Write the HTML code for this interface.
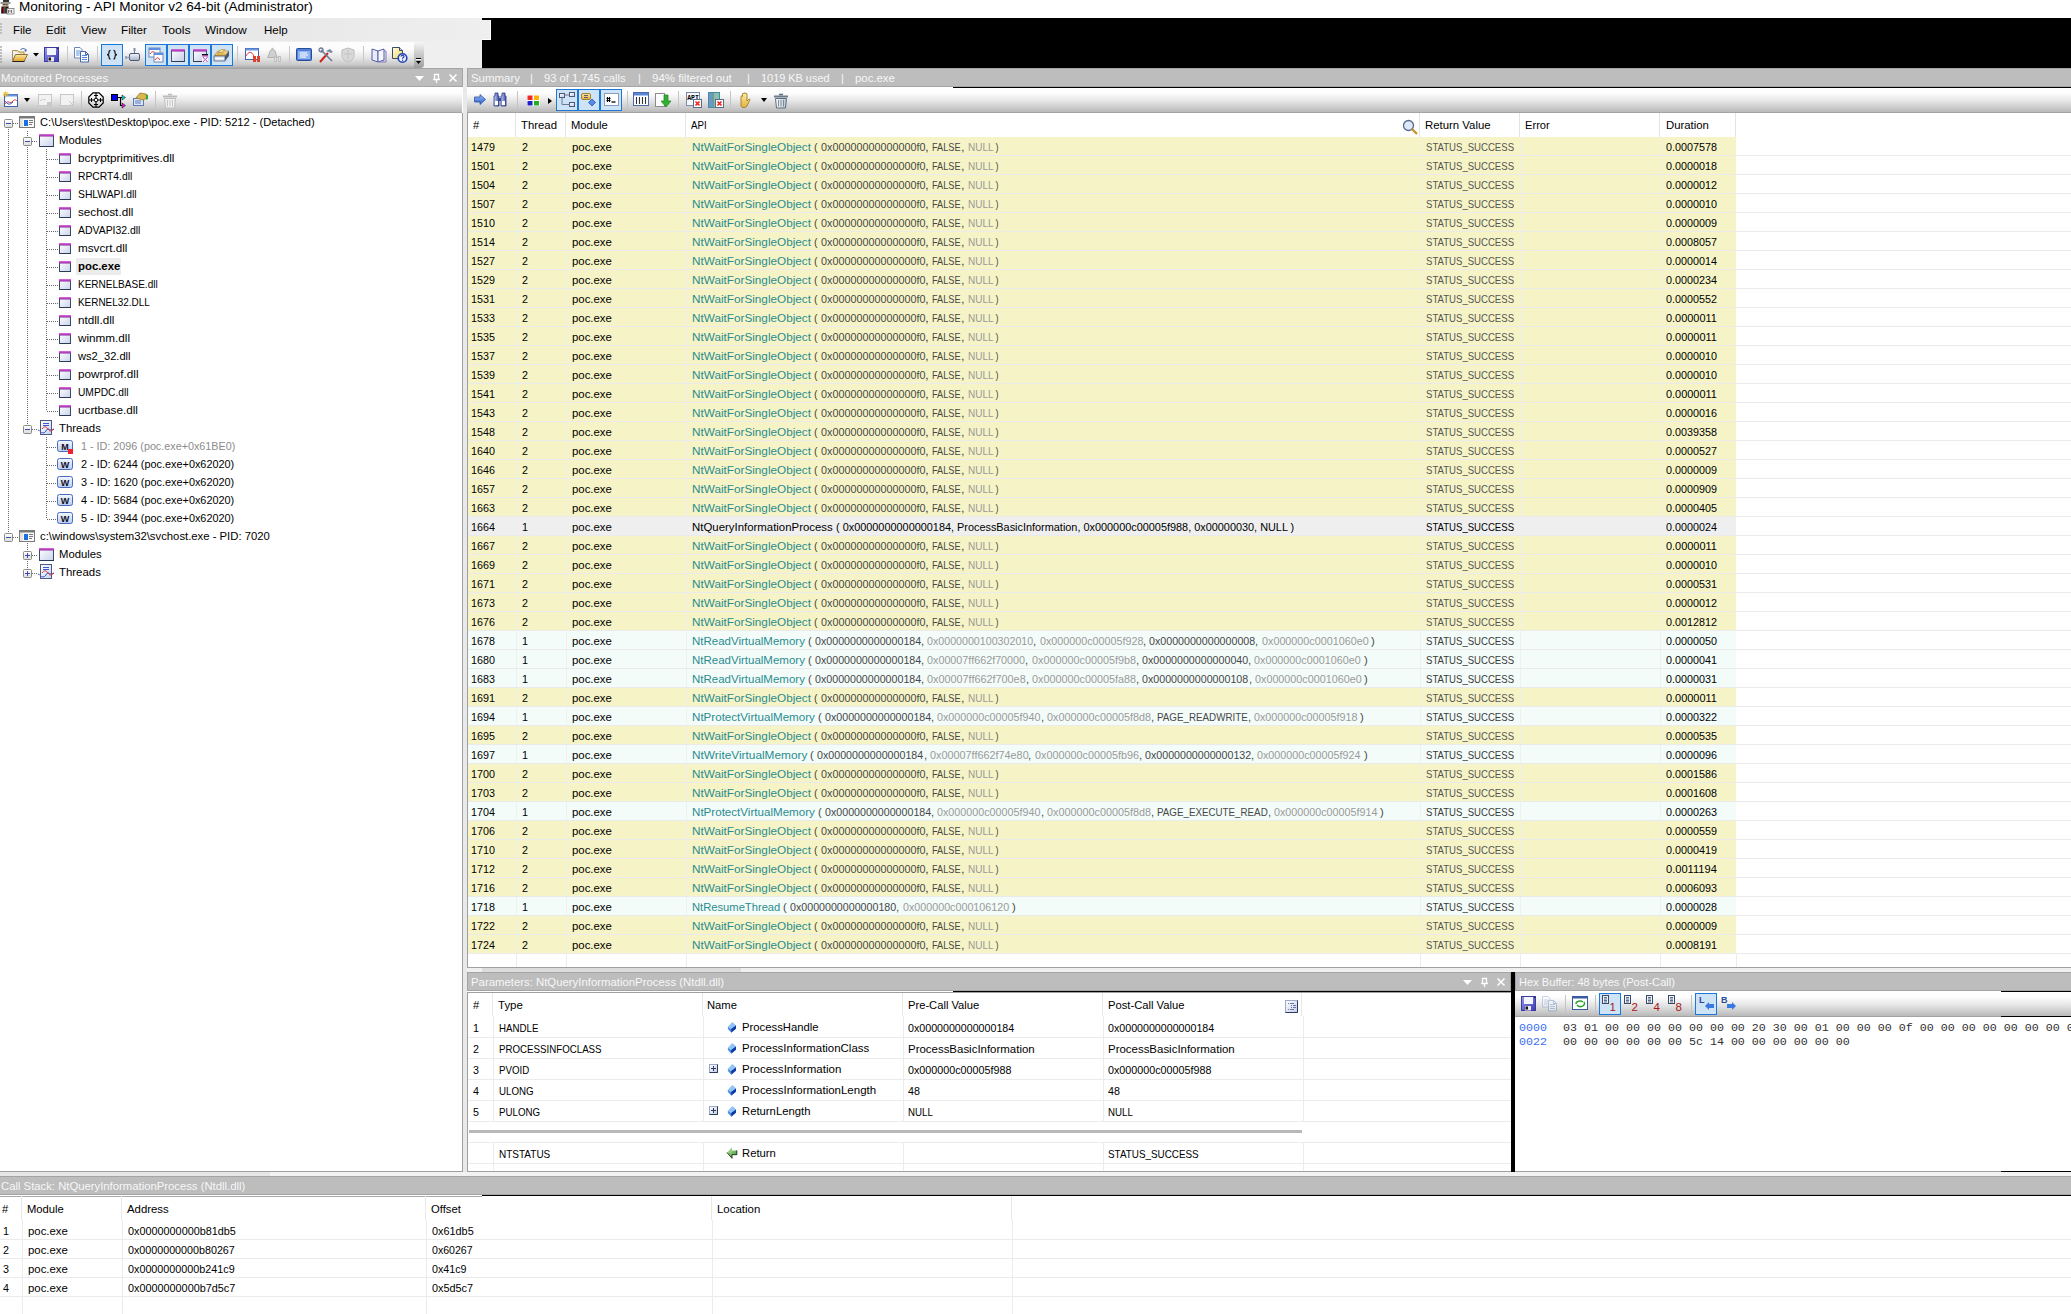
<!DOCTYPE html><html><head><meta charset="utf-8"><style>
*{margin:0;padding:0;box-sizing:border-box}
html,body{width:2071px;height:1314px;overflow:hidden;background:#fff}
body{position:relative;font-family:"Liberation Sans",sans-serif;font-size:11px;color:#000;line-height:1}
.a{position:absolute}
.t{position:absolute;white-space:pre}
svg{position:absolute;overflow:visible}
.ptitle{position:absolute;height:19px;background:#bdbdbd;border:1px solid #a4a4a4;color:#f7f7f7;font-size:11.5px}
.ptitle .t{top:4px}
.tb{position:absolute;height:26px;background:linear-gradient(#ffffff 0%,#fdfdfd 25%,#e6e6e6 55%,#c9c9c9 85%,#b9b9b9 100%);border-bottom:1px solid #a3a3a3}
.chk{position:absolute;background:#cfe3f6;border:1px solid #1a78d6}
.sep{position:absolute;width:1px;background:#c4c4c4}
.rl{position:absolute;height:1px;background:#ececec}
.vl{position:absolute;width:1px;background:#e6e6e6}
</style></head><body>
<svg width="0" height="0" style="left:0;top:0"><defs><linearGradient id="fold" x1="0" y1="0" x2="0" y2="1"><stop offset="0" stop-color="#fbe9a0"/><stop offset="1" stop-color="#e0a020"/></linearGradient><linearGradient id="joyg" x1="0" y1="0" x2="0" y2="1"><stop offset="0" stop-color="#f4f6fa"/><stop offset="1" stop-color="#a8b4c8"/></linearGradient><linearGradient id="winb" x1="0" y1="0" x2="1" y2="1"><stop offset="0" stop-color="#ffffff"/><stop offset="1" stop-color="#c4cce8"/></linearGradient><linearGradient id="purp" x1="0" y1="0" x2="0" y2="1"><stop offset="0" stop-color="#e070e0"/><stop offset="1" stop-color="#9020a0"/></linearGradient><linearGradient id="ylw" x1="0" y1="0" x2="0" y2="1"><stop offset="0" stop-color="#fbeaa8"/><stop offset="1" stop-color="#e8b030"/></linearGradient><linearGradient id="hlp" x1="0" y1="0" x2="1" y2="1"><stop offset="0" stop-color="#fffbe0"/><stop offset="1" stop-color="#f0d860"/></linearGradient><linearGradient id="arw" x1="0" y1="0" x2="0" y2="1"><stop offset="0" stop-color="#9cc0f4"/><stop offset="1" stop-color="#2a5ac8"/></linearGradient><linearGradient id="bino" x1="0" y1="0" x2="1" y2="0"><stop offset="0" stop-color="#c8d4f0"/><stop offset="1" stop-color="#3a4aa8"/></linearGradient><linearGradient id="trs" x1="0" y1="0" x2="1" y2="0"><stop offset="0" stop-color="#ffffff"/><stop offset="1" stop-color="#b8c4d0"/></linearGradient><linearGradient id="hnd" x1="0" y1="0" x2="0" y2="1"><stop offset="0" stop-color="#fff0a0"/><stop offset="1" stop-color="#e0b040"/></linearGradient><linearGradient id="grn" x1="0" y1="0" x2="1" y2="1"><stop offset="0" stop-color="#c8f0b0"/><stop offset="1" stop-color="#3a8a30"/></linearGradient><linearGradient id="flop" x1="0" y1="0" x2="1" y2="1"><stop offset="0" stop-color="#9a9af0"/><stop offset="1" stop-color="#3a3ab0"/></linearGradient></defs></svg>
<svg style="left:0px;top:0px" width="16" height="16" viewBox="0 0 16 16"><path d="M3 0h6v2H3z" fill="#333"/><path d="M0.5 2.5h10v1h-10z" fill="#2a2a2a"/><path d="M2.5 3.5h6v3h-6z" fill="#b89a80"/><rect x="3" y="4" width="2" height="1" fill="#444"/><rect x="5.5" y="4" width="2" height="1" fill="#444"/><rect x="3" y="5.5" width="3" height="1.2" fill="#f0c090"/><path d="M1.5 6.5h7l0.5 7H1z" fill="#1a1a1a"/><path d="M3 7h1v6H3z" fill="#c00010"/><path d="M4 7h1.5v6H4z" fill="#555"/><rect x="7" y="8.5" width="7" height="5.5" fill="#f4f4f4" stroke="#777" stroke-width="0.8"/><path d="M8.5 13V10l1.5 1.5L11.5 10v3" stroke="#666" fill="none" stroke-width="0.9"/></svg>
<div class="t" style="left:19px;top:-1px;font-size:13.5px;line-height:16px;transform:scaleX(1.0043);transform-origin:0 0;">Monitoring - API Monitor v2 64-bit (Administrator)</div>
<div class="a" style="left:0px;top:18px;width:491px;height:23px;background:linear-gradient(90deg,#e4e4e4,#e9e9e9 300px,#efefef)"></div>
<svg style="left:0px;top:23px" width="3" height="13" viewBox="0 0 3 13"><path d="M0 1h2M0 4h2M0 7h2M0 10h2" stroke="#999"/></svg>
<div class="t" style="left:13px;top:24px;font-size:11.8px;line-height:13px;transform:scaleX(0.9718);transform-origin:0 0;">File</div>
<div class="t" style="left:46px;top:24px;font-size:11.8px;line-height:13px;transform:scaleX(0.9703);transform-origin:0 0;">Edit</div>
<div class="t" style="left:81px;top:24px;font-size:11.8px;line-height:13px;transform:scaleX(0.9931);transform-origin:0 0;">View</div>
<div class="t" style="left:121px;top:24px;font-size:11.8px;line-height:13px;transform:scaleX(0.9905);transform-origin:0 0;">Filter</div>
<div class="t" style="left:162px;top:24px;font-size:11.8px;line-height:13px;transform:scaleX(1.0425);transform-origin:0 0;">Tools</div>
<div class="t" style="left:205px;top:24px;font-size:11.8px;line-height:13px;transform:scaleX(0.9922);transform-origin:0 0;">Window</div>
<div class="t" style="left:264px;top:24px;font-size:11.8px;line-height:13px;transform:scaleX(0.9768);transform-origin:0 0;">Help</div>
<div class="a" style="left:0px;top:41px;width:482px;height:27px;background:#efefef"></div>
<div class="a" style="left:0px;top:42px;width:424px;height:26px;background:linear-gradient(#fdfdfd 0%,#fbfbfb 30%,#e4e4e4 62%,#c8c8c8 88%,#a8a8a8 100%);border-radius:0 4px 4px 0"></div>
<div class="a" style="left:414px;top:42px;width:10px;height:26px;background:linear-gradient(#f6f6f6 0%,#d0d0d0 40%,#b0b0b0 80%,#9c9c9c 100%);border-radius:0 4px 4px 0"></div>
<svg style="left:416px;top:58px" width="6" height="7" viewBox="0 0 6 7"><path d="M0 0.5h5" stroke="#000"/><path d="M0 1.5h5" stroke="#fff"/><path d="M0 3h5l-2.5 3z" fill="#000"/></svg>
<svg style="left:0px;top:46px" width="3" height="17" viewBox="0 0 3 17"><path d="M0 1h2M0 4h2M0 7h2M0 10h2M0 13h2M0 16h2" stroke="#888"/></svg>
<div class="a" style="left:67px;top:46px;width:1px;height:17px;background:#c8c8c8"></div>
<div class="a" style="left:97px;top:46px;width:1px;height:17px;background:#c8c8c8"></div>
<div class="a" style="left:237px;top:46px;width:1px;height:17px;background:#c8c8c8"></div>
<div class="a" style="left:289px;top:46px;width:1px;height:17px;background:#c8c8c8"></div>
<div class="a" style="left:363px;top:46px;width:1px;height:17px;background:#c8c8c8"></div>
<div class="chk" style="left:101px;top:44px;width:22px;height:22px;"></div>
<div class="chk" style="left:145px;top:44px;width:22px;height:22px;"></div>
<div class="chk" style="left:167px;top:44px;width:22px;height:22px;"></div>
<div class="chk" style="left:189px;top:44px;width:22px;height:22px;"></div>
<div class="chk" style="left:211px;top:44px;width:22px;height:22px;"></div>
<svg style="left:11px;top:47px" width="18" height="16" viewBox="0 0 18 16"><path d="M1.5 3.5h5l1.5 1.5h5v3" fill="#f4dc8c" stroke="#a89060"/><path d="M1.5 3.5v10" stroke="#a89060"/><path d="M1.5 14.5l3-7h12l-3.5 7z" fill="url(#fold)" stroke="#8a7040"/><path d="M1.5 14.5h12" stroke="#222" stroke-width="1"/><path d="M9.5 3c1.5-2 4-2 5.5 0" fill="none" stroke="#5a78a8" stroke-width="1.2"/><path d="M16 2.5l-1 2.5-2-1.5z" fill="#3a68b8"/></svg>
<svg style="left:33px;top:53px" width="6" height="4" viewBox="0 0 6 4"><path d="M0 0h6l-3 3.5z" fill="#000"/></svg>
<svg style="left:44px;top:47px" width="16" height="16" viewBox="0 0 16 16"><rect x="0.5" y="0.5" width="14" height="14" fill="url(#flop)" stroke="#3a3aa0"/><rect x="3" y="1" width="9" height="7" fill="#f4f6ff"/><rect x="4" y="10" width="6" height="4.5" fill="#e8e8f0"/><rect x="4.5" y="10.5" width="2.5" height="3" fill="#111"/><rect x="13" y="1" width="1" height="1" fill="#222"/></svg>
<svg style="left:74px;top:47px" width="16" height="16" viewBox="0 0 16 16"><path d="M0.5 0.5h5.5l2 2v8.5H0.5z" fill="#fafcff" stroke="#6a86b8"/><path d="M2 4h4.5M2 6h4.5M2 8h3.5" stroke="#5f9ae0"/><path d="M6.5 4.5h5l3 3v7.5h-8z" fill="#fafcff" stroke="#4a68a8"/><path d="M8 8.5h5M8 10.5h5M8 12.5h5" stroke="#4f8ae0"/><path d="M11.5 4.5v3h3" fill="none" stroke="#4a68a8"/></svg>
<svg style="left:104px;top:47px" width="16" height="16" viewBox="0 0 16 16"><path d="M6.5 3.3c-1.3 0-1.5 0.8-1.5 2.2S4.3 7.6 3 7.6c1.3 0 2 0.8 2 2.1s0.2 2.4 1.5 2.4M9.5 3.3c1.3 0 1.5 0.8 1.5 2.2s0.7 2.1 2 2.1c-1.3 0-2 0.8-2 2.1s-0.2 2.4-1.5 2.4" fill="none" stroke="#1a1a1a" stroke-width="1.2"/></svg>
<svg style="left:125px;top:47px" width="16" height="16" viewBox="0 0 16 16"><rect x="8.5" y="1" width="2" height="3" fill="#8090b0"/><path d="M9.5 4v2" stroke="#6a7a98"/><rect x="4.5" y="6.5" width="10" height="7" rx="1.5" fill="url(#joyg)" stroke="#4a5a78"/><path d="M0.5 10.5h4" stroke="#8a9ab8" stroke-width="1.4"/><rect x="0" y="9" width="2" height="3" fill="#9aaac4"/></svg>
<svg style="left:148px;top:47px" width="16" height="16" viewBox="0 0 16 16"><rect x="1" y="1" width="11" height="9" fill="#fff" stroke="#6d87b8"/><rect x="1" y="1" width="11" height="2" fill="#5d8ee0"/><path d="M2 7c2-3 4-3 6 0" stroke="#e03030" fill="none"/><rect x="6" y="6" width="9" height="9" fill="#fff" stroke="#6d87b8"/><rect x="6" y="6" width="9" height="2" fill="#5d8ee0"/><path d="M7 13c2-3 3-3 5 0" stroke="#e03030" fill="none"/></svg>
<svg style="left:170px;top:47px" width="16" height="16" viewBox="0 0 16 16"><rect x="1.5" y="2.5" width="13" height="12" fill="url(#winb)" stroke="#4a5670"/><rect x="1" y="2" width="14" height="2.5" fill="url(#purp)"/><path d="M1.5 14.5h13" stroke="#2a3a50"/></svg>
<svg style="left:192px;top:47px" width="16" height="16" viewBox="0 0 16 16"><rect x="1.5" y="2.5" width="13" height="12" fill="url(#winb)" stroke="#4a5670"/><rect x="1" y="2" width="14" height="2.5" fill="url(#purp)"/><path d="M1.5 14.5h13" stroke="#2a3a50"/><rect x="10" y="7" width="6" height="8" fill="#fff"/><rect x="10" y="7" width="6" height="1.5" fill="#111"/><rect x="10" y="8.5" width="6" height="1" fill="#a030b0"/><path d="M11 10l2 2.5-2 2.5M15.5 10l-2 2.5 2 2.5" stroke="#b040c0" fill="none"/></svg>
<svg style="left:213px;top:47px" width="17" height="16" viewBox="0 0 17 16"><path d="M1 9l4-5h11l-4 5z" fill="url(#ylw)" stroke="#a08030" stroke-width="0.7"/><path d="M5 5.5l3-3h4l-3 3z" fill="#f4e0a0" stroke="#a08030" stroke-width="0.6"/><path d="M4 7h8M7 4.5l-3 4M11 4.5l-3 4" stroke="#c8a040" stroke-width="0.6"/><path d="M1 9h11v5H1z" fill="#dde6f4" stroke="#4a5a78" stroke-width="0.8"/><path d="M12 9l4-5v5l-4 5z" fill="#4a5a78"/><path d="M2.5 11.5h8" stroke="#fff" stroke-width="1.2"/></svg>
<svg style="left:245px;top:47px" width="16" height="16" viewBox="0 0 16 16"><rect x="0.5" y="1.5" width="13" height="11" fill="#fff" stroke="#3d63b0"/><rect x="0.5" y="1.5" width="13" height="2" fill="#6a96e0"/><path d="M1 9c3-5 5-5 8 0" stroke="#e03a3a" fill="none"/><rect x="8" y="9" width="3" height="6" fill="#e0402a"/><rect x="12" y="9" width="3" height="6" fill="#e0402a"/></svg>
<svg style="left:266px;top:47px" width="16" height="16" viewBox="0 0 16 16"><path d="M1.5 10.5c1.5-1 1.5-6 3.5-7.5s4 0 4.5 2 0.5 4 2 5.5z" fill="#d0d0d0" stroke="#b0b0b0"/><circle cx="6.5" cy="2" r="1.2" fill="#c0c0c0"/><rect x="8.5" y="9.5" width="2" height="5" fill="#e0e0e0" stroke="#b8b8b8" stroke-width="0.8"/><rect x="12.5" y="9.5" width="2" height="5" fill="#e0e0e0" stroke="#b8b8b8" stroke-width="0.8"/></svg>
<svg style="left:296px;top:47px" width="16" height="16" viewBox="0 0 16 16"><rect x="0.5" y="1.5" width="15" height="12" rx="1" fill="#4f7fd8" stroke="#2a4d9a"/><rect x="2" y="4" width="12" height="8" fill="#8fb4f0"/><path d="M4 6h7M4 8h8M4 10h6" stroke="#fff"/></svg>
<svg style="left:318px;top:47px" width="16" height="16" viewBox="0 0 16 16"><path d="M2 15L10 6" stroke="#d02020" stroke-width="2"/><path d="M8 4l4-2 3 3-2 1z" fill="#7a8aa8"/><path d="M3 3l11 11" stroke="#6a7a98" stroke-width="1.6"/><circle cx="3" cy="3" r="2" fill="none" stroke="#6a7a98" stroke-width="1.3"/></svg>
<svg style="left:340px;top:47px" width="16" height="16" viewBox="0 0 16 16"><path d="M8 1l6 2v5c0 4-3 6-6 7-3-1-6-3-6-7V3z" fill="#d8d8d8" stroke="#bdbdbd"/><path d="M8 3v10M4 7h8" stroke="#c4c4c4"/></svg>
<svg style="left:371px;top:47px" width="16" height="16" viewBox="0 0 16 16"><path d="M1 2l6 2v11l-6-2z" fill="#e6ecf8" stroke="#5a5aa8"/><path d="M7 4l6-2v11l-6 2z" fill="#f4f6fc" stroke="#5a5aa8"/><path d="M13 4h2v11H8" fill="none" stroke="#7a7ac8"/></svg>
<svg style="left:392px;top:47px" width="16" height="16" viewBox="0 0 16 16"><path d="M0.5 0.5h7l3 3v8H0.5z" fill="url(#hlp)" stroke="#3a4a6a"/><path d="M7.5 0.5v3h3" fill="#c8d4e8" stroke="#3a4a6a"/><circle cx="10.5" cy="11" r="4.3" fill="#eef4ff" stroke="#2040b8" stroke-width="1.6"/><path d="M9 9.5c0-1.5 3-1.5 3 0 0 1-1.5 1-1.5 2.2" fill="none" stroke="#2a40a8" stroke-width="1.2"/><rect x="10" y="12.6" width="1.2" height="1.2" fill="#2a40a8"/></svg>
<div class="a" style="left:482px;top:18px;width:1589px;height:50px;background:#000"></div>
<div class="a" style="left:482px;top:20px;width:9px;height:20px;background:#efefef;border-right:1px solid #fff;border-bottom:1px solid #fff"></div>
<div class="ptitle" style="left:0px;top:68px;width:463px;border-left:none;"></div>
<div class="t" style="left:1px;top:72px;font-size:11.3px;line-height:13px;color:#f7f7f7;transform:scaleX(1.0098);transform-origin:0 0;">Monitored Processes</div>
<svg style="left:415px;top:76px" width="9" height="5" viewBox="0 0 9 5"><path d="M0 0h9l-4.5 5z" fill="#fff"/></svg>
<svg style="left:433px;top:74px" width="7" height="9" viewBox="0 0 7 9"><path d="M1.5 0.5h4v5h-4z" fill="none" stroke="#fff" stroke-width="1.3"/><path d="M0 5.5h7" stroke="#fff" stroke-width="1.2"/><path d="M3.5 6v3" stroke="#fff" stroke-width="1.2"/></svg>
<svg style="left:449px;top:74px" width="8" height="8" viewBox="0 0 8 8"><path d="M0.5 0.5l7 7M7.5 0.5l-7 7" stroke="#fff" stroke-width="1.5"/></svg>
<div class="tb" style="left:0;top:87px;width:462px"></div>
<div class="a" style="left:81px;top:91px;width:1px;height:18px;background:#c4c4c4"></div>
<div class="a" style="left:155px;top:91px;width:1px;height:18px;background:#c4c4c4"></div>
<svg style="left:3px;top:91px" width="16" height="16" viewBox="0 0 16 16"><rect x="1.5" y="3.5" width="13" height="12" fill="#fff" stroke="#3d63b0"/><rect x="1.5" y="3.5" width="13" height="2" fill="#6a96e0"/><path d="M2 13c3-5 5 1 8-3 2-2 3-1 4 0" stroke="#e03a3a" fill="none"/><path d="M2 10c3 4 5 4 8 1" stroke="#3a5ad0" fill="none"/><path d="M2.5 0.5v6M0 3h6M0.5 1l4 4M4.5 1l-4 4" stroke="#f0c020" stroke-width="1"/></svg>
<svg style="left:37px;top:92px" width="16" height="16" viewBox="0 0 16 16"><rect x="1.5" y="2.5" width="13" height="11" fill="#f2f2f2" stroke="#c8c8c8"/><path d="M3 9c2-3 4 0 6-2" stroke="#c8c8c8" fill="none"/><rect x="10" y="10" width="5" height="5" fill="#c8c8c8"/></svg>
<svg style="left:59px;top:92px" width="16" height="16" viewBox="0 0 16 16"><rect x="1.5" y="2.5" width="13" height="11" fill="#f2f2f2" stroke="#c8c8c8"/><path d="M10 9l5 5M15 9l-5 5" stroke="#c8c8c8"/></svg>
<svg style="left:88px;top:92px" width="16" height="16" viewBox="0 0 16 16"><path d="M5 0.8h6l4.2 4.2v6l-4.2 4.2H5L0.8 11V5z" fill="none" stroke="#000" stroke-width="1.2"/><path d="M8 1v14M1 8h14" stroke="#000" stroke-width="1.1"/><path d="M6 3.5h4M6 12.5h4M3.5 6v4M12.5 6v4" stroke="#000"/><circle cx="8" cy="8" r="1.8" fill="#fff" stroke="#000"/></svg>
<svg style="left:111px;top:92px" width="16" height="16" viewBox="0 0 16 16"><rect x="0.5" y="2.5" width="6" height="6" fill="#0000f0" stroke="#000"/><path d="M7 5.5h2.5v8h3" stroke="#000" fill="none" stroke-width="1.2"/><path d="M9.5 5.5h3" stroke="#000"/><path d="M11 3l3.5 2.5-3.5 2.5z" fill="#20d0d0" stroke="#000" stroke-width="0.5"/><path d="M11 11l3.5 2.5-3.5 2.5z" fill="#e020e0" stroke="#000" stroke-width="0.5"/></svg>
<svg style="left:132px;top:91px" width="17" height="16" viewBox="0 0 17 16"><rect x="1.5" y="7.5" width="10" height="7" fill="#dde6f6" stroke="#5a7ab8"/><path d="M3 10h6M3 12h6" stroke="#5a7ab8"/><path d="M4 7l4-5 6 1 1 4-4 2z" fill="#d8b850" stroke="#9a7a20" stroke-width="0.8"/><path d="M14 3l2 1v4l-2 1z" fill="#40a040"/></svg>
<svg style="left:162px;top:92px" width="16" height="17" viewBox="0 0 16 17"><path d="M6 2.5h4" stroke="#bcbcbc" stroke-width="1.5"/><path d="M1 4.5h14" stroke="#bcbcbc" stroke-width="2"/><path d="M2.5 6.5h11l-1 9.5h-9z" fill="#f2f2f2" stroke="#bcbcbc"/><path d="M5.5 8v6.5M8 8v6.5M10.5 8v6.5" stroke="#c4c4c4"/></svg>
<svg style="left:24px;top:98px" width="6" height="4" viewBox="0 0 6 4"><path d="M0 0h6l-3 4z" fill="#000"/></svg>
<div class="a" style="left:462px;top:113px;width:1px;height:1059px;background:#a0a0a0"></div>
<div class="a" style="left:0px;top:1171px;width:463px;height:1px;background:#a0a0a0"></div>
<svg width="0" height="0" style="left:0;top:0"><defs><linearGradient id="mg" x1="0" y1="0" x2="1" y2="1"><stop offset="0" stop-color="#ffffff"/><stop offset="1" stop-color="#c9d3ea"/></linearGradient></defs></svg>
<svg width="0" height="0" style="left:0;top:0"><defs><linearGradient id="eg" x1="0" y1="0" x2="0" y2="1"><stop offset="0" stop-color="#ffffff"/><stop offset="1" stop-color="#dcdcdc"/></linearGradient><linearGradient id="wg" x1="0" y1="0" x2="0" y2="1"><stop offset="0" stop-color="#f4f8ff"/><stop offset="1" stop-color="#b8ccf0"/></linearGradient></defs></svg>
<div class="a" style="left:8px;top:129px;width:1px;height:407px;background:repeating-linear-gradient(180deg,#6a6a6a 0 1px,transparent 1px 2px)"></div>
<div class="a" style="left:27px;top:131px;width:1px;height:294px;background:repeating-linear-gradient(180deg,#6a6a6a 0 1px,transparent 1px 2px)"></div>
<div class="a" style="left:46px;top:149px;width:1px;height:261px;background:repeating-linear-gradient(180deg,#6a6a6a 0 1px,transparent 1px 2px)"></div>
<div class="a" style="left:46px;top:437px;width:1px;height:81px;background:repeating-linear-gradient(180deg,#6a6a6a 0 1px,transparent 1px 2px)"></div>
<div class="a" style="left:27px;top:543px;width:1px;height:26px;background:repeating-linear-gradient(180deg,#6a6a6a 0 1px,transparent 1px 2px)"></div>
<svg style="left:4px;top:119px" width="9" height="9" viewBox="0 0 9 9"><rect x="0.5" y="0.5" width="8" height="8" rx="1" fill="url(#eg)" stroke="#8a8a8a"/><path d="M2 4.5h5" stroke="#3a4ab0"/></svg>
<div class="a" style="left:13px;top:123px;width:6px;height:1px;background:repeating-linear-gradient(90deg,#6a6a6a 0 1px,transparent 1px 2px)"></div>
<svg style="left:19px;top:116px" width="16" height="12" viewBox="0 0 16 12"><rect x="0.5" y="0.5" width="15" height="11" fill="#fafafa" stroke="#7a7a7a"/><rect x="0.5" y="0.5" width="15" height="2" fill="#787878"/><rect x="1" y="3" width="3" height="8" fill="#e4e4e4"/><rect x="5" y="4" width="4" height="6" fill="#1a70e0"/><path d="M10 4.5h4M10 6.5h4M10 8.5h3" stroke="#7a7a7a"/></svg>
<div class="t" style="left:40px;top:116px;font-size:11.3px;line-height:13px;transform:scaleX(0.9852);transform-origin:0 0;">C:\Users\test\Desktop\poc.exe - PID: 5212 - (Detached)</div>
<svg style="left:23px;top:137px" width="9" height="9" viewBox="0 0 9 9"><rect x="0.5" y="0.5" width="8" height="8" rx="1" fill="url(#eg)" stroke="#8a8a8a"/><path d="M2 4.5h5" stroke="#3a4ab0"/></svg>
<div class="a" style="left:32px;top:141px;width:6px;height:1px;background:repeating-linear-gradient(90deg,#6a6a6a 0 1px,transparent 1px 2px)"></div>
<svg style="left:39px;top:134px" width="15" height="13" viewBox="0 0 15 13"><rect x="0.5" y="0.5" width="14" height="12" fill="url(#mg)" stroke="#3a4a68"/><rect x="0" y="0" width="15" height="2.5" fill="url(#purp)"/><path d="M1 12.5h14" stroke="#2a3a58"/></svg>
<div class="t" style="left:59px;top:134px;font-size:11.3px;line-height:13px;">Modules</div>
<div class="a" style="left:47px;top:159px;width:11px;height:1px;background:repeating-linear-gradient(90deg,#6a6a6a 0 1px,transparent 1px 2px)"></div>
<svg style="left:59px;top:153px" width="12" height="11" viewBox="0 0 12 11"><rect x="0.5" y="0.5" width="11" height="10" fill="url(#mg)" stroke="#3a4a68"/><rect x="0" y="0" width="12" height="2.5" fill="url(#purp)"/><path d="M1 10.5h11" stroke="#2a3a58"/></svg>
<div class="t" style="left:78px;top:152px;font-size:11.3px;line-height:13px;transform:scaleX(1.0383);transform-origin:0 0;">bcryptprimitives.dll</div>
<div class="a" style="left:47px;top:177px;width:11px;height:1px;background:repeating-linear-gradient(90deg,#6a6a6a 0 1px,transparent 1px 2px)"></div>
<svg style="left:59px;top:171px" width="12" height="11" viewBox="0 0 12 11"><rect x="0.5" y="0.5" width="11" height="10" fill="url(#mg)" stroke="#3a4a68"/><rect x="0" y="0" width="12" height="2.5" fill="url(#purp)"/><path d="M1 10.5h11" stroke="#2a3a58"/></svg>
<div class="t" style="left:78px;top:170px;font-size:11.3px;line-height:13px;transform:scaleX(0.9136);transform-origin:0 0;">RPCRT4.dll</div>
<div class="a" style="left:47px;top:195px;width:11px;height:1px;background:repeating-linear-gradient(90deg,#6a6a6a 0 1px,transparent 1px 2px)"></div>
<svg style="left:59px;top:189px" width="12" height="11" viewBox="0 0 12 11"><rect x="0.5" y="0.5" width="11" height="10" fill="url(#mg)" stroke="#3a4a68"/><rect x="0" y="0" width="12" height="2.5" fill="url(#purp)"/><path d="M1 10.5h11" stroke="#2a3a58"/></svg>
<div class="t" style="left:78px;top:188px;font-size:11.3px;line-height:13px;transform:scaleX(0.9152);transform-origin:0 0;">SHLWAPI.dll</div>
<div class="a" style="left:47px;top:213px;width:11px;height:1px;background:repeating-linear-gradient(90deg,#6a6a6a 0 1px,transparent 1px 2px)"></div>
<svg style="left:59px;top:207px" width="12" height="11" viewBox="0 0 12 11"><rect x="0.5" y="0.5" width="11" height="10" fill="url(#mg)" stroke="#3a4a68"/><rect x="0" y="0" width="12" height="2.5" fill="url(#purp)"/><path d="M1 10.5h11" stroke="#2a3a58"/></svg>
<div class="t" style="left:78px;top:206px;font-size:11.3px;line-height:13px;transform:scaleX(1.0371);transform-origin:0 0;">sechost.dll</div>
<div class="a" style="left:47px;top:231px;width:11px;height:1px;background:repeating-linear-gradient(90deg,#6a6a6a 0 1px,transparent 1px 2px)"></div>
<svg style="left:59px;top:225px" width="12" height="11" viewBox="0 0 12 11"><rect x="0.5" y="0.5" width="11" height="10" fill="url(#mg)" stroke="#3a4a68"/><rect x="0" y="0" width="12" height="2.5" fill="url(#purp)"/><path d="M1 10.5h11" stroke="#2a3a58"/></svg>
<div class="t" style="left:78px;top:224px;font-size:11.3px;line-height:13px;transform:scaleX(0.9236);transform-origin:0 0;">ADVAPI32.dll</div>
<div class="a" style="left:47px;top:249px;width:11px;height:1px;background:repeating-linear-gradient(90deg,#6a6a6a 0 1px,transparent 1px 2px)"></div>
<svg style="left:59px;top:243px" width="12" height="11" viewBox="0 0 12 11"><rect x="0.5" y="0.5" width="11" height="10" fill="url(#mg)" stroke="#3a4a68"/><rect x="0" y="0" width="12" height="2.5" fill="url(#purp)"/><path d="M1 10.5h11" stroke="#2a3a58"/></svg>
<div class="t" style="left:78px;top:242px;font-size:11.3px;line-height:13px;transform:scaleX(1.0367);transform-origin:0 0;">msvcrt.dll</div>
<div class="a" style="left:47px;top:267px;width:11px;height:1px;background:repeating-linear-gradient(90deg,#6a6a6a 0 1px,transparent 1px 2px)"></div>
<svg style="left:59px;top:261px" width="12" height="11" viewBox="0 0 12 11"><rect x="0.5" y="0.5" width="11" height="10" fill="url(#mg)" stroke="#3a4a68"/><rect x="0" y="0" width="12" height="2.5" fill="url(#purp)"/><path d="M1 10.5h11" stroke="#2a3a58"/></svg>
<div class="a" style="left:76px;top:258px;width:45px;height:17px;background:#ececec"></div>
<div class="t" style="left:78px;top:260px;font-size:11.3px;line-height:13px;font-weight:bold;transform:scaleX(1.0064);transform-origin:0 0;">poc.exe</div>
<div class="a" style="left:47px;top:285px;width:11px;height:1px;background:repeating-linear-gradient(90deg,#6a6a6a 0 1px,transparent 1px 2px)"></div>
<svg style="left:59px;top:279px" width="12" height="11" viewBox="0 0 12 11"><rect x="0.5" y="0.5" width="11" height="10" fill="url(#mg)" stroke="#3a4a68"/><rect x="0" y="0" width="12" height="2.5" fill="url(#purp)"/><path d="M1 10.5h11" stroke="#2a3a58"/></svg>
<div class="t" style="left:78px;top:278px;font-size:11.3px;line-height:13px;transform:scaleX(0.8872);transform-origin:0 0;">KERNELBASE.dll</div>
<div class="a" style="left:47px;top:303px;width:11px;height:1px;background:repeating-linear-gradient(90deg,#6a6a6a 0 1px,transparent 1px 2px)"></div>
<svg style="left:59px;top:297px" width="12" height="11" viewBox="0 0 12 11"><rect x="0.5" y="0.5" width="11" height="10" fill="url(#mg)" stroke="#3a4a68"/><rect x="0" y="0" width="12" height="2.5" fill="url(#purp)"/><path d="M1 10.5h11" stroke="#2a3a58"/></svg>
<div class="t" style="left:78px;top:296px;font-size:11.3px;line-height:13px;transform:scaleX(0.8789);transform-origin:0 0;">KERNEL32.DLL</div>
<div class="a" style="left:47px;top:321px;width:11px;height:1px;background:repeating-linear-gradient(90deg,#6a6a6a 0 1px,transparent 1px 2px)"></div>
<svg style="left:59px;top:315px" width="12" height="11" viewBox="0 0 12 11"><rect x="0.5" y="0.5" width="11" height="10" fill="url(#mg)" stroke="#3a4a68"/><rect x="0" y="0" width="12" height="2.5" fill="url(#purp)"/><path d="M1 10.5h11" stroke="#2a3a58"/></svg>
<div class="t" style="left:78px;top:314px;font-size:11.3px;line-height:13px;transform:scaleX(1.0355);transform-origin:0 0;">ntdll.dll</div>
<div class="a" style="left:47px;top:339px;width:11px;height:1px;background:repeating-linear-gradient(90deg,#6a6a6a 0 1px,transparent 1px 2px)"></div>
<svg style="left:59px;top:333px" width="12" height="11" viewBox="0 0 12 11"><rect x="0.5" y="0.5" width="11" height="10" fill="url(#mg)" stroke="#3a4a68"/><rect x="0" y="0" width="12" height="2.5" fill="url(#purp)"/><path d="M1 10.5h11" stroke="#2a3a58"/></svg>
<div class="t" style="left:78px;top:332px;font-size:11.3px;line-height:13px;transform:scaleX(1.0369);transform-origin:0 0;">winmm.dll</div>
<div class="a" style="left:47px;top:357px;width:11px;height:1px;background:repeating-linear-gradient(90deg,#6a6a6a 0 1px,transparent 1px 2px)"></div>
<svg style="left:59px;top:351px" width="12" height="11" viewBox="0 0 12 11"><rect x="0.5" y="0.5" width="11" height="10" fill="url(#mg)" stroke="#3a4a68"/><rect x="0" y="0" width="12" height="2.5" fill="url(#purp)"/><path d="M1 10.5h11" stroke="#2a3a58"/></svg>
<div class="t" style="left:78px;top:350px;font-size:11.3px;line-height:13px;transform:scaleX(0.9841);transform-origin:0 0;">ws2_32.dll</div>
<div class="a" style="left:47px;top:375px;width:11px;height:1px;background:repeating-linear-gradient(90deg,#6a6a6a 0 1px,transparent 1px 2px)"></div>
<svg style="left:59px;top:369px" width="12" height="11" viewBox="0 0 12 11"><rect x="0.5" y="0.5" width="11" height="10" fill="url(#mg)" stroke="#3a4a68"/><rect x="0" y="0" width="12" height="2.5" fill="url(#purp)"/><path d="M1 10.5h11" stroke="#2a3a58"/></svg>
<div class="t" style="left:78px;top:368px;font-size:11.3px;line-height:13px;transform:scaleX(1.0373);transform-origin:0 0;">powrprof.dll</div>
<div class="a" style="left:47px;top:393px;width:11px;height:1px;background:repeating-linear-gradient(90deg,#6a6a6a 0 1px,transparent 1px 2px)"></div>
<svg style="left:59px;top:387px" width="12" height="11" viewBox="0 0 12 11"><rect x="0.5" y="0.5" width="11" height="10" fill="url(#mg)" stroke="#3a4a68"/><rect x="0" y="0" width="12" height="2.5" fill="url(#purp)"/><path d="M1 10.5h11" stroke="#2a3a58"/></svg>
<div class="t" style="left:78px;top:386px;font-size:11.3px;line-height:13px;transform:scaleX(0.9038);transform-origin:0 0;">UMPDC.dll</div>
<div class="a" style="left:47px;top:411px;width:11px;height:1px;background:repeating-linear-gradient(90deg,#6a6a6a 0 1px,transparent 1px 2px)"></div>
<svg style="left:59px;top:405px" width="12" height="11" viewBox="0 0 12 11"><rect x="0.5" y="0.5" width="11" height="10" fill="url(#mg)" stroke="#3a4a68"/><rect x="0" y="0" width="12" height="2.5" fill="url(#purp)"/><path d="M1 10.5h11" stroke="#2a3a58"/></svg>
<div class="t" style="left:78px;top:404px;font-size:11.3px;line-height:13px;transform:scaleX(1.0373);transform-origin:0 0;">ucrtbase.dll</div>
<svg style="left:23px;top:425px" width="9" height="9" viewBox="0 0 9 9"><rect x="0.5" y="0.5" width="8" height="8" rx="1" fill="url(#eg)" stroke="#8a8a8a"/><path d="M2 4.5h5" stroke="#3a4ab0"/></svg>
<div class="a" style="left:32px;top:429px;width:6px;height:1px;background:repeating-linear-gradient(90deg,#6a6a6a 0 1px,transparent 1px 2px)"></div>
<svg style="left:38px;top:420px" width="17" height="15" viewBox="0 0 17 15"><rect x="2.5" y="0.5" width="11" height="14" fill="url(#mg)" stroke="#4a5a80"/><path d="M5 3.5h6M5 5.5h6" stroke="#3a5ad0"/><path d="M0 10c2 0 2 3 5 3s3-4 5-4 3 2 6 0" stroke="#3a5ad0" fill="none"/><path d="M4 9c2-3 4-3 6 0s3 2 6 0" stroke="#e02a2a" fill="none"/></svg>
<div class="t" style="left:59px;top:422px;font-size:11.3px;line-height:13px;transform:scaleX(1.0100);transform-origin:0 0;">Threads</div>
<div class="a" style="left:47px;top:447px;width:10px;height:1px;background:repeating-linear-gradient(90deg,#6a6a6a 0 1px,transparent 1px 2px)"></div>
<svg style="left:57px;top:440px" width="16" height="14" viewBox="0 0 16 14"><rect x="0.5" y="0.5" width="15" height="11" rx="2" fill="url(#wg)" stroke="#4a6ac0"/><text x="8" y="9.5" font-size="9" font-weight="bold" text-anchor="middle" fill="#101028" font-family="Liberation Sans">M</text><rect x="11" y="9" width="5" height="5" fill="#f02030"/></svg>
<div class="t" style="left:81px;top:440px;font-size:11.3px;line-height:13px;color:#8c8c8c;transform:scaleX(0.9539);transform-origin:0 0;">1 - ID: 2096 (poc.exe+0x61BE0)</div>
<div class="a" style="left:47px;top:465px;width:10px;height:1px;background:repeating-linear-gradient(90deg,#6a6a6a 0 1px,transparent 1px 2px)"></div>
<svg style="left:57px;top:458px" width="16" height="14" viewBox="0 0 16 14"><rect x="0.5" y="0.5" width="15" height="11" rx="2" fill="url(#wg)" stroke="#4a6ac0"/><text x="8" y="9.5" font-size="9" font-weight="bold" text-anchor="middle" fill="#101028" font-family="Liberation Sans">W</text></svg>
<div class="t" style="left:81px;top:458px;font-size:11.3px;line-height:13px;transform:scaleX(0.9624);transform-origin:0 0;">2 - ID: 6244 (poc.exe+0x62020)</div>
<div class="a" style="left:47px;top:483px;width:10px;height:1px;background:repeating-linear-gradient(90deg,#6a6a6a 0 1px,transparent 1px 2px)"></div>
<svg style="left:57px;top:476px" width="16" height="14" viewBox="0 0 16 14"><rect x="0.5" y="0.5" width="15" height="11" rx="2" fill="url(#wg)" stroke="#4a6ac0"/><text x="8" y="9.5" font-size="9" font-weight="bold" text-anchor="middle" fill="#101028" font-family="Liberation Sans">W</text></svg>
<div class="t" style="left:81px;top:476px;font-size:11.3px;line-height:13px;transform:scaleX(0.9624);transform-origin:0 0;">3 - ID: 1620 (poc.exe+0x62020)</div>
<div class="a" style="left:47px;top:501px;width:10px;height:1px;background:repeating-linear-gradient(90deg,#6a6a6a 0 1px,transparent 1px 2px)"></div>
<svg style="left:57px;top:494px" width="16" height="14" viewBox="0 0 16 14"><rect x="0.5" y="0.5" width="15" height="11" rx="2" fill="url(#wg)" stroke="#4a6ac0"/><text x="8" y="9.5" font-size="9" font-weight="bold" text-anchor="middle" fill="#101028" font-family="Liberation Sans">W</text></svg>
<div class="t" style="left:81px;top:494px;font-size:11.3px;line-height:13px;transform:scaleX(0.9624);transform-origin:0 0;">4 - ID: 5684 (poc.exe+0x62020)</div>
<div class="a" style="left:47px;top:519px;width:10px;height:1px;background:repeating-linear-gradient(90deg,#6a6a6a 0 1px,transparent 1px 2px)"></div>
<svg style="left:57px;top:512px" width="16" height="14" viewBox="0 0 16 14"><rect x="0.5" y="0.5" width="15" height="11" rx="2" fill="url(#wg)" stroke="#4a6ac0"/><text x="8" y="9.5" font-size="9" font-weight="bold" text-anchor="middle" fill="#101028" font-family="Liberation Sans">W</text></svg>
<div class="t" style="left:81px;top:512px;font-size:11.3px;line-height:13px;transform:scaleX(0.9624);transform-origin:0 0;">5 - ID: 3944 (poc.exe+0x62020)</div>
<svg style="left:4px;top:533px" width="9" height="9" viewBox="0 0 9 9"><rect x="0.5" y="0.5" width="8" height="8" rx="1" fill="url(#eg)" stroke="#8a8a8a"/><path d="M2 4.5h5" stroke="#3a4ab0"/></svg>
<div class="a" style="left:13px;top:537px;width:6px;height:1px;background:repeating-linear-gradient(90deg,#6a6a6a 0 1px,transparent 1px 2px)"></div>
<svg style="left:19px;top:530px" width="16" height="12" viewBox="0 0 16 12"><rect x="0.5" y="0.5" width="15" height="11" fill="#fafafa" stroke="#7a7a7a"/><rect x="0.5" y="0.5" width="15" height="2" fill="#787878"/><rect x="1" y="3" width="3" height="8" fill="#e4e4e4"/><rect x="5" y="4" width="4" height="6" fill="#1a70e0"/><path d="M10 4.5h4M10 6.5h4M10 8.5h3" stroke="#7a7a7a"/></svg>
<div class="t" style="left:40px;top:530px;font-size:11.3px;line-height:13px;">c:\windows\system32\svchost.exe - PID: 7020</div>
<svg style="left:23px;top:551px" width="9" height="9" viewBox="0 0 9 9"><rect x="0.5" y="0.5" width="8" height="8" rx="1" fill="url(#eg)" stroke="#8a8a8a"/><path d="M2 4.5h5" stroke="#3a4ab0"/><path d="M4.5 2v5" stroke="#3a4ab0"/></svg>
<div class="a" style="left:32px;top:555px;width:6px;height:1px;background:repeating-linear-gradient(90deg,#6a6a6a 0 1px,transparent 1px 2px)"></div>
<svg style="left:39px;top:548px" width="15" height="13" viewBox="0 0 15 13"><rect x="0.5" y="0.5" width="14" height="12" fill="url(#mg)" stroke="#3a4a68"/><rect x="0" y="0" width="15" height="2.5" fill="url(#purp)"/><path d="M1 12.5h14" stroke="#2a3a58"/></svg>
<div class="t" style="left:59px;top:548px;font-size:11.3px;line-height:13px;">Modules</div>
<svg style="left:23px;top:569px" width="9" height="9" viewBox="0 0 9 9"><rect x="0.5" y="0.5" width="8" height="8" rx="1" fill="url(#eg)" stroke="#8a8a8a"/><path d="M2 4.5h5" stroke="#3a4ab0"/><path d="M4.5 2v5" stroke="#3a4ab0"/></svg>
<div class="a" style="left:32px;top:573px;width:6px;height:1px;background:repeating-linear-gradient(90deg,#6a6a6a 0 1px,transparent 1px 2px)"></div>
<svg style="left:38px;top:564px" width="17" height="15" viewBox="0 0 17 15"><rect x="2.5" y="0.5" width="11" height="14" fill="url(#mg)" stroke="#4a5a80"/><path d="M5 3.5h6M5 5.5h6" stroke="#3a5ad0"/><path d="M0 10c2 0 2 3 5 3s3-4 5-4 3 2 6 0" stroke="#3a5ad0" fill="none"/><path d="M4 9c2-3 4-3 6 0s3 2 6 0" stroke="#e02a2a" fill="none"/></svg>
<div class="t" style="left:59px;top:566px;font-size:11.3px;line-height:13px;transform:scaleX(1.0100);transform-origin:0 0;">Threads</div>
<div class="a" style="left:463px;top:68px;width:4px;height:1104px;background:#e9e9e9"></div>
<div class="ptitle" style="left:467px;top:68px;width:1604px;border-right:none;"></div>
<div class="t" style="left:471px;top:72px;font-size:11.3px;line-height:13px;color:#f7f7f7;transform:scaleX(1.0119);transform-origin:0 0;">Summary</div>
<div class="t" style="left:530px;top:72px;font-size:11.3px;line-height:13px;color:#f7f7f7;transform:scaleX(0.9900);transform-origin:0 0;">|</div>
<div class="t" style="left:544px;top:72px;font-size:11.3px;line-height:13px;color:#f7f7f7;transform:scaleX(0.9912);transform-origin:0 0;">93 of 1,745 calls</div>
<div class="t" style="left:638px;top:72px;font-size:11.3px;line-height:13px;color:#f7f7f7;transform:scaleX(0.9900);transform-origin:0 0;">|</div>
<div class="t" style="left:652px;top:72px;font-size:11.3px;line-height:13px;color:#f7f7f7;transform:scaleX(1.0152);transform-origin:0 0;">94% filtered out</div>
<div class="t" style="left:747px;top:72px;font-size:11.3px;line-height:13px;color:#f7f7f7;transform:scaleX(0.9900);transform-origin:0 0;">|</div>
<div class="t" style="left:761px;top:72px;font-size:11.3px;line-height:13px;color:#f7f7f7;transform:scaleX(0.9655);transform-origin:0 0;">1019 KB used</div>
<div class="t" style="left:841px;top:72px;font-size:11.3px;line-height:13px;color:#f7f7f7;transform:scaleX(0.9900);transform-origin:0 0;">|</div>
<div class="t" style="left:855px;top:72px;font-size:11.3px;line-height:13px;color:#f7f7f7;transform:scaleX(1.0074);transform-origin:0 0;">poc.exe</div>
<div class="tb" style="left:467px;top:87px;width:1604px"></div>
<div class="a" style="left:953px;top:87px;width:1118px;height:1px;background:#000"></div>
<div class="a" style="left:517px;top:91px;width:1px;height:18px;background:#c4c4c4"></div>
<div class="a" style="left:627px;top:91px;width:1px;height:18px;background:#c4c4c4"></div>
<div class="a" style="left:678px;top:91px;width:1px;height:18px;background:#c4c4c4"></div>
<div class="a" style="left:730px;top:91px;width:1px;height:18px;background:#c4c4c4"></div>
<div class="chk" style="left:556px;top:89px;width:22px;height:22px;"></div>
<div class="chk" style="left:578px;top:89px;width:22px;height:22px;"></div>
<div class="chk" style="left:600px;top:89px;width:22px;height:22px;"></div>
<svg style="left:474px;top:94px" width="12" height="11" viewBox="0 0 12 11"><path d="M0.5 3h5.5V0.5l5.5 5-5.5 5V8H0.5z" fill="url(#arw)" stroke="#2a52a8" stroke-width="0.8"/></svg>
<svg style="left:493px;top:92px" width="16" height="15" viewBox="0 0 16 15"><path d="M2 1h3v3h1v10H1V4h1z" fill="url(#bino)" stroke="#2a3a88" stroke-width="0.8"/><path d="M9 1h3v3h1v10H8V4h1z" fill="url(#bino)" stroke="#2a3a88" stroke-width="0.8"/><rect x="2" y="9" width="3" height="4" fill="#fff"/><rect x="9" y="9" width="3" height="4" fill="#fff"/><rect x="6" y="6" width="2" height="3" fill="#3a4a98"/></svg>
<svg style="left:527px;top:95px" width="13" height="11" viewBox="0 0 13 11"><rect x="0" y="0" width="13" height="11" fill="#fff"/><rect x="0.5" y="0.5" width="5" height="4.5" fill="#f02828"/><rect x="7" y="0.5" width="5" height="4.5" fill="#ffb000"/><rect x="0.5" y="6" width="5" height="4.5" fill="#2020c8"/><rect x="7" y="6" width="5" height="4.5" fill="#20b020"/></svg>
<svg style="left:559px;top:92px" width="16" height="16" viewBox="0 0 16 16"><rect x="0.5" y="1.5" width="5" height="4" fill="url(#winb)" stroke="#4a5a78"/><rect x="10.5" y="0.5" width="5" height="4" fill="url(#winb)" stroke="#4a5a78"/><rect x="10.5" y="10.5" width="5" height="4" fill="url(#winb)" stroke="#4a5a78"/><path d="M5.5 3h5M3 5.5v7h7.5" stroke="#6a7a98" fill="none"/></svg>
<svg style="left:581px;top:92px" width="16" height="16" viewBox="0 0 16 16"><rect x="0.5" y="1.5" width="9" height="6" rx="1.5" fill="url(#ylw)" stroke="#a08030"/><path d="M3 3.5h4M3 5.5h4" stroke="#5a5a78"/><path d="M11 7l3.5 3.5-3.5 3.5-3.5-3.5z" fill="#5a8ae8" stroke="#2a52b8" stroke-width="0.8"/></svg>
<svg style="left:603px;top:92px" width="16" height="16" viewBox="0 0 16 16"><rect x="1.5" y="1.5" width="14" height="12" fill="#fff" stroke="#8a9ab8"/><path d="M4.5 5v5M6.5 5v5M3.5 6.5h4M3.5 8.5h4" stroke="#000" stroke-width="1.1"/><path d="M8.5 10h4" stroke="#000" stroke-width="1.3"/></svg>
<svg style="left:633px;top:92px" width="16" height="16" viewBox="0 0 16 16"><rect x="0.5" y="0.5" width="15" height="13" fill="#fff" stroke="#4a6aa8"/><rect x="1" y="1" width="14" height="2.5" fill="#5a86d8"/><path d="M3.5 5v7M6.5 5v7M9.5 5v7M12.5 5v7" stroke="#333" stroke-width="1.1"/></svg>
<svg style="left:655px;top:92px" width="16" height="16" viewBox="0 0 16 16"><rect x="0.5" y="1.5" width="9" height="13" fill="#fff" stroke="#8a8a8a"/><path d="M9 3h4v6h3l-5 6-5-6h3z" fill="#30b030" stroke="#208020" stroke-width="0.7"/></svg>
<svg style="left:686px;top:92px" width="16" height="16" viewBox="0 0 16 16"><rect x="0.5" y="0.5" width="13" height="13" fill="#f4f8ff" stroke="#7a8aa8"/><text x="1.2" y="7.5" font-size="6.5" font-weight="bold" fill="#000" font-family="Liberation Mono">API</text><rect x="7.5" y="7.5" width="8" height="8" fill="#fff" stroke="#5a6a8a"/><path d="M9.5 9.5l4 4M13.5 9.5l-4 4" stroke="#f02010" stroke-width="1.6"/></svg>
<svg style="left:708px;top:92px" width="16" height="16" viewBox="0 0 16 16"><rect x="0.5" y="0.5" width="11" height="15" fill="#8ac0b0" stroke="#4a8aa0"/><rect x="1" y="1" width="3" height="14" fill="#6a98c8"/><path d="M5 1v14" stroke="#4a7a90"/><rect x="7.5" y="7.5" width="8" height="8" fill="#fff" stroke="#5a6a8a"/><path d="M9.5 9.5l4 4M13.5 9.5l-4 4" stroke="#f02010" stroke-width="1.6"/></svg>
<svg style="left:737px;top:92px" width="16" height="16" viewBox="0 0 16 16"><path d="M4 9V4.5c0-1 1.5-1 1.5 0V2c0-1 1.5-1 1.5 0v-0.5c0-1 1.5-1 1.5 0V2c0-1 1.5-1 1.5 0v7l1.5-1.5c1-1 2 0 1.2 1L10 14c-0.5 1-1.5 1.5-3 1.5H6c-1.5 0-2-1.5-2-2.5z" fill="url(#hnd)" stroke="#9a7020" stroke-width="0.8"/></svg>
<svg style="left:773px;top:92px" width="16" height="17" viewBox="0 0 16 17"><path d="M6 2.5h4" stroke="#5a6a7a" stroke-width="1.5"/><path d="M1 4.5h14" stroke="#6a7a8a" stroke-width="2"/><path d="M2.5 6.5h11l-1 9.5h-9z" fill="url(#trs)" stroke="#5a6a7a"/><path d="M5.5 8v6.5M8 8v6.5M10.5 8v6.5" stroke="#7a8a9a"/></svg>
<svg style="left:548px;top:98px" width="4" height="6" viewBox="0 0 4 6"><path d="M0 0l4 3L0 6z" fill="#000"/></svg>
<svg style="left:761px;top:98px" width="6" height="4" viewBox="0 0 6 4"><path d="M0 0h6l-3 4z" fill="#000"/></svg>
<div class="a" style="left:467px;top:113px;width:1px;height:855px;background:#a0a0a0"></div>
<div class="a" style="left:467px;top:967px;width:1604px;height:1px;background:#a0a0a0"></div>
<div class="a" style="left:467px;top:968px;width:1604px;height:4px;background:#f0f0f0"></div>
<div class="a" style="left:482px;top:968px;width:259px;height:4px;background:#dcdcdc"></div>
<div class="t" style="left:473px;top:119px;font-size:11.3px;line-height:13px;transform:scaleX(0.9900);transform-origin:0 0;">#</div>
<div class="t" style="left:521px;top:119px;font-size:11.3px;line-height:13px;transform:scaleX(1.0053);transform-origin:0 0;">Thread</div>
<div class="t" style="left:571px;top:119px;font-size:11.3px;line-height:13px;transform:scaleX(0.9943);transform-origin:0 0;">Module</div>
<div class="t" style="left:691px;top:119px;font-size:11.3px;line-height:13px;transform:scaleX(0.8600);transform-origin:0 0;">API</div>
<div class="t" style="left:1425px;top:119px;font-size:11.3px;line-height:13px;transform:scaleX(1.0077);transform-origin:0 0;">Return Value</div>
<div class="t" style="left:1525px;top:119px;font-size:11.3px;line-height:13px;transform:scaleX(0.9860);transform-origin:0 0;">Error</div>
<div class="t" style="left:1666px;top:119px;font-size:11.3px;line-height:13px;transform:scaleX(1.0056);transform-origin:0 0;">Duration</div>
<svg style="left:1402px;top:119px" width="17" height="17" viewBox="0 0 17 17"><circle cx="6.5" cy="6.5" r="5" fill="#dde9f7" stroke="#5a6a8a" stroke-width="1.3"/><path d="M10 10l5 5" stroke="#c09020" stroke-width="2.2"/></svg>
<div class="a" style="left:515px;top:113px;width:1px;height:24px;background:#e4e4e4"></div>
<div class="a" style="left:565px;top:113px;width:1px;height:24px;background:#e4e4e4"></div>
<div class="a" style="left:685px;top:113px;width:1px;height:24px;background:#e4e4e4"></div>
<div class="a" style="left:1419px;top:113px;width:1px;height:24px;background:#e4e4e4"></div>
<div class="a" style="left:1519px;top:113px;width:1px;height:24px;background:#e4e4e4"></div>
<div class="a" style="left:1659px;top:113px;width:1px;height:24px;background:#e4e4e4"></div>
<div class="a" style="left:1735px;top:113px;width:1px;height:24px;background:#e4e4e4"></div>
<div class="a" style="left:468px;top:137px;width:1268px;height:18px;background:#f6f4c6"></div>
<div class="a" style="left:516px;top:137px;width:1px;height:18px;background:#f1f1ec"></div>
<div class="a" style="left:566px;top:137px;width:1px;height:18px;background:#f1f1ec"></div>
<div class="a" style="left:686px;top:137px;width:1px;height:18px;background:#f1f1ec"></div>
<div class="a" style="left:1420px;top:137px;width:1px;height:18px;background:#f1f1ec"></div>
<div class="a" style="left:1520px;top:137px;width:1px;height:18px;background:#f1f1ec"></div>
<div class="a" style="left:1660px;top:137px;width:1px;height:18px;background:#f1f1ec"></div>
<div class="t" style="left:471px;top:141px;font-size:11.3px;line-height:13px;transform:scaleX(0.9500);transform-origin:0 0;">1479</div>
<div class="t" style="left:522px;top:141px;font-size:11.3px;line-height:13px;transform:scaleX(0.9500);transform-origin:0 0;">2</div>
<div class="t" style="left:572px;top:141px;font-size:11.3px;line-height:13px;transform:scaleX(1.0074);transform-origin:0 0;">poc.exe</div>
<div class="t" style="left:692px;top:141px;font-size:11.3px;line-height:13px;color:#2b8c90;transform:scaleX(1.0394);transform-origin:0 0;">NtWaitForSingleObject</div>
<div class="t" style="left:810.9px;top:141px;font-size:11.3px;line-height:13px;color:#484848;transform:scaleX(0.9555);transform-origin:0 0;"> ( </div>
<div class="t" style="left:820.5px;top:141px;font-size:11.3px;line-height:13px;color:#484848;transform:scaleX(0.9561);transform-origin:0 0;">0x00000000000000f0</div>
<div class="t" style="left:924.5px;top:141px;font-size:11.3px;line-height:13px;color:#484848;transform:scaleX(1.1940);transform-origin:0 0;">, </div>
<div class="t" style="left:932px;top:141px;font-size:11.3px;line-height:13px;color:#484848;transform:scaleX(0.8107);transform-origin:0 0;">FALSE</div>
<div class="t" style="left:960.5px;top:141px;font-size:11.3px;line-height:13px;color:#484848;transform:scaleX(1.1144);transform-origin:0 0;">, </div>
<div class="t" style="left:967.5px;top:141px;font-size:11.3px;line-height:13px;color:#9a9a9a;transform:scaleX(0.8866);transform-origin:0 0;">NULL</div>
<div class="t" style="left:993.1px;top:141px;font-size:11.3px;line-height:13px;color:#484848;transform:scaleX(0.7964);transform-origin:0 0;"> )</div>
<div class="t" style="left:1426px;top:141px;font-size:11.3px;line-height:13px;color:#555;transform:scaleX(0.8482);transform-origin:0 0;">STATUS_SUCCESS</div>
<div class="t" style="left:1666px;top:141px;font-size:11.3px;line-height:13px;transform:scaleX(0.9524);transform-origin:0 0;">0.0007578</div>
<div class="a" style="left:468px;top:155px;width:1603px;height:1px;background:#ebebeb"></div>
<div class="a" style="left:468px;top:156px;width:1268px;height:18px;background:#f6f4c6"></div>
<div class="a" style="left:516px;top:156px;width:1px;height:18px;background:#f1f1ec"></div>
<div class="a" style="left:566px;top:156px;width:1px;height:18px;background:#f1f1ec"></div>
<div class="a" style="left:686px;top:156px;width:1px;height:18px;background:#f1f1ec"></div>
<div class="a" style="left:1420px;top:156px;width:1px;height:18px;background:#f1f1ec"></div>
<div class="a" style="left:1520px;top:156px;width:1px;height:18px;background:#f1f1ec"></div>
<div class="a" style="left:1660px;top:156px;width:1px;height:18px;background:#f1f1ec"></div>
<div class="t" style="left:471px;top:160px;font-size:11.3px;line-height:13px;transform:scaleX(0.9500);transform-origin:0 0;">1501</div>
<div class="t" style="left:522px;top:160px;font-size:11.3px;line-height:13px;transform:scaleX(0.9500);transform-origin:0 0;">2</div>
<div class="t" style="left:572px;top:160px;font-size:11.3px;line-height:13px;transform:scaleX(1.0074);transform-origin:0 0;">poc.exe</div>
<div class="t" style="left:692px;top:160px;font-size:11.3px;line-height:13px;color:#2b8c90;transform:scaleX(1.0394);transform-origin:0 0;">NtWaitForSingleObject</div>
<div class="t" style="left:810.9px;top:160px;font-size:11.3px;line-height:13px;color:#484848;transform:scaleX(0.9555);transform-origin:0 0;"> ( </div>
<div class="t" style="left:820.5px;top:160px;font-size:11.3px;line-height:13px;color:#484848;transform:scaleX(0.9561);transform-origin:0 0;">0x00000000000000f0</div>
<div class="t" style="left:924.5px;top:160px;font-size:11.3px;line-height:13px;color:#484848;transform:scaleX(1.1940);transform-origin:0 0;">, </div>
<div class="t" style="left:932px;top:160px;font-size:11.3px;line-height:13px;color:#484848;transform:scaleX(0.8107);transform-origin:0 0;">FALSE</div>
<div class="t" style="left:960.5px;top:160px;font-size:11.3px;line-height:13px;color:#484848;transform:scaleX(1.1144);transform-origin:0 0;">, </div>
<div class="t" style="left:967.5px;top:160px;font-size:11.3px;line-height:13px;color:#9a9a9a;transform:scaleX(0.8866);transform-origin:0 0;">NULL</div>
<div class="t" style="left:993.1px;top:160px;font-size:11.3px;line-height:13px;color:#484848;transform:scaleX(0.7964);transform-origin:0 0;"> )</div>
<div class="t" style="left:1426px;top:160px;font-size:11.3px;line-height:13px;color:#555;transform:scaleX(0.8482);transform-origin:0 0;">STATUS_SUCCESS</div>
<div class="t" style="left:1666px;top:160px;font-size:11.3px;line-height:13px;transform:scaleX(0.9524);transform-origin:0 0;">0.0000018</div>
<div class="a" style="left:468px;top:174px;width:1603px;height:1px;background:#ebebeb"></div>
<div class="a" style="left:468px;top:175px;width:1268px;height:18px;background:#f6f4c6"></div>
<div class="a" style="left:516px;top:175px;width:1px;height:18px;background:#f1f1ec"></div>
<div class="a" style="left:566px;top:175px;width:1px;height:18px;background:#f1f1ec"></div>
<div class="a" style="left:686px;top:175px;width:1px;height:18px;background:#f1f1ec"></div>
<div class="a" style="left:1420px;top:175px;width:1px;height:18px;background:#f1f1ec"></div>
<div class="a" style="left:1520px;top:175px;width:1px;height:18px;background:#f1f1ec"></div>
<div class="a" style="left:1660px;top:175px;width:1px;height:18px;background:#f1f1ec"></div>
<div class="t" style="left:471px;top:179px;font-size:11.3px;line-height:13px;transform:scaleX(0.9500);transform-origin:0 0;">1504</div>
<div class="t" style="left:522px;top:179px;font-size:11.3px;line-height:13px;transform:scaleX(0.9500);transform-origin:0 0;">2</div>
<div class="t" style="left:572px;top:179px;font-size:11.3px;line-height:13px;transform:scaleX(1.0074);transform-origin:0 0;">poc.exe</div>
<div class="t" style="left:692px;top:179px;font-size:11.3px;line-height:13px;color:#2b8c90;transform:scaleX(1.0394);transform-origin:0 0;">NtWaitForSingleObject</div>
<div class="t" style="left:810.9px;top:179px;font-size:11.3px;line-height:13px;color:#484848;transform:scaleX(0.9555);transform-origin:0 0;"> ( </div>
<div class="t" style="left:820.5px;top:179px;font-size:11.3px;line-height:13px;color:#484848;transform:scaleX(0.9561);transform-origin:0 0;">0x00000000000000f0</div>
<div class="t" style="left:924.5px;top:179px;font-size:11.3px;line-height:13px;color:#484848;transform:scaleX(1.1940);transform-origin:0 0;">, </div>
<div class="t" style="left:932px;top:179px;font-size:11.3px;line-height:13px;color:#484848;transform:scaleX(0.8107);transform-origin:0 0;">FALSE</div>
<div class="t" style="left:960.5px;top:179px;font-size:11.3px;line-height:13px;color:#484848;transform:scaleX(1.1144);transform-origin:0 0;">, </div>
<div class="t" style="left:967.5px;top:179px;font-size:11.3px;line-height:13px;color:#9a9a9a;transform:scaleX(0.8866);transform-origin:0 0;">NULL</div>
<div class="t" style="left:993.1px;top:179px;font-size:11.3px;line-height:13px;color:#484848;transform:scaleX(0.7964);transform-origin:0 0;"> )</div>
<div class="t" style="left:1426px;top:179px;font-size:11.3px;line-height:13px;color:#555;transform:scaleX(0.8482);transform-origin:0 0;">STATUS_SUCCESS</div>
<div class="t" style="left:1666px;top:179px;font-size:11.3px;line-height:13px;transform:scaleX(0.9524);transform-origin:0 0;">0.0000012</div>
<div class="a" style="left:468px;top:193px;width:1603px;height:1px;background:#ebebeb"></div>
<div class="a" style="left:468px;top:194px;width:1268px;height:18px;background:#f6f4c6"></div>
<div class="a" style="left:516px;top:194px;width:1px;height:18px;background:#f1f1ec"></div>
<div class="a" style="left:566px;top:194px;width:1px;height:18px;background:#f1f1ec"></div>
<div class="a" style="left:686px;top:194px;width:1px;height:18px;background:#f1f1ec"></div>
<div class="a" style="left:1420px;top:194px;width:1px;height:18px;background:#f1f1ec"></div>
<div class="a" style="left:1520px;top:194px;width:1px;height:18px;background:#f1f1ec"></div>
<div class="a" style="left:1660px;top:194px;width:1px;height:18px;background:#f1f1ec"></div>
<div class="t" style="left:471px;top:198px;font-size:11.3px;line-height:13px;transform:scaleX(0.9500);transform-origin:0 0;">1507</div>
<div class="t" style="left:522px;top:198px;font-size:11.3px;line-height:13px;transform:scaleX(0.9500);transform-origin:0 0;">2</div>
<div class="t" style="left:572px;top:198px;font-size:11.3px;line-height:13px;transform:scaleX(1.0074);transform-origin:0 0;">poc.exe</div>
<div class="t" style="left:692px;top:198px;font-size:11.3px;line-height:13px;color:#2b8c90;transform:scaleX(1.0394);transform-origin:0 0;">NtWaitForSingleObject</div>
<div class="t" style="left:810.9px;top:198px;font-size:11.3px;line-height:13px;color:#484848;transform:scaleX(0.9555);transform-origin:0 0;"> ( </div>
<div class="t" style="left:820.5px;top:198px;font-size:11.3px;line-height:13px;color:#484848;transform:scaleX(0.9561);transform-origin:0 0;">0x00000000000000f0</div>
<div class="t" style="left:924.5px;top:198px;font-size:11.3px;line-height:13px;color:#484848;transform:scaleX(1.1940);transform-origin:0 0;">, </div>
<div class="t" style="left:932px;top:198px;font-size:11.3px;line-height:13px;color:#484848;transform:scaleX(0.8107);transform-origin:0 0;">FALSE</div>
<div class="t" style="left:960.5px;top:198px;font-size:11.3px;line-height:13px;color:#484848;transform:scaleX(1.1144);transform-origin:0 0;">, </div>
<div class="t" style="left:967.5px;top:198px;font-size:11.3px;line-height:13px;color:#9a9a9a;transform:scaleX(0.8866);transform-origin:0 0;">NULL</div>
<div class="t" style="left:993.1px;top:198px;font-size:11.3px;line-height:13px;color:#484848;transform:scaleX(0.7964);transform-origin:0 0;"> )</div>
<div class="t" style="left:1426px;top:198px;font-size:11.3px;line-height:13px;color:#555;transform:scaleX(0.8482);transform-origin:0 0;">STATUS_SUCCESS</div>
<div class="t" style="left:1666px;top:198px;font-size:11.3px;line-height:13px;transform:scaleX(0.9524);transform-origin:0 0;">0.0000010</div>
<div class="a" style="left:468px;top:212px;width:1603px;height:1px;background:#ebebeb"></div>
<div class="a" style="left:468px;top:213px;width:1268px;height:18px;background:#f6f4c6"></div>
<div class="a" style="left:516px;top:213px;width:1px;height:18px;background:#f1f1ec"></div>
<div class="a" style="left:566px;top:213px;width:1px;height:18px;background:#f1f1ec"></div>
<div class="a" style="left:686px;top:213px;width:1px;height:18px;background:#f1f1ec"></div>
<div class="a" style="left:1420px;top:213px;width:1px;height:18px;background:#f1f1ec"></div>
<div class="a" style="left:1520px;top:213px;width:1px;height:18px;background:#f1f1ec"></div>
<div class="a" style="left:1660px;top:213px;width:1px;height:18px;background:#f1f1ec"></div>
<div class="t" style="left:471px;top:217px;font-size:11.3px;line-height:13px;transform:scaleX(0.9500);transform-origin:0 0;">1510</div>
<div class="t" style="left:522px;top:217px;font-size:11.3px;line-height:13px;transform:scaleX(0.9500);transform-origin:0 0;">2</div>
<div class="t" style="left:572px;top:217px;font-size:11.3px;line-height:13px;transform:scaleX(1.0074);transform-origin:0 0;">poc.exe</div>
<div class="t" style="left:692px;top:217px;font-size:11.3px;line-height:13px;color:#2b8c90;transform:scaleX(1.0394);transform-origin:0 0;">NtWaitForSingleObject</div>
<div class="t" style="left:810.9px;top:217px;font-size:11.3px;line-height:13px;color:#484848;transform:scaleX(0.9555);transform-origin:0 0;"> ( </div>
<div class="t" style="left:820.5px;top:217px;font-size:11.3px;line-height:13px;color:#484848;transform:scaleX(0.9561);transform-origin:0 0;">0x00000000000000f0</div>
<div class="t" style="left:924.5px;top:217px;font-size:11.3px;line-height:13px;color:#484848;transform:scaleX(1.1940);transform-origin:0 0;">, </div>
<div class="t" style="left:932px;top:217px;font-size:11.3px;line-height:13px;color:#484848;transform:scaleX(0.8107);transform-origin:0 0;">FALSE</div>
<div class="t" style="left:960.5px;top:217px;font-size:11.3px;line-height:13px;color:#484848;transform:scaleX(1.1144);transform-origin:0 0;">, </div>
<div class="t" style="left:967.5px;top:217px;font-size:11.3px;line-height:13px;color:#9a9a9a;transform:scaleX(0.8866);transform-origin:0 0;">NULL</div>
<div class="t" style="left:993.1px;top:217px;font-size:11.3px;line-height:13px;color:#484848;transform:scaleX(0.7964);transform-origin:0 0;"> )</div>
<div class="t" style="left:1426px;top:217px;font-size:11.3px;line-height:13px;color:#555;transform:scaleX(0.8482);transform-origin:0 0;">STATUS_SUCCESS</div>
<div class="t" style="left:1666px;top:217px;font-size:11.3px;line-height:13px;transform:scaleX(0.9524);transform-origin:0 0;">0.0000009</div>
<div class="a" style="left:468px;top:231px;width:1603px;height:1px;background:#ebebeb"></div>
<div class="a" style="left:468px;top:232px;width:1268px;height:18px;background:#f6f4c6"></div>
<div class="a" style="left:516px;top:232px;width:1px;height:18px;background:#f1f1ec"></div>
<div class="a" style="left:566px;top:232px;width:1px;height:18px;background:#f1f1ec"></div>
<div class="a" style="left:686px;top:232px;width:1px;height:18px;background:#f1f1ec"></div>
<div class="a" style="left:1420px;top:232px;width:1px;height:18px;background:#f1f1ec"></div>
<div class="a" style="left:1520px;top:232px;width:1px;height:18px;background:#f1f1ec"></div>
<div class="a" style="left:1660px;top:232px;width:1px;height:18px;background:#f1f1ec"></div>
<div class="t" style="left:471px;top:236px;font-size:11.3px;line-height:13px;transform:scaleX(0.9500);transform-origin:0 0;">1514</div>
<div class="t" style="left:522px;top:236px;font-size:11.3px;line-height:13px;transform:scaleX(0.9500);transform-origin:0 0;">2</div>
<div class="t" style="left:572px;top:236px;font-size:11.3px;line-height:13px;transform:scaleX(1.0074);transform-origin:0 0;">poc.exe</div>
<div class="t" style="left:692px;top:236px;font-size:11.3px;line-height:13px;color:#2b8c90;transform:scaleX(1.0394);transform-origin:0 0;">NtWaitForSingleObject</div>
<div class="t" style="left:810.9px;top:236px;font-size:11.3px;line-height:13px;color:#484848;transform:scaleX(0.9555);transform-origin:0 0;"> ( </div>
<div class="t" style="left:820.5px;top:236px;font-size:11.3px;line-height:13px;color:#484848;transform:scaleX(0.9561);transform-origin:0 0;">0x00000000000000f0</div>
<div class="t" style="left:924.5px;top:236px;font-size:11.3px;line-height:13px;color:#484848;transform:scaleX(1.1940);transform-origin:0 0;">, </div>
<div class="t" style="left:932px;top:236px;font-size:11.3px;line-height:13px;color:#484848;transform:scaleX(0.8107);transform-origin:0 0;">FALSE</div>
<div class="t" style="left:960.5px;top:236px;font-size:11.3px;line-height:13px;color:#484848;transform:scaleX(1.1144);transform-origin:0 0;">, </div>
<div class="t" style="left:967.5px;top:236px;font-size:11.3px;line-height:13px;color:#9a9a9a;transform:scaleX(0.8866);transform-origin:0 0;">NULL</div>
<div class="t" style="left:993.1px;top:236px;font-size:11.3px;line-height:13px;color:#484848;transform:scaleX(0.7964);transform-origin:0 0;"> )</div>
<div class="t" style="left:1426px;top:236px;font-size:11.3px;line-height:13px;color:#555;transform:scaleX(0.8482);transform-origin:0 0;">STATUS_SUCCESS</div>
<div class="t" style="left:1666px;top:236px;font-size:11.3px;line-height:13px;transform:scaleX(0.9524);transform-origin:0 0;">0.0008057</div>
<div class="a" style="left:468px;top:250px;width:1603px;height:1px;background:#ebebeb"></div>
<div class="a" style="left:468px;top:251px;width:1268px;height:18px;background:#f6f4c6"></div>
<div class="a" style="left:516px;top:251px;width:1px;height:18px;background:#f1f1ec"></div>
<div class="a" style="left:566px;top:251px;width:1px;height:18px;background:#f1f1ec"></div>
<div class="a" style="left:686px;top:251px;width:1px;height:18px;background:#f1f1ec"></div>
<div class="a" style="left:1420px;top:251px;width:1px;height:18px;background:#f1f1ec"></div>
<div class="a" style="left:1520px;top:251px;width:1px;height:18px;background:#f1f1ec"></div>
<div class="a" style="left:1660px;top:251px;width:1px;height:18px;background:#f1f1ec"></div>
<div class="t" style="left:471px;top:255px;font-size:11.3px;line-height:13px;transform:scaleX(0.9500);transform-origin:0 0;">1527</div>
<div class="t" style="left:522px;top:255px;font-size:11.3px;line-height:13px;transform:scaleX(0.9500);transform-origin:0 0;">2</div>
<div class="t" style="left:572px;top:255px;font-size:11.3px;line-height:13px;transform:scaleX(1.0074);transform-origin:0 0;">poc.exe</div>
<div class="t" style="left:692px;top:255px;font-size:11.3px;line-height:13px;color:#2b8c90;transform:scaleX(1.0394);transform-origin:0 0;">NtWaitForSingleObject</div>
<div class="t" style="left:810.9px;top:255px;font-size:11.3px;line-height:13px;color:#484848;transform:scaleX(0.9555);transform-origin:0 0;"> ( </div>
<div class="t" style="left:820.5px;top:255px;font-size:11.3px;line-height:13px;color:#484848;transform:scaleX(0.9561);transform-origin:0 0;">0x00000000000000f0</div>
<div class="t" style="left:924.5px;top:255px;font-size:11.3px;line-height:13px;color:#484848;transform:scaleX(1.1940);transform-origin:0 0;">, </div>
<div class="t" style="left:932px;top:255px;font-size:11.3px;line-height:13px;color:#484848;transform:scaleX(0.8107);transform-origin:0 0;">FALSE</div>
<div class="t" style="left:960.5px;top:255px;font-size:11.3px;line-height:13px;color:#484848;transform:scaleX(1.1144);transform-origin:0 0;">, </div>
<div class="t" style="left:967.5px;top:255px;font-size:11.3px;line-height:13px;color:#9a9a9a;transform:scaleX(0.8866);transform-origin:0 0;">NULL</div>
<div class="t" style="left:993.1px;top:255px;font-size:11.3px;line-height:13px;color:#484848;transform:scaleX(0.7964);transform-origin:0 0;"> )</div>
<div class="t" style="left:1426px;top:255px;font-size:11.3px;line-height:13px;color:#555;transform:scaleX(0.8482);transform-origin:0 0;">STATUS_SUCCESS</div>
<div class="t" style="left:1666px;top:255px;font-size:11.3px;line-height:13px;transform:scaleX(0.9524);transform-origin:0 0;">0.0000014</div>
<div class="a" style="left:468px;top:269px;width:1603px;height:1px;background:#ebebeb"></div>
<div class="a" style="left:468px;top:270px;width:1268px;height:18px;background:#f6f4c6"></div>
<div class="a" style="left:516px;top:270px;width:1px;height:18px;background:#f1f1ec"></div>
<div class="a" style="left:566px;top:270px;width:1px;height:18px;background:#f1f1ec"></div>
<div class="a" style="left:686px;top:270px;width:1px;height:18px;background:#f1f1ec"></div>
<div class="a" style="left:1420px;top:270px;width:1px;height:18px;background:#f1f1ec"></div>
<div class="a" style="left:1520px;top:270px;width:1px;height:18px;background:#f1f1ec"></div>
<div class="a" style="left:1660px;top:270px;width:1px;height:18px;background:#f1f1ec"></div>
<div class="t" style="left:471px;top:274px;font-size:11.3px;line-height:13px;transform:scaleX(0.9500);transform-origin:0 0;">1529</div>
<div class="t" style="left:522px;top:274px;font-size:11.3px;line-height:13px;transform:scaleX(0.9500);transform-origin:0 0;">2</div>
<div class="t" style="left:572px;top:274px;font-size:11.3px;line-height:13px;transform:scaleX(1.0074);transform-origin:0 0;">poc.exe</div>
<div class="t" style="left:692px;top:274px;font-size:11.3px;line-height:13px;color:#2b8c90;transform:scaleX(1.0394);transform-origin:0 0;">NtWaitForSingleObject</div>
<div class="t" style="left:810.9px;top:274px;font-size:11.3px;line-height:13px;color:#484848;transform:scaleX(0.9555);transform-origin:0 0;"> ( </div>
<div class="t" style="left:820.5px;top:274px;font-size:11.3px;line-height:13px;color:#484848;transform:scaleX(0.9561);transform-origin:0 0;">0x00000000000000f0</div>
<div class="t" style="left:924.5px;top:274px;font-size:11.3px;line-height:13px;color:#484848;transform:scaleX(1.1940);transform-origin:0 0;">, </div>
<div class="t" style="left:932px;top:274px;font-size:11.3px;line-height:13px;color:#484848;transform:scaleX(0.8107);transform-origin:0 0;">FALSE</div>
<div class="t" style="left:960.5px;top:274px;font-size:11.3px;line-height:13px;color:#484848;transform:scaleX(1.1144);transform-origin:0 0;">, </div>
<div class="t" style="left:967.5px;top:274px;font-size:11.3px;line-height:13px;color:#9a9a9a;transform:scaleX(0.8866);transform-origin:0 0;">NULL</div>
<div class="t" style="left:993.1px;top:274px;font-size:11.3px;line-height:13px;color:#484848;transform:scaleX(0.7964);transform-origin:0 0;"> )</div>
<div class="t" style="left:1426px;top:274px;font-size:11.3px;line-height:13px;color:#555;transform:scaleX(0.8482);transform-origin:0 0;">STATUS_SUCCESS</div>
<div class="t" style="left:1666px;top:274px;font-size:11.3px;line-height:13px;transform:scaleX(0.9524);transform-origin:0 0;">0.0000234</div>
<div class="a" style="left:468px;top:288px;width:1603px;height:1px;background:#ebebeb"></div>
<div class="a" style="left:468px;top:289px;width:1268px;height:18px;background:#f6f4c6"></div>
<div class="a" style="left:516px;top:289px;width:1px;height:18px;background:#f1f1ec"></div>
<div class="a" style="left:566px;top:289px;width:1px;height:18px;background:#f1f1ec"></div>
<div class="a" style="left:686px;top:289px;width:1px;height:18px;background:#f1f1ec"></div>
<div class="a" style="left:1420px;top:289px;width:1px;height:18px;background:#f1f1ec"></div>
<div class="a" style="left:1520px;top:289px;width:1px;height:18px;background:#f1f1ec"></div>
<div class="a" style="left:1660px;top:289px;width:1px;height:18px;background:#f1f1ec"></div>
<div class="t" style="left:471px;top:293px;font-size:11.3px;line-height:13px;transform:scaleX(0.9500);transform-origin:0 0;">1531</div>
<div class="t" style="left:522px;top:293px;font-size:11.3px;line-height:13px;transform:scaleX(0.9500);transform-origin:0 0;">2</div>
<div class="t" style="left:572px;top:293px;font-size:11.3px;line-height:13px;transform:scaleX(1.0074);transform-origin:0 0;">poc.exe</div>
<div class="t" style="left:692px;top:293px;font-size:11.3px;line-height:13px;color:#2b8c90;transform:scaleX(1.0394);transform-origin:0 0;">NtWaitForSingleObject</div>
<div class="t" style="left:810.9px;top:293px;font-size:11.3px;line-height:13px;color:#484848;transform:scaleX(0.9555);transform-origin:0 0;"> ( </div>
<div class="t" style="left:820.5px;top:293px;font-size:11.3px;line-height:13px;color:#484848;transform:scaleX(0.9561);transform-origin:0 0;">0x00000000000000f0</div>
<div class="t" style="left:924.5px;top:293px;font-size:11.3px;line-height:13px;color:#484848;transform:scaleX(1.1940);transform-origin:0 0;">, </div>
<div class="t" style="left:932px;top:293px;font-size:11.3px;line-height:13px;color:#484848;transform:scaleX(0.8107);transform-origin:0 0;">FALSE</div>
<div class="t" style="left:960.5px;top:293px;font-size:11.3px;line-height:13px;color:#484848;transform:scaleX(1.1144);transform-origin:0 0;">, </div>
<div class="t" style="left:967.5px;top:293px;font-size:11.3px;line-height:13px;color:#9a9a9a;transform:scaleX(0.8866);transform-origin:0 0;">NULL</div>
<div class="t" style="left:993.1px;top:293px;font-size:11.3px;line-height:13px;color:#484848;transform:scaleX(0.7964);transform-origin:0 0;"> )</div>
<div class="t" style="left:1426px;top:293px;font-size:11.3px;line-height:13px;color:#555;transform:scaleX(0.8482);transform-origin:0 0;">STATUS_SUCCESS</div>
<div class="t" style="left:1666px;top:293px;font-size:11.3px;line-height:13px;transform:scaleX(0.9524);transform-origin:0 0;">0.0000552</div>
<div class="a" style="left:468px;top:307px;width:1603px;height:1px;background:#ebebeb"></div>
<div class="a" style="left:468px;top:308px;width:1268px;height:18px;background:#f6f4c6"></div>
<div class="a" style="left:516px;top:308px;width:1px;height:18px;background:#f1f1ec"></div>
<div class="a" style="left:566px;top:308px;width:1px;height:18px;background:#f1f1ec"></div>
<div class="a" style="left:686px;top:308px;width:1px;height:18px;background:#f1f1ec"></div>
<div class="a" style="left:1420px;top:308px;width:1px;height:18px;background:#f1f1ec"></div>
<div class="a" style="left:1520px;top:308px;width:1px;height:18px;background:#f1f1ec"></div>
<div class="a" style="left:1660px;top:308px;width:1px;height:18px;background:#f1f1ec"></div>
<div class="t" style="left:471px;top:312px;font-size:11.3px;line-height:13px;transform:scaleX(0.9500);transform-origin:0 0;">1533</div>
<div class="t" style="left:522px;top:312px;font-size:11.3px;line-height:13px;transform:scaleX(0.9500);transform-origin:0 0;">2</div>
<div class="t" style="left:572px;top:312px;font-size:11.3px;line-height:13px;transform:scaleX(1.0074);transform-origin:0 0;">poc.exe</div>
<div class="t" style="left:692px;top:312px;font-size:11.3px;line-height:13px;color:#2b8c90;transform:scaleX(1.0394);transform-origin:0 0;">NtWaitForSingleObject</div>
<div class="t" style="left:810.9px;top:312px;font-size:11.3px;line-height:13px;color:#484848;transform:scaleX(0.9555);transform-origin:0 0;"> ( </div>
<div class="t" style="left:820.5px;top:312px;font-size:11.3px;line-height:13px;color:#484848;transform:scaleX(0.9561);transform-origin:0 0;">0x00000000000000f0</div>
<div class="t" style="left:924.5px;top:312px;font-size:11.3px;line-height:13px;color:#484848;transform:scaleX(1.1940);transform-origin:0 0;">, </div>
<div class="t" style="left:932px;top:312px;font-size:11.3px;line-height:13px;color:#484848;transform:scaleX(0.8107);transform-origin:0 0;">FALSE</div>
<div class="t" style="left:960.5px;top:312px;font-size:11.3px;line-height:13px;color:#484848;transform:scaleX(1.1144);transform-origin:0 0;">, </div>
<div class="t" style="left:967.5px;top:312px;font-size:11.3px;line-height:13px;color:#9a9a9a;transform:scaleX(0.8866);transform-origin:0 0;">NULL</div>
<div class="t" style="left:993.1px;top:312px;font-size:11.3px;line-height:13px;color:#484848;transform:scaleX(0.7964);transform-origin:0 0;"> )</div>
<div class="t" style="left:1426px;top:312px;font-size:11.3px;line-height:13px;color:#555;transform:scaleX(0.8482);transform-origin:0 0;">STATUS_SUCCESS</div>
<div class="t" style="left:1666px;top:312px;font-size:11.3px;line-height:13px;transform:scaleX(0.9676);transform-origin:0 0;">0.0000011</div>
<div class="a" style="left:468px;top:326px;width:1603px;height:1px;background:#ebebeb"></div>
<div class="a" style="left:468px;top:327px;width:1268px;height:18px;background:#f6f4c6"></div>
<div class="a" style="left:516px;top:327px;width:1px;height:18px;background:#f1f1ec"></div>
<div class="a" style="left:566px;top:327px;width:1px;height:18px;background:#f1f1ec"></div>
<div class="a" style="left:686px;top:327px;width:1px;height:18px;background:#f1f1ec"></div>
<div class="a" style="left:1420px;top:327px;width:1px;height:18px;background:#f1f1ec"></div>
<div class="a" style="left:1520px;top:327px;width:1px;height:18px;background:#f1f1ec"></div>
<div class="a" style="left:1660px;top:327px;width:1px;height:18px;background:#f1f1ec"></div>
<div class="t" style="left:471px;top:331px;font-size:11.3px;line-height:13px;transform:scaleX(0.9500);transform-origin:0 0;">1535</div>
<div class="t" style="left:522px;top:331px;font-size:11.3px;line-height:13px;transform:scaleX(0.9500);transform-origin:0 0;">2</div>
<div class="t" style="left:572px;top:331px;font-size:11.3px;line-height:13px;transform:scaleX(1.0074);transform-origin:0 0;">poc.exe</div>
<div class="t" style="left:692px;top:331px;font-size:11.3px;line-height:13px;color:#2b8c90;transform:scaleX(1.0394);transform-origin:0 0;">NtWaitForSingleObject</div>
<div class="t" style="left:810.9px;top:331px;font-size:11.3px;line-height:13px;color:#484848;transform:scaleX(0.9555);transform-origin:0 0;"> ( </div>
<div class="t" style="left:820.5px;top:331px;font-size:11.3px;line-height:13px;color:#484848;transform:scaleX(0.9561);transform-origin:0 0;">0x00000000000000f0</div>
<div class="t" style="left:924.5px;top:331px;font-size:11.3px;line-height:13px;color:#484848;transform:scaleX(1.1940);transform-origin:0 0;">, </div>
<div class="t" style="left:932px;top:331px;font-size:11.3px;line-height:13px;color:#484848;transform:scaleX(0.8107);transform-origin:0 0;">FALSE</div>
<div class="t" style="left:960.5px;top:331px;font-size:11.3px;line-height:13px;color:#484848;transform:scaleX(1.1144);transform-origin:0 0;">, </div>
<div class="t" style="left:967.5px;top:331px;font-size:11.3px;line-height:13px;color:#9a9a9a;transform:scaleX(0.8866);transform-origin:0 0;">NULL</div>
<div class="t" style="left:993.1px;top:331px;font-size:11.3px;line-height:13px;color:#484848;transform:scaleX(0.7964);transform-origin:0 0;"> )</div>
<div class="t" style="left:1426px;top:331px;font-size:11.3px;line-height:13px;color:#555;transform:scaleX(0.8482);transform-origin:0 0;">STATUS_SUCCESS</div>
<div class="t" style="left:1666px;top:331px;font-size:11.3px;line-height:13px;transform:scaleX(0.9676);transform-origin:0 0;">0.0000011</div>
<div class="a" style="left:468px;top:345px;width:1603px;height:1px;background:#ebebeb"></div>
<div class="a" style="left:468px;top:346px;width:1268px;height:18px;background:#f6f4c6"></div>
<div class="a" style="left:516px;top:346px;width:1px;height:18px;background:#f1f1ec"></div>
<div class="a" style="left:566px;top:346px;width:1px;height:18px;background:#f1f1ec"></div>
<div class="a" style="left:686px;top:346px;width:1px;height:18px;background:#f1f1ec"></div>
<div class="a" style="left:1420px;top:346px;width:1px;height:18px;background:#f1f1ec"></div>
<div class="a" style="left:1520px;top:346px;width:1px;height:18px;background:#f1f1ec"></div>
<div class="a" style="left:1660px;top:346px;width:1px;height:18px;background:#f1f1ec"></div>
<div class="t" style="left:471px;top:350px;font-size:11.3px;line-height:13px;transform:scaleX(0.9500);transform-origin:0 0;">1537</div>
<div class="t" style="left:522px;top:350px;font-size:11.3px;line-height:13px;transform:scaleX(0.9500);transform-origin:0 0;">2</div>
<div class="t" style="left:572px;top:350px;font-size:11.3px;line-height:13px;transform:scaleX(1.0074);transform-origin:0 0;">poc.exe</div>
<div class="t" style="left:692px;top:350px;font-size:11.3px;line-height:13px;color:#2b8c90;transform:scaleX(1.0394);transform-origin:0 0;">NtWaitForSingleObject</div>
<div class="t" style="left:810.9px;top:350px;font-size:11.3px;line-height:13px;color:#484848;transform:scaleX(0.9555);transform-origin:0 0;"> ( </div>
<div class="t" style="left:820.5px;top:350px;font-size:11.3px;line-height:13px;color:#484848;transform:scaleX(0.9561);transform-origin:0 0;">0x00000000000000f0</div>
<div class="t" style="left:924.5px;top:350px;font-size:11.3px;line-height:13px;color:#484848;transform:scaleX(1.1940);transform-origin:0 0;">, </div>
<div class="t" style="left:932px;top:350px;font-size:11.3px;line-height:13px;color:#484848;transform:scaleX(0.8107);transform-origin:0 0;">FALSE</div>
<div class="t" style="left:960.5px;top:350px;font-size:11.3px;line-height:13px;color:#484848;transform:scaleX(1.1144);transform-origin:0 0;">, </div>
<div class="t" style="left:967.5px;top:350px;font-size:11.3px;line-height:13px;color:#9a9a9a;transform:scaleX(0.8866);transform-origin:0 0;">NULL</div>
<div class="t" style="left:993.1px;top:350px;font-size:11.3px;line-height:13px;color:#484848;transform:scaleX(0.7964);transform-origin:0 0;"> )</div>
<div class="t" style="left:1426px;top:350px;font-size:11.3px;line-height:13px;color:#555;transform:scaleX(0.8482);transform-origin:0 0;">STATUS_SUCCESS</div>
<div class="t" style="left:1666px;top:350px;font-size:11.3px;line-height:13px;transform:scaleX(0.9524);transform-origin:0 0;">0.0000010</div>
<div class="a" style="left:468px;top:364px;width:1603px;height:1px;background:#ebebeb"></div>
<div class="a" style="left:468px;top:365px;width:1268px;height:18px;background:#f6f4c6"></div>
<div class="a" style="left:516px;top:365px;width:1px;height:18px;background:#f1f1ec"></div>
<div class="a" style="left:566px;top:365px;width:1px;height:18px;background:#f1f1ec"></div>
<div class="a" style="left:686px;top:365px;width:1px;height:18px;background:#f1f1ec"></div>
<div class="a" style="left:1420px;top:365px;width:1px;height:18px;background:#f1f1ec"></div>
<div class="a" style="left:1520px;top:365px;width:1px;height:18px;background:#f1f1ec"></div>
<div class="a" style="left:1660px;top:365px;width:1px;height:18px;background:#f1f1ec"></div>
<div class="t" style="left:471px;top:369px;font-size:11.3px;line-height:13px;transform:scaleX(0.9500);transform-origin:0 0;">1539</div>
<div class="t" style="left:522px;top:369px;font-size:11.3px;line-height:13px;transform:scaleX(0.9500);transform-origin:0 0;">2</div>
<div class="t" style="left:572px;top:369px;font-size:11.3px;line-height:13px;transform:scaleX(1.0074);transform-origin:0 0;">poc.exe</div>
<div class="t" style="left:692px;top:369px;font-size:11.3px;line-height:13px;color:#2b8c90;transform:scaleX(1.0394);transform-origin:0 0;">NtWaitForSingleObject</div>
<div class="t" style="left:810.9px;top:369px;font-size:11.3px;line-height:13px;color:#484848;transform:scaleX(0.9555);transform-origin:0 0;"> ( </div>
<div class="t" style="left:820.5px;top:369px;font-size:11.3px;line-height:13px;color:#484848;transform:scaleX(0.9561);transform-origin:0 0;">0x00000000000000f0</div>
<div class="t" style="left:924.5px;top:369px;font-size:11.3px;line-height:13px;color:#484848;transform:scaleX(1.1940);transform-origin:0 0;">, </div>
<div class="t" style="left:932px;top:369px;font-size:11.3px;line-height:13px;color:#484848;transform:scaleX(0.8107);transform-origin:0 0;">FALSE</div>
<div class="t" style="left:960.5px;top:369px;font-size:11.3px;line-height:13px;color:#484848;transform:scaleX(1.1144);transform-origin:0 0;">, </div>
<div class="t" style="left:967.5px;top:369px;font-size:11.3px;line-height:13px;color:#9a9a9a;transform:scaleX(0.8866);transform-origin:0 0;">NULL</div>
<div class="t" style="left:993.1px;top:369px;font-size:11.3px;line-height:13px;color:#484848;transform:scaleX(0.7964);transform-origin:0 0;"> )</div>
<div class="t" style="left:1426px;top:369px;font-size:11.3px;line-height:13px;color:#555;transform:scaleX(0.8482);transform-origin:0 0;">STATUS_SUCCESS</div>
<div class="t" style="left:1666px;top:369px;font-size:11.3px;line-height:13px;transform:scaleX(0.9524);transform-origin:0 0;">0.0000010</div>
<div class="a" style="left:468px;top:383px;width:1603px;height:1px;background:#ebebeb"></div>
<div class="a" style="left:468px;top:384px;width:1268px;height:18px;background:#f6f4c6"></div>
<div class="a" style="left:516px;top:384px;width:1px;height:18px;background:#f1f1ec"></div>
<div class="a" style="left:566px;top:384px;width:1px;height:18px;background:#f1f1ec"></div>
<div class="a" style="left:686px;top:384px;width:1px;height:18px;background:#f1f1ec"></div>
<div class="a" style="left:1420px;top:384px;width:1px;height:18px;background:#f1f1ec"></div>
<div class="a" style="left:1520px;top:384px;width:1px;height:18px;background:#f1f1ec"></div>
<div class="a" style="left:1660px;top:384px;width:1px;height:18px;background:#f1f1ec"></div>
<div class="t" style="left:471px;top:388px;font-size:11.3px;line-height:13px;transform:scaleX(0.9500);transform-origin:0 0;">1541</div>
<div class="t" style="left:522px;top:388px;font-size:11.3px;line-height:13px;transform:scaleX(0.9500);transform-origin:0 0;">2</div>
<div class="t" style="left:572px;top:388px;font-size:11.3px;line-height:13px;transform:scaleX(1.0074);transform-origin:0 0;">poc.exe</div>
<div class="t" style="left:692px;top:388px;font-size:11.3px;line-height:13px;color:#2b8c90;transform:scaleX(1.0394);transform-origin:0 0;">NtWaitForSingleObject</div>
<div class="t" style="left:810.9px;top:388px;font-size:11.3px;line-height:13px;color:#484848;transform:scaleX(0.9555);transform-origin:0 0;"> ( </div>
<div class="t" style="left:820.5px;top:388px;font-size:11.3px;line-height:13px;color:#484848;transform:scaleX(0.9561);transform-origin:0 0;">0x00000000000000f0</div>
<div class="t" style="left:924.5px;top:388px;font-size:11.3px;line-height:13px;color:#484848;transform:scaleX(1.1940);transform-origin:0 0;">, </div>
<div class="t" style="left:932px;top:388px;font-size:11.3px;line-height:13px;color:#484848;transform:scaleX(0.8107);transform-origin:0 0;">FALSE</div>
<div class="t" style="left:960.5px;top:388px;font-size:11.3px;line-height:13px;color:#484848;transform:scaleX(1.1144);transform-origin:0 0;">, </div>
<div class="t" style="left:967.5px;top:388px;font-size:11.3px;line-height:13px;color:#9a9a9a;transform:scaleX(0.8866);transform-origin:0 0;">NULL</div>
<div class="t" style="left:993.1px;top:388px;font-size:11.3px;line-height:13px;color:#484848;transform:scaleX(0.7964);transform-origin:0 0;"> )</div>
<div class="t" style="left:1426px;top:388px;font-size:11.3px;line-height:13px;color:#555;transform:scaleX(0.8482);transform-origin:0 0;">STATUS_SUCCESS</div>
<div class="t" style="left:1666px;top:388px;font-size:11.3px;line-height:13px;transform:scaleX(0.9676);transform-origin:0 0;">0.0000011</div>
<div class="a" style="left:468px;top:402px;width:1603px;height:1px;background:#ebebeb"></div>
<div class="a" style="left:468px;top:403px;width:1268px;height:18px;background:#f6f4c6"></div>
<div class="a" style="left:516px;top:403px;width:1px;height:18px;background:#f1f1ec"></div>
<div class="a" style="left:566px;top:403px;width:1px;height:18px;background:#f1f1ec"></div>
<div class="a" style="left:686px;top:403px;width:1px;height:18px;background:#f1f1ec"></div>
<div class="a" style="left:1420px;top:403px;width:1px;height:18px;background:#f1f1ec"></div>
<div class="a" style="left:1520px;top:403px;width:1px;height:18px;background:#f1f1ec"></div>
<div class="a" style="left:1660px;top:403px;width:1px;height:18px;background:#f1f1ec"></div>
<div class="t" style="left:471px;top:407px;font-size:11.3px;line-height:13px;transform:scaleX(0.9500);transform-origin:0 0;">1543</div>
<div class="t" style="left:522px;top:407px;font-size:11.3px;line-height:13px;transform:scaleX(0.9500);transform-origin:0 0;">2</div>
<div class="t" style="left:572px;top:407px;font-size:11.3px;line-height:13px;transform:scaleX(1.0074);transform-origin:0 0;">poc.exe</div>
<div class="t" style="left:692px;top:407px;font-size:11.3px;line-height:13px;color:#2b8c90;transform:scaleX(1.0394);transform-origin:0 0;">NtWaitForSingleObject</div>
<div class="t" style="left:810.9px;top:407px;font-size:11.3px;line-height:13px;color:#484848;transform:scaleX(0.9555);transform-origin:0 0;"> ( </div>
<div class="t" style="left:820.5px;top:407px;font-size:11.3px;line-height:13px;color:#484848;transform:scaleX(0.9561);transform-origin:0 0;">0x00000000000000f0</div>
<div class="t" style="left:924.5px;top:407px;font-size:11.3px;line-height:13px;color:#484848;transform:scaleX(1.1940);transform-origin:0 0;">, </div>
<div class="t" style="left:932px;top:407px;font-size:11.3px;line-height:13px;color:#484848;transform:scaleX(0.8107);transform-origin:0 0;">FALSE</div>
<div class="t" style="left:960.5px;top:407px;font-size:11.3px;line-height:13px;color:#484848;transform:scaleX(1.1144);transform-origin:0 0;">, </div>
<div class="t" style="left:967.5px;top:407px;font-size:11.3px;line-height:13px;color:#9a9a9a;transform:scaleX(0.8866);transform-origin:0 0;">NULL</div>
<div class="t" style="left:993.1px;top:407px;font-size:11.3px;line-height:13px;color:#484848;transform:scaleX(0.7964);transform-origin:0 0;"> )</div>
<div class="t" style="left:1426px;top:407px;font-size:11.3px;line-height:13px;color:#555;transform:scaleX(0.8482);transform-origin:0 0;">STATUS_SUCCESS</div>
<div class="t" style="left:1666px;top:407px;font-size:11.3px;line-height:13px;transform:scaleX(0.9524);transform-origin:0 0;">0.0000016</div>
<div class="a" style="left:468px;top:421px;width:1603px;height:1px;background:#ebebeb"></div>
<div class="a" style="left:468px;top:422px;width:1268px;height:18px;background:#f6f4c6"></div>
<div class="a" style="left:516px;top:422px;width:1px;height:18px;background:#f1f1ec"></div>
<div class="a" style="left:566px;top:422px;width:1px;height:18px;background:#f1f1ec"></div>
<div class="a" style="left:686px;top:422px;width:1px;height:18px;background:#f1f1ec"></div>
<div class="a" style="left:1420px;top:422px;width:1px;height:18px;background:#f1f1ec"></div>
<div class="a" style="left:1520px;top:422px;width:1px;height:18px;background:#f1f1ec"></div>
<div class="a" style="left:1660px;top:422px;width:1px;height:18px;background:#f1f1ec"></div>
<div class="t" style="left:471px;top:426px;font-size:11.3px;line-height:13px;transform:scaleX(0.9500);transform-origin:0 0;">1548</div>
<div class="t" style="left:522px;top:426px;font-size:11.3px;line-height:13px;transform:scaleX(0.9500);transform-origin:0 0;">2</div>
<div class="t" style="left:572px;top:426px;font-size:11.3px;line-height:13px;transform:scaleX(1.0074);transform-origin:0 0;">poc.exe</div>
<div class="t" style="left:692px;top:426px;font-size:11.3px;line-height:13px;color:#2b8c90;transform:scaleX(1.0394);transform-origin:0 0;">NtWaitForSingleObject</div>
<div class="t" style="left:810.9px;top:426px;font-size:11.3px;line-height:13px;color:#484848;transform:scaleX(0.9555);transform-origin:0 0;"> ( </div>
<div class="t" style="left:820.5px;top:426px;font-size:11.3px;line-height:13px;color:#484848;transform:scaleX(0.9561);transform-origin:0 0;">0x00000000000000f0</div>
<div class="t" style="left:924.5px;top:426px;font-size:11.3px;line-height:13px;color:#484848;transform:scaleX(1.1940);transform-origin:0 0;">, </div>
<div class="t" style="left:932px;top:426px;font-size:11.3px;line-height:13px;color:#484848;transform:scaleX(0.8107);transform-origin:0 0;">FALSE</div>
<div class="t" style="left:960.5px;top:426px;font-size:11.3px;line-height:13px;color:#484848;transform:scaleX(1.1144);transform-origin:0 0;">, </div>
<div class="t" style="left:967.5px;top:426px;font-size:11.3px;line-height:13px;color:#9a9a9a;transform:scaleX(0.8866);transform-origin:0 0;">NULL</div>
<div class="t" style="left:993.1px;top:426px;font-size:11.3px;line-height:13px;color:#484848;transform:scaleX(0.7964);transform-origin:0 0;"> )</div>
<div class="t" style="left:1426px;top:426px;font-size:11.3px;line-height:13px;color:#555;transform:scaleX(0.8482);transform-origin:0 0;">STATUS_SUCCESS</div>
<div class="t" style="left:1666px;top:426px;font-size:11.3px;line-height:13px;transform:scaleX(0.9524);transform-origin:0 0;">0.0039358</div>
<div class="a" style="left:468px;top:440px;width:1603px;height:1px;background:#ebebeb"></div>
<div class="a" style="left:468px;top:441px;width:1268px;height:18px;background:#f6f4c6"></div>
<div class="a" style="left:516px;top:441px;width:1px;height:18px;background:#f1f1ec"></div>
<div class="a" style="left:566px;top:441px;width:1px;height:18px;background:#f1f1ec"></div>
<div class="a" style="left:686px;top:441px;width:1px;height:18px;background:#f1f1ec"></div>
<div class="a" style="left:1420px;top:441px;width:1px;height:18px;background:#f1f1ec"></div>
<div class="a" style="left:1520px;top:441px;width:1px;height:18px;background:#f1f1ec"></div>
<div class="a" style="left:1660px;top:441px;width:1px;height:18px;background:#f1f1ec"></div>
<div class="t" style="left:471px;top:445px;font-size:11.3px;line-height:13px;transform:scaleX(0.9500);transform-origin:0 0;">1640</div>
<div class="t" style="left:522px;top:445px;font-size:11.3px;line-height:13px;transform:scaleX(0.9500);transform-origin:0 0;">2</div>
<div class="t" style="left:572px;top:445px;font-size:11.3px;line-height:13px;transform:scaleX(1.0074);transform-origin:0 0;">poc.exe</div>
<div class="t" style="left:692px;top:445px;font-size:11.3px;line-height:13px;color:#2b8c90;transform:scaleX(1.0394);transform-origin:0 0;">NtWaitForSingleObject</div>
<div class="t" style="left:810.9px;top:445px;font-size:11.3px;line-height:13px;color:#484848;transform:scaleX(0.9555);transform-origin:0 0;"> ( </div>
<div class="t" style="left:820.5px;top:445px;font-size:11.3px;line-height:13px;color:#484848;transform:scaleX(0.9561);transform-origin:0 0;">0x00000000000000f0</div>
<div class="t" style="left:924.5px;top:445px;font-size:11.3px;line-height:13px;color:#484848;transform:scaleX(1.1940);transform-origin:0 0;">, </div>
<div class="t" style="left:932px;top:445px;font-size:11.3px;line-height:13px;color:#484848;transform:scaleX(0.8107);transform-origin:0 0;">FALSE</div>
<div class="t" style="left:960.5px;top:445px;font-size:11.3px;line-height:13px;color:#484848;transform:scaleX(1.1144);transform-origin:0 0;">, </div>
<div class="t" style="left:967.5px;top:445px;font-size:11.3px;line-height:13px;color:#9a9a9a;transform:scaleX(0.8866);transform-origin:0 0;">NULL</div>
<div class="t" style="left:993.1px;top:445px;font-size:11.3px;line-height:13px;color:#484848;transform:scaleX(0.7964);transform-origin:0 0;"> )</div>
<div class="t" style="left:1426px;top:445px;font-size:11.3px;line-height:13px;color:#555;transform:scaleX(0.8482);transform-origin:0 0;">STATUS_SUCCESS</div>
<div class="t" style="left:1666px;top:445px;font-size:11.3px;line-height:13px;transform:scaleX(0.9524);transform-origin:0 0;">0.0000527</div>
<div class="a" style="left:468px;top:459px;width:1603px;height:1px;background:#ebebeb"></div>
<div class="a" style="left:468px;top:460px;width:1268px;height:18px;background:#f6f4c6"></div>
<div class="a" style="left:516px;top:460px;width:1px;height:18px;background:#f1f1ec"></div>
<div class="a" style="left:566px;top:460px;width:1px;height:18px;background:#f1f1ec"></div>
<div class="a" style="left:686px;top:460px;width:1px;height:18px;background:#f1f1ec"></div>
<div class="a" style="left:1420px;top:460px;width:1px;height:18px;background:#f1f1ec"></div>
<div class="a" style="left:1520px;top:460px;width:1px;height:18px;background:#f1f1ec"></div>
<div class="a" style="left:1660px;top:460px;width:1px;height:18px;background:#f1f1ec"></div>
<div class="t" style="left:471px;top:464px;font-size:11.3px;line-height:13px;transform:scaleX(0.9500);transform-origin:0 0;">1646</div>
<div class="t" style="left:522px;top:464px;font-size:11.3px;line-height:13px;transform:scaleX(0.9500);transform-origin:0 0;">2</div>
<div class="t" style="left:572px;top:464px;font-size:11.3px;line-height:13px;transform:scaleX(1.0074);transform-origin:0 0;">poc.exe</div>
<div class="t" style="left:692px;top:464px;font-size:11.3px;line-height:13px;color:#2b8c90;transform:scaleX(1.0394);transform-origin:0 0;">NtWaitForSingleObject</div>
<div class="t" style="left:810.9px;top:464px;font-size:11.3px;line-height:13px;color:#484848;transform:scaleX(0.9555);transform-origin:0 0;"> ( </div>
<div class="t" style="left:820.5px;top:464px;font-size:11.3px;line-height:13px;color:#484848;transform:scaleX(0.9561);transform-origin:0 0;">0x00000000000000f0</div>
<div class="t" style="left:924.5px;top:464px;font-size:11.3px;line-height:13px;color:#484848;transform:scaleX(1.1940);transform-origin:0 0;">, </div>
<div class="t" style="left:932px;top:464px;font-size:11.3px;line-height:13px;color:#484848;transform:scaleX(0.8107);transform-origin:0 0;">FALSE</div>
<div class="t" style="left:960.5px;top:464px;font-size:11.3px;line-height:13px;color:#484848;transform:scaleX(1.1144);transform-origin:0 0;">, </div>
<div class="t" style="left:967.5px;top:464px;font-size:11.3px;line-height:13px;color:#9a9a9a;transform:scaleX(0.8866);transform-origin:0 0;">NULL</div>
<div class="t" style="left:993.1px;top:464px;font-size:11.3px;line-height:13px;color:#484848;transform:scaleX(0.7964);transform-origin:0 0;"> )</div>
<div class="t" style="left:1426px;top:464px;font-size:11.3px;line-height:13px;color:#555;transform:scaleX(0.8482);transform-origin:0 0;">STATUS_SUCCESS</div>
<div class="t" style="left:1666px;top:464px;font-size:11.3px;line-height:13px;transform:scaleX(0.9524);transform-origin:0 0;">0.0000009</div>
<div class="a" style="left:468px;top:478px;width:1603px;height:1px;background:#ebebeb"></div>
<div class="a" style="left:468px;top:479px;width:1268px;height:18px;background:#f6f4c6"></div>
<div class="a" style="left:516px;top:479px;width:1px;height:18px;background:#f1f1ec"></div>
<div class="a" style="left:566px;top:479px;width:1px;height:18px;background:#f1f1ec"></div>
<div class="a" style="left:686px;top:479px;width:1px;height:18px;background:#f1f1ec"></div>
<div class="a" style="left:1420px;top:479px;width:1px;height:18px;background:#f1f1ec"></div>
<div class="a" style="left:1520px;top:479px;width:1px;height:18px;background:#f1f1ec"></div>
<div class="a" style="left:1660px;top:479px;width:1px;height:18px;background:#f1f1ec"></div>
<div class="t" style="left:471px;top:483px;font-size:11.3px;line-height:13px;transform:scaleX(0.9500);transform-origin:0 0;">1657</div>
<div class="t" style="left:522px;top:483px;font-size:11.3px;line-height:13px;transform:scaleX(0.9500);transform-origin:0 0;">2</div>
<div class="t" style="left:572px;top:483px;font-size:11.3px;line-height:13px;transform:scaleX(1.0074);transform-origin:0 0;">poc.exe</div>
<div class="t" style="left:692px;top:483px;font-size:11.3px;line-height:13px;color:#2b8c90;transform:scaleX(1.0394);transform-origin:0 0;">NtWaitForSingleObject</div>
<div class="t" style="left:810.9px;top:483px;font-size:11.3px;line-height:13px;color:#484848;transform:scaleX(0.9555);transform-origin:0 0;"> ( </div>
<div class="t" style="left:820.5px;top:483px;font-size:11.3px;line-height:13px;color:#484848;transform:scaleX(0.9561);transform-origin:0 0;">0x00000000000000f0</div>
<div class="t" style="left:924.5px;top:483px;font-size:11.3px;line-height:13px;color:#484848;transform:scaleX(1.1940);transform-origin:0 0;">, </div>
<div class="t" style="left:932px;top:483px;font-size:11.3px;line-height:13px;color:#484848;transform:scaleX(0.8107);transform-origin:0 0;">FALSE</div>
<div class="t" style="left:960.5px;top:483px;font-size:11.3px;line-height:13px;color:#484848;transform:scaleX(1.1144);transform-origin:0 0;">, </div>
<div class="t" style="left:967.5px;top:483px;font-size:11.3px;line-height:13px;color:#9a9a9a;transform:scaleX(0.8866);transform-origin:0 0;">NULL</div>
<div class="t" style="left:993.1px;top:483px;font-size:11.3px;line-height:13px;color:#484848;transform:scaleX(0.7964);transform-origin:0 0;"> )</div>
<div class="t" style="left:1426px;top:483px;font-size:11.3px;line-height:13px;color:#555;transform:scaleX(0.8482);transform-origin:0 0;">STATUS_SUCCESS</div>
<div class="t" style="left:1666px;top:483px;font-size:11.3px;line-height:13px;transform:scaleX(0.9524);transform-origin:0 0;">0.0000909</div>
<div class="a" style="left:468px;top:497px;width:1603px;height:1px;background:#ebebeb"></div>
<div class="a" style="left:468px;top:498px;width:1268px;height:18px;background:#f6f4c6"></div>
<div class="a" style="left:516px;top:498px;width:1px;height:18px;background:#f1f1ec"></div>
<div class="a" style="left:566px;top:498px;width:1px;height:18px;background:#f1f1ec"></div>
<div class="a" style="left:686px;top:498px;width:1px;height:18px;background:#f1f1ec"></div>
<div class="a" style="left:1420px;top:498px;width:1px;height:18px;background:#f1f1ec"></div>
<div class="a" style="left:1520px;top:498px;width:1px;height:18px;background:#f1f1ec"></div>
<div class="a" style="left:1660px;top:498px;width:1px;height:18px;background:#f1f1ec"></div>
<div class="t" style="left:471px;top:502px;font-size:11.3px;line-height:13px;transform:scaleX(0.9500);transform-origin:0 0;">1663</div>
<div class="t" style="left:522px;top:502px;font-size:11.3px;line-height:13px;transform:scaleX(0.9500);transform-origin:0 0;">2</div>
<div class="t" style="left:572px;top:502px;font-size:11.3px;line-height:13px;transform:scaleX(1.0074);transform-origin:0 0;">poc.exe</div>
<div class="t" style="left:692px;top:502px;font-size:11.3px;line-height:13px;color:#2b8c90;transform:scaleX(1.0394);transform-origin:0 0;">NtWaitForSingleObject</div>
<div class="t" style="left:810.9px;top:502px;font-size:11.3px;line-height:13px;color:#484848;transform:scaleX(0.9555);transform-origin:0 0;"> ( </div>
<div class="t" style="left:820.5px;top:502px;font-size:11.3px;line-height:13px;color:#484848;transform:scaleX(0.9561);transform-origin:0 0;">0x00000000000000f0</div>
<div class="t" style="left:924.5px;top:502px;font-size:11.3px;line-height:13px;color:#484848;transform:scaleX(1.1940);transform-origin:0 0;">, </div>
<div class="t" style="left:932px;top:502px;font-size:11.3px;line-height:13px;color:#484848;transform:scaleX(0.8107);transform-origin:0 0;">FALSE</div>
<div class="t" style="left:960.5px;top:502px;font-size:11.3px;line-height:13px;color:#484848;transform:scaleX(1.1144);transform-origin:0 0;">, </div>
<div class="t" style="left:967.5px;top:502px;font-size:11.3px;line-height:13px;color:#9a9a9a;transform:scaleX(0.8866);transform-origin:0 0;">NULL</div>
<div class="t" style="left:993.1px;top:502px;font-size:11.3px;line-height:13px;color:#484848;transform:scaleX(0.7964);transform-origin:0 0;"> )</div>
<div class="t" style="left:1426px;top:502px;font-size:11.3px;line-height:13px;color:#555;transform:scaleX(0.8482);transform-origin:0 0;">STATUS_SUCCESS</div>
<div class="t" style="left:1666px;top:502px;font-size:11.3px;line-height:13px;transform:scaleX(0.9524);transform-origin:0 0;">0.0000405</div>
<div class="a" style="left:468px;top:516px;width:1603px;height:1px;background:#ebebeb"></div>
<div class="a" style="left:468px;top:517px;width:1268px;height:18px;background:#efefef"></div>
<div class="t" style="left:471px;top:521px;font-size:11.3px;line-height:13px;transform:scaleX(0.9500);transform-origin:0 0;">1664</div>
<div class="t" style="left:522px;top:521px;font-size:11.3px;line-height:13px;transform:scaleX(0.9500);transform-origin:0 0;">1</div>
<div class="t" style="left:572px;top:521px;font-size:11.3px;line-height:13px;transform:scaleX(1.0074);transform-origin:0 0;">poc.exe</div>
<div class="t" style="left:692px;top:521px;font-size:11.3px;line-height:13px;color:#000;transform:scaleX(1.0100);transform-origin:0 0;">NtQueryInformationProcess</div>
<div class="t" style="left:832.8px;top:521px;font-size:11.3px;line-height:13px;color:#000;transform:scaleX(0.9633);transform-origin:0 0;"> ( 0x0000000000000184, ProcessBasicInformation, 0x000000c00005f988, 0x00000030, NULL )</div>
<div class="t" style="left:1426px;top:521px;font-size:11.3px;line-height:13px;color:#000;transform:scaleX(0.8482);transform-origin:0 0;">STATUS_SUCCESS</div>
<div class="t" style="left:1666px;top:521px;font-size:11.3px;line-height:13px;transform:scaleX(0.9524);transform-origin:0 0;">0.0000024</div>
<div class="a" style="left:468px;top:535px;width:1603px;height:1px;background:#ebebeb"></div>
<div class="a" style="left:468px;top:536px;width:1268px;height:18px;background:#f6f4c6"></div>
<div class="a" style="left:516px;top:536px;width:1px;height:18px;background:#f1f1ec"></div>
<div class="a" style="left:566px;top:536px;width:1px;height:18px;background:#f1f1ec"></div>
<div class="a" style="left:686px;top:536px;width:1px;height:18px;background:#f1f1ec"></div>
<div class="a" style="left:1420px;top:536px;width:1px;height:18px;background:#f1f1ec"></div>
<div class="a" style="left:1520px;top:536px;width:1px;height:18px;background:#f1f1ec"></div>
<div class="a" style="left:1660px;top:536px;width:1px;height:18px;background:#f1f1ec"></div>
<div class="t" style="left:471px;top:540px;font-size:11.3px;line-height:13px;transform:scaleX(0.9500);transform-origin:0 0;">1667</div>
<div class="t" style="left:522px;top:540px;font-size:11.3px;line-height:13px;transform:scaleX(0.9500);transform-origin:0 0;">2</div>
<div class="t" style="left:572px;top:540px;font-size:11.3px;line-height:13px;transform:scaleX(1.0074);transform-origin:0 0;">poc.exe</div>
<div class="t" style="left:692px;top:540px;font-size:11.3px;line-height:13px;color:#2b8c90;transform:scaleX(1.0394);transform-origin:0 0;">NtWaitForSingleObject</div>
<div class="t" style="left:810.9px;top:540px;font-size:11.3px;line-height:13px;color:#484848;transform:scaleX(0.9555);transform-origin:0 0;"> ( </div>
<div class="t" style="left:820.5px;top:540px;font-size:11.3px;line-height:13px;color:#484848;transform:scaleX(0.9561);transform-origin:0 0;">0x00000000000000f0</div>
<div class="t" style="left:924.5px;top:540px;font-size:11.3px;line-height:13px;color:#484848;transform:scaleX(1.1940);transform-origin:0 0;">, </div>
<div class="t" style="left:932px;top:540px;font-size:11.3px;line-height:13px;color:#484848;transform:scaleX(0.8107);transform-origin:0 0;">FALSE</div>
<div class="t" style="left:960.5px;top:540px;font-size:11.3px;line-height:13px;color:#484848;transform:scaleX(1.1144);transform-origin:0 0;">, </div>
<div class="t" style="left:967.5px;top:540px;font-size:11.3px;line-height:13px;color:#9a9a9a;transform:scaleX(0.8866);transform-origin:0 0;">NULL</div>
<div class="t" style="left:993.1px;top:540px;font-size:11.3px;line-height:13px;color:#484848;transform:scaleX(0.7964);transform-origin:0 0;"> )</div>
<div class="t" style="left:1426px;top:540px;font-size:11.3px;line-height:13px;color:#555;transform:scaleX(0.8482);transform-origin:0 0;">STATUS_SUCCESS</div>
<div class="t" style="left:1666px;top:540px;font-size:11.3px;line-height:13px;transform:scaleX(0.9676);transform-origin:0 0;">0.0000011</div>
<div class="a" style="left:468px;top:554px;width:1603px;height:1px;background:#ebebeb"></div>
<div class="a" style="left:468px;top:555px;width:1268px;height:18px;background:#f6f4c6"></div>
<div class="a" style="left:516px;top:555px;width:1px;height:18px;background:#f1f1ec"></div>
<div class="a" style="left:566px;top:555px;width:1px;height:18px;background:#f1f1ec"></div>
<div class="a" style="left:686px;top:555px;width:1px;height:18px;background:#f1f1ec"></div>
<div class="a" style="left:1420px;top:555px;width:1px;height:18px;background:#f1f1ec"></div>
<div class="a" style="left:1520px;top:555px;width:1px;height:18px;background:#f1f1ec"></div>
<div class="a" style="left:1660px;top:555px;width:1px;height:18px;background:#f1f1ec"></div>
<div class="t" style="left:471px;top:559px;font-size:11.3px;line-height:13px;transform:scaleX(0.9500);transform-origin:0 0;">1669</div>
<div class="t" style="left:522px;top:559px;font-size:11.3px;line-height:13px;transform:scaleX(0.9500);transform-origin:0 0;">2</div>
<div class="t" style="left:572px;top:559px;font-size:11.3px;line-height:13px;transform:scaleX(1.0074);transform-origin:0 0;">poc.exe</div>
<div class="t" style="left:692px;top:559px;font-size:11.3px;line-height:13px;color:#2b8c90;transform:scaleX(1.0394);transform-origin:0 0;">NtWaitForSingleObject</div>
<div class="t" style="left:810.9px;top:559px;font-size:11.3px;line-height:13px;color:#484848;transform:scaleX(0.9555);transform-origin:0 0;"> ( </div>
<div class="t" style="left:820.5px;top:559px;font-size:11.3px;line-height:13px;color:#484848;transform:scaleX(0.9561);transform-origin:0 0;">0x00000000000000f0</div>
<div class="t" style="left:924.5px;top:559px;font-size:11.3px;line-height:13px;color:#484848;transform:scaleX(1.1940);transform-origin:0 0;">, </div>
<div class="t" style="left:932px;top:559px;font-size:11.3px;line-height:13px;color:#484848;transform:scaleX(0.8107);transform-origin:0 0;">FALSE</div>
<div class="t" style="left:960.5px;top:559px;font-size:11.3px;line-height:13px;color:#484848;transform:scaleX(1.1144);transform-origin:0 0;">, </div>
<div class="t" style="left:967.5px;top:559px;font-size:11.3px;line-height:13px;color:#9a9a9a;transform:scaleX(0.8866);transform-origin:0 0;">NULL</div>
<div class="t" style="left:993.1px;top:559px;font-size:11.3px;line-height:13px;color:#484848;transform:scaleX(0.7964);transform-origin:0 0;"> )</div>
<div class="t" style="left:1426px;top:559px;font-size:11.3px;line-height:13px;color:#555;transform:scaleX(0.8482);transform-origin:0 0;">STATUS_SUCCESS</div>
<div class="t" style="left:1666px;top:559px;font-size:11.3px;line-height:13px;transform:scaleX(0.9524);transform-origin:0 0;">0.0000010</div>
<div class="a" style="left:468px;top:573px;width:1603px;height:1px;background:#ebebeb"></div>
<div class="a" style="left:468px;top:574px;width:1268px;height:18px;background:#f6f4c6"></div>
<div class="a" style="left:516px;top:574px;width:1px;height:18px;background:#f1f1ec"></div>
<div class="a" style="left:566px;top:574px;width:1px;height:18px;background:#f1f1ec"></div>
<div class="a" style="left:686px;top:574px;width:1px;height:18px;background:#f1f1ec"></div>
<div class="a" style="left:1420px;top:574px;width:1px;height:18px;background:#f1f1ec"></div>
<div class="a" style="left:1520px;top:574px;width:1px;height:18px;background:#f1f1ec"></div>
<div class="a" style="left:1660px;top:574px;width:1px;height:18px;background:#f1f1ec"></div>
<div class="t" style="left:471px;top:578px;font-size:11.3px;line-height:13px;transform:scaleX(0.9500);transform-origin:0 0;">1671</div>
<div class="t" style="left:522px;top:578px;font-size:11.3px;line-height:13px;transform:scaleX(0.9500);transform-origin:0 0;">2</div>
<div class="t" style="left:572px;top:578px;font-size:11.3px;line-height:13px;transform:scaleX(1.0074);transform-origin:0 0;">poc.exe</div>
<div class="t" style="left:692px;top:578px;font-size:11.3px;line-height:13px;color:#2b8c90;transform:scaleX(1.0394);transform-origin:0 0;">NtWaitForSingleObject</div>
<div class="t" style="left:810.9px;top:578px;font-size:11.3px;line-height:13px;color:#484848;transform:scaleX(0.9555);transform-origin:0 0;"> ( </div>
<div class="t" style="left:820.5px;top:578px;font-size:11.3px;line-height:13px;color:#484848;transform:scaleX(0.9561);transform-origin:0 0;">0x00000000000000f0</div>
<div class="t" style="left:924.5px;top:578px;font-size:11.3px;line-height:13px;color:#484848;transform:scaleX(1.1940);transform-origin:0 0;">, </div>
<div class="t" style="left:932px;top:578px;font-size:11.3px;line-height:13px;color:#484848;transform:scaleX(0.8107);transform-origin:0 0;">FALSE</div>
<div class="t" style="left:960.5px;top:578px;font-size:11.3px;line-height:13px;color:#484848;transform:scaleX(1.1144);transform-origin:0 0;">, </div>
<div class="t" style="left:967.5px;top:578px;font-size:11.3px;line-height:13px;color:#9a9a9a;transform:scaleX(0.8866);transform-origin:0 0;">NULL</div>
<div class="t" style="left:993.1px;top:578px;font-size:11.3px;line-height:13px;color:#484848;transform:scaleX(0.7964);transform-origin:0 0;"> )</div>
<div class="t" style="left:1426px;top:578px;font-size:11.3px;line-height:13px;color:#555;transform:scaleX(0.8482);transform-origin:0 0;">STATUS_SUCCESS</div>
<div class="t" style="left:1666px;top:578px;font-size:11.3px;line-height:13px;transform:scaleX(0.9524);transform-origin:0 0;">0.0000531</div>
<div class="a" style="left:468px;top:592px;width:1603px;height:1px;background:#ebebeb"></div>
<div class="a" style="left:468px;top:593px;width:1268px;height:18px;background:#f6f4c6"></div>
<div class="a" style="left:516px;top:593px;width:1px;height:18px;background:#f1f1ec"></div>
<div class="a" style="left:566px;top:593px;width:1px;height:18px;background:#f1f1ec"></div>
<div class="a" style="left:686px;top:593px;width:1px;height:18px;background:#f1f1ec"></div>
<div class="a" style="left:1420px;top:593px;width:1px;height:18px;background:#f1f1ec"></div>
<div class="a" style="left:1520px;top:593px;width:1px;height:18px;background:#f1f1ec"></div>
<div class="a" style="left:1660px;top:593px;width:1px;height:18px;background:#f1f1ec"></div>
<div class="t" style="left:471px;top:597px;font-size:11.3px;line-height:13px;transform:scaleX(0.9500);transform-origin:0 0;">1673</div>
<div class="t" style="left:522px;top:597px;font-size:11.3px;line-height:13px;transform:scaleX(0.9500);transform-origin:0 0;">2</div>
<div class="t" style="left:572px;top:597px;font-size:11.3px;line-height:13px;transform:scaleX(1.0074);transform-origin:0 0;">poc.exe</div>
<div class="t" style="left:692px;top:597px;font-size:11.3px;line-height:13px;color:#2b8c90;transform:scaleX(1.0394);transform-origin:0 0;">NtWaitForSingleObject</div>
<div class="t" style="left:810.9px;top:597px;font-size:11.3px;line-height:13px;color:#484848;transform:scaleX(0.9555);transform-origin:0 0;"> ( </div>
<div class="t" style="left:820.5px;top:597px;font-size:11.3px;line-height:13px;color:#484848;transform:scaleX(0.9561);transform-origin:0 0;">0x00000000000000f0</div>
<div class="t" style="left:924.5px;top:597px;font-size:11.3px;line-height:13px;color:#484848;transform:scaleX(1.1940);transform-origin:0 0;">, </div>
<div class="t" style="left:932px;top:597px;font-size:11.3px;line-height:13px;color:#484848;transform:scaleX(0.8107);transform-origin:0 0;">FALSE</div>
<div class="t" style="left:960.5px;top:597px;font-size:11.3px;line-height:13px;color:#484848;transform:scaleX(1.1144);transform-origin:0 0;">, </div>
<div class="t" style="left:967.5px;top:597px;font-size:11.3px;line-height:13px;color:#9a9a9a;transform:scaleX(0.8866);transform-origin:0 0;">NULL</div>
<div class="t" style="left:993.1px;top:597px;font-size:11.3px;line-height:13px;color:#484848;transform:scaleX(0.7964);transform-origin:0 0;"> )</div>
<div class="t" style="left:1426px;top:597px;font-size:11.3px;line-height:13px;color:#555;transform:scaleX(0.8482);transform-origin:0 0;">STATUS_SUCCESS</div>
<div class="t" style="left:1666px;top:597px;font-size:11.3px;line-height:13px;transform:scaleX(0.9524);transform-origin:0 0;">0.0000012</div>
<div class="a" style="left:468px;top:611px;width:1603px;height:1px;background:#ebebeb"></div>
<div class="a" style="left:468px;top:612px;width:1268px;height:18px;background:#f6f4c6"></div>
<div class="a" style="left:516px;top:612px;width:1px;height:18px;background:#f1f1ec"></div>
<div class="a" style="left:566px;top:612px;width:1px;height:18px;background:#f1f1ec"></div>
<div class="a" style="left:686px;top:612px;width:1px;height:18px;background:#f1f1ec"></div>
<div class="a" style="left:1420px;top:612px;width:1px;height:18px;background:#f1f1ec"></div>
<div class="a" style="left:1520px;top:612px;width:1px;height:18px;background:#f1f1ec"></div>
<div class="a" style="left:1660px;top:612px;width:1px;height:18px;background:#f1f1ec"></div>
<div class="t" style="left:471px;top:616px;font-size:11.3px;line-height:13px;transform:scaleX(0.9500);transform-origin:0 0;">1676</div>
<div class="t" style="left:522px;top:616px;font-size:11.3px;line-height:13px;transform:scaleX(0.9500);transform-origin:0 0;">2</div>
<div class="t" style="left:572px;top:616px;font-size:11.3px;line-height:13px;transform:scaleX(1.0074);transform-origin:0 0;">poc.exe</div>
<div class="t" style="left:692px;top:616px;font-size:11.3px;line-height:13px;color:#2b8c90;transform:scaleX(1.0394);transform-origin:0 0;">NtWaitForSingleObject</div>
<div class="t" style="left:810.9px;top:616px;font-size:11.3px;line-height:13px;color:#484848;transform:scaleX(0.9555);transform-origin:0 0;"> ( </div>
<div class="t" style="left:820.5px;top:616px;font-size:11.3px;line-height:13px;color:#484848;transform:scaleX(0.9561);transform-origin:0 0;">0x00000000000000f0</div>
<div class="t" style="left:924.5px;top:616px;font-size:11.3px;line-height:13px;color:#484848;transform:scaleX(1.1940);transform-origin:0 0;">, </div>
<div class="t" style="left:932px;top:616px;font-size:11.3px;line-height:13px;color:#484848;transform:scaleX(0.8107);transform-origin:0 0;">FALSE</div>
<div class="t" style="left:960.5px;top:616px;font-size:11.3px;line-height:13px;color:#484848;transform:scaleX(1.1144);transform-origin:0 0;">, </div>
<div class="t" style="left:967.5px;top:616px;font-size:11.3px;line-height:13px;color:#9a9a9a;transform:scaleX(0.8866);transform-origin:0 0;">NULL</div>
<div class="t" style="left:993.1px;top:616px;font-size:11.3px;line-height:13px;color:#484848;transform:scaleX(0.7964);transform-origin:0 0;"> )</div>
<div class="t" style="left:1426px;top:616px;font-size:11.3px;line-height:13px;color:#555;transform:scaleX(0.8482);transform-origin:0 0;">STATUS_SUCCESS</div>
<div class="t" style="left:1666px;top:616px;font-size:11.3px;line-height:13px;transform:scaleX(0.9524);transform-origin:0 0;">0.0012812</div>
<div class="a" style="left:468px;top:630px;width:1603px;height:1px;background:#ebebeb"></div>
<div class="a" style="left:468px;top:631px;width:1268px;height:18px;background:#f3fcf9"></div>
<div class="a" style="left:516px;top:631px;width:1px;height:18px;background:#f1f1ec"></div>
<div class="a" style="left:566px;top:631px;width:1px;height:18px;background:#f1f1ec"></div>
<div class="a" style="left:686px;top:631px;width:1px;height:18px;background:#f1f1ec"></div>
<div class="a" style="left:1420px;top:631px;width:1px;height:18px;background:#f1f1ec"></div>
<div class="a" style="left:1520px;top:631px;width:1px;height:18px;background:#f1f1ec"></div>
<div class="a" style="left:1660px;top:631px;width:1px;height:18px;background:#f1f1ec"></div>
<div class="t" style="left:471px;top:635px;font-size:11.3px;line-height:13px;transform:scaleX(0.9500);transform-origin:0 0;">1678</div>
<div class="t" style="left:522px;top:635px;font-size:11.3px;line-height:13px;transform:scaleX(0.9500);transform-origin:0 0;">1</div>
<div class="t" style="left:572px;top:635px;font-size:11.3px;line-height:13px;transform:scaleX(1.0074);transform-origin:0 0;">poc.exe</div>
<div class="t" style="left:692px;top:635px;font-size:11.3px;line-height:13px;color:#2b8c90;transform:scaleX(1.0178);transform-origin:0 0;">NtReadVirtualMemory</div>
<div class="t" style="left:804.9px;top:635px;font-size:11.3px;line-height:13px;color:#484848;transform:scaleX(0.9900);transform-origin:0 0;"> ( </div>
<div class="t" style="left:814.84640625px;top:635px;font-size:11.3px;line-height:13px;color:#484848;transform:scaleX(0.9445);transform-origin:0 0;">0x0000000000000184</div>
<div class="t" style="left:921.0398437499999px;top:635px;font-size:11.3px;line-height:13px;color:#484848;transform:scaleX(0.9900);transform-origin:0 0;">, </div>
<div class="t" style="left:927.25828125px;top:635px;font-size:11.3px;line-height:13px;color:#9a9a9a;transform:scaleX(0.9445);transform-origin:0 0;">0x0000000100302010</div>
<div class="t" style="left:1033.45171875px;top:635px;font-size:11.3px;line-height:13px;color:#484848;transform:scaleX(0.9900);transform-origin:0 0;">, </div>
<div class="t" style="left:1039.67015625px;top:635px;font-size:11.3px;line-height:13px;color:#9a9a9a;transform:scaleX(0.9516);transform-origin:0 0;">0x000000c00005f928</div>
<div class="t" style="left:1143.07796875px;top:635px;font-size:11.3px;line-height:13px;color:#484848;transform:scaleX(0.9900);transform-origin:0 0;">, </div>
<div class="t" style="left:1149.29640625px;top:635px;font-size:11.3px;line-height:13px;color:#484848;transform:scaleX(0.9445);transform-origin:0 0;">0x0000000000000008</div>
<div class="t" style="left:1255.48984375px;top:635px;font-size:11.3px;line-height:13px;color:#484848;transform:scaleX(0.9900);transform-origin:0 0;">, </div>
<div class="t" style="left:1261.70828125px;top:635px;font-size:11.3px;line-height:13px;color:#9a9a9a;transform:scaleX(0.9540);transform-origin:0 0;">0x000000c0001060e0</div>
<div class="t" style="left:1368.38234375px;top:635px;font-size:11.3px;line-height:13px;color:#484848;transform:scaleX(0.9900);transform-origin:0 0;"> )</div>
<div class="t" style="left:1426px;top:635px;font-size:11.3px;line-height:13px;color:#3a3a3a;transform:scaleX(0.8482);transform-origin:0 0;">STATUS_SUCCESS</div>
<div class="t" style="left:1666px;top:635px;font-size:11.3px;line-height:13px;transform:scaleX(0.9524);transform-origin:0 0;">0.0000050</div>
<div class="a" style="left:468px;top:649px;width:1603px;height:1px;background:#ebebeb"></div>
<div class="a" style="left:468px;top:650px;width:1268px;height:18px;background:#f3fcf9"></div>
<div class="a" style="left:516px;top:650px;width:1px;height:18px;background:#f1f1ec"></div>
<div class="a" style="left:566px;top:650px;width:1px;height:18px;background:#f1f1ec"></div>
<div class="a" style="left:686px;top:650px;width:1px;height:18px;background:#f1f1ec"></div>
<div class="a" style="left:1420px;top:650px;width:1px;height:18px;background:#f1f1ec"></div>
<div class="a" style="left:1520px;top:650px;width:1px;height:18px;background:#f1f1ec"></div>
<div class="a" style="left:1660px;top:650px;width:1px;height:18px;background:#f1f1ec"></div>
<div class="t" style="left:471px;top:654px;font-size:11.3px;line-height:13px;transform:scaleX(0.9500);transform-origin:0 0;">1680</div>
<div class="t" style="left:522px;top:654px;font-size:11.3px;line-height:13px;transform:scaleX(0.9500);transform-origin:0 0;">1</div>
<div class="t" style="left:572px;top:654px;font-size:11.3px;line-height:13px;transform:scaleX(1.0074);transform-origin:0 0;">poc.exe</div>
<div class="t" style="left:692px;top:654px;font-size:11.3px;line-height:13px;color:#2b8c90;transform:scaleX(1.0178);transform-origin:0 0;">NtReadVirtualMemory</div>
<div class="t" style="left:804.9px;top:654px;font-size:11.3px;line-height:13px;color:#484848;transform:scaleX(0.9900);transform-origin:0 0;"> ( </div>
<div class="t" style="left:814.84640625px;top:654px;font-size:11.3px;line-height:13px;color:#484848;transform:scaleX(0.9445);transform-origin:0 0;">0x0000000000000184</div>
<div class="t" style="left:921.0398437499999px;top:654px;font-size:11.3px;line-height:13px;color:#484848;transform:scaleX(0.9900);transform-origin:0 0;">, </div>
<div class="t" style="left:927.25828125px;top:654px;font-size:11.3px;line-height:13px;color:#9a9a9a;transform:scaleX(0.9541);transform-origin:0 0;">0x00007ff662f70000</div>
<div class="t" style="left:1025.34890625px;top:654px;font-size:11.3px;line-height:13px;color:#484848;transform:scaleX(0.9900);transform-origin:0 0;">, </div>
<div class="t" style="left:1031.56734375px;top:654px;font-size:11.3px;line-height:13px;color:#9a9a9a;transform:scaleX(0.9568);transform-origin:0 0;">0x000000c00005f9b8</div>
<div class="t" style="left:1135.54046875px;top:654px;font-size:11.3px;line-height:13px;color:#484848;transform:scaleX(0.9900);transform-origin:0 0;">, </div>
<div class="t" style="left:1141.7589062499999px;top:654px;font-size:11.3px;line-height:13px;color:#484848;transform:scaleX(0.9445);transform-origin:0 0;">0x0000000000000040</div>
<div class="t" style="left:1247.95234375px;top:654px;font-size:11.3px;line-height:13px;color:#484848;transform:scaleX(0.9900);transform-origin:0 0;">, </div>
<div class="t" style="left:1254.17078125px;top:654px;font-size:11.3px;line-height:13px;color:#9a9a9a;transform:scaleX(0.9540);transform-origin:0 0;">0x000000c0001060e0</div>
<div class="t" style="left:1360.8448437499999px;top:654px;font-size:11.3px;line-height:13px;color:#484848;transform:scaleX(0.9900);transform-origin:0 0;"> )</div>
<div class="t" style="left:1426px;top:654px;font-size:11.3px;line-height:13px;color:#3a3a3a;transform:scaleX(0.8482);transform-origin:0 0;">STATUS_SUCCESS</div>
<div class="t" style="left:1666px;top:654px;font-size:11.3px;line-height:13px;transform:scaleX(0.9524);transform-origin:0 0;">0.0000041</div>
<div class="a" style="left:468px;top:668px;width:1603px;height:1px;background:#ebebeb"></div>
<div class="a" style="left:468px;top:669px;width:1268px;height:18px;background:#f3fcf9"></div>
<div class="a" style="left:516px;top:669px;width:1px;height:18px;background:#f1f1ec"></div>
<div class="a" style="left:566px;top:669px;width:1px;height:18px;background:#f1f1ec"></div>
<div class="a" style="left:686px;top:669px;width:1px;height:18px;background:#f1f1ec"></div>
<div class="a" style="left:1420px;top:669px;width:1px;height:18px;background:#f1f1ec"></div>
<div class="a" style="left:1520px;top:669px;width:1px;height:18px;background:#f1f1ec"></div>
<div class="a" style="left:1660px;top:669px;width:1px;height:18px;background:#f1f1ec"></div>
<div class="t" style="left:471px;top:673px;font-size:11.3px;line-height:13px;transform:scaleX(0.9500);transform-origin:0 0;">1683</div>
<div class="t" style="left:522px;top:673px;font-size:11.3px;line-height:13px;transform:scaleX(0.9500);transform-origin:0 0;">1</div>
<div class="t" style="left:572px;top:673px;font-size:11.3px;line-height:13px;transform:scaleX(1.0074);transform-origin:0 0;">poc.exe</div>
<div class="t" style="left:692px;top:673px;font-size:11.3px;line-height:13px;color:#2b8c90;transform:scaleX(1.0178);transform-origin:0 0;">NtReadVirtualMemory</div>
<div class="t" style="left:804.9px;top:673px;font-size:11.3px;line-height:13px;color:#484848;transform:scaleX(0.9900);transform-origin:0 0;"> ( </div>
<div class="t" style="left:814.84640625px;top:673px;font-size:11.3px;line-height:13px;color:#484848;transform:scaleX(0.9445);transform-origin:0 0;">0x0000000000000184</div>
<div class="t" style="left:921.0398437499999px;top:673px;font-size:11.3px;line-height:13px;color:#484848;transform:scaleX(0.9900);transform-origin:0 0;">, </div>
<div class="t" style="left:927.25828125px;top:673px;font-size:11.3px;line-height:13px;color:#9a9a9a;transform:scaleX(0.9596);transform-origin:0 0;">0x00007ff662f700e8</div>
<div class="t" style="left:1025.91421875px;top:673px;font-size:11.3px;line-height:13px;color:#484848;transform:scaleX(0.9900);transform-origin:0 0;">, </div>
<div class="t" style="left:1032.1326562499999px;top:673px;font-size:11.3px;line-height:13px;color:#9a9a9a;transform:scaleX(0.9568);transform-origin:0 0;">0x000000c00005fa88</div>
<div class="t" style="left:1136.1057812499998px;top:673px;font-size:11.3px;line-height:13px;color:#484848;transform:scaleX(0.9900);transform-origin:0 0;">, </div>
<div class="t" style="left:1142.3242187499998px;top:673px;font-size:11.3px;line-height:13px;color:#484848;transform:scaleX(0.9445);transform-origin:0 0;">0x0000000000000108</div>
<div class="t" style="left:1248.5176562499998px;top:673px;font-size:11.3px;line-height:13px;color:#484848;transform:scaleX(0.9900);transform-origin:0 0;">, </div>
<div class="t" style="left:1254.7360937499998px;top:673px;font-size:11.3px;line-height:13px;color:#9a9a9a;transform:scaleX(0.9540);transform-origin:0 0;">0x000000c0001060e0</div>
<div class="t" style="left:1361.4101562499998px;top:673px;font-size:11.3px;line-height:13px;color:#484848;transform:scaleX(0.9900);transform-origin:0 0;"> )</div>
<div class="t" style="left:1426px;top:673px;font-size:11.3px;line-height:13px;color:#3a3a3a;transform:scaleX(0.8482);transform-origin:0 0;">STATUS_SUCCESS</div>
<div class="t" style="left:1666px;top:673px;font-size:11.3px;line-height:13px;transform:scaleX(0.9524);transform-origin:0 0;">0.0000031</div>
<div class="a" style="left:468px;top:687px;width:1603px;height:1px;background:#ebebeb"></div>
<div class="a" style="left:468px;top:688px;width:1268px;height:18px;background:#f6f4c6"></div>
<div class="a" style="left:516px;top:688px;width:1px;height:18px;background:#f1f1ec"></div>
<div class="a" style="left:566px;top:688px;width:1px;height:18px;background:#f1f1ec"></div>
<div class="a" style="left:686px;top:688px;width:1px;height:18px;background:#f1f1ec"></div>
<div class="a" style="left:1420px;top:688px;width:1px;height:18px;background:#f1f1ec"></div>
<div class="a" style="left:1520px;top:688px;width:1px;height:18px;background:#f1f1ec"></div>
<div class="a" style="left:1660px;top:688px;width:1px;height:18px;background:#f1f1ec"></div>
<div class="t" style="left:471px;top:692px;font-size:11.3px;line-height:13px;transform:scaleX(0.9500);transform-origin:0 0;">1691</div>
<div class="t" style="left:522px;top:692px;font-size:11.3px;line-height:13px;transform:scaleX(0.9500);transform-origin:0 0;">2</div>
<div class="t" style="left:572px;top:692px;font-size:11.3px;line-height:13px;transform:scaleX(1.0074);transform-origin:0 0;">poc.exe</div>
<div class="t" style="left:692px;top:692px;font-size:11.3px;line-height:13px;color:#2b8c90;transform:scaleX(1.0394);transform-origin:0 0;">NtWaitForSingleObject</div>
<div class="t" style="left:810.9px;top:692px;font-size:11.3px;line-height:13px;color:#484848;transform:scaleX(0.9555);transform-origin:0 0;"> ( </div>
<div class="t" style="left:820.5px;top:692px;font-size:11.3px;line-height:13px;color:#484848;transform:scaleX(0.9561);transform-origin:0 0;">0x00000000000000f0</div>
<div class="t" style="left:924.5px;top:692px;font-size:11.3px;line-height:13px;color:#484848;transform:scaleX(1.1940);transform-origin:0 0;">, </div>
<div class="t" style="left:932px;top:692px;font-size:11.3px;line-height:13px;color:#484848;transform:scaleX(0.8107);transform-origin:0 0;">FALSE</div>
<div class="t" style="left:960.5px;top:692px;font-size:11.3px;line-height:13px;color:#484848;transform:scaleX(1.1144);transform-origin:0 0;">, </div>
<div class="t" style="left:967.5px;top:692px;font-size:11.3px;line-height:13px;color:#9a9a9a;transform:scaleX(0.8866);transform-origin:0 0;">NULL</div>
<div class="t" style="left:993.1px;top:692px;font-size:11.3px;line-height:13px;color:#484848;transform:scaleX(0.7964);transform-origin:0 0;"> )</div>
<div class="t" style="left:1426px;top:692px;font-size:11.3px;line-height:13px;color:#555;transform:scaleX(0.8482);transform-origin:0 0;">STATUS_SUCCESS</div>
<div class="t" style="left:1666px;top:692px;font-size:11.3px;line-height:13px;transform:scaleX(0.9676);transform-origin:0 0;">0.0000011</div>
<div class="a" style="left:468px;top:706px;width:1603px;height:1px;background:#ebebeb"></div>
<div class="a" style="left:468px;top:707px;width:1268px;height:18px;background:#f3fcf9"></div>
<div class="a" style="left:516px;top:707px;width:1px;height:18px;background:#f1f1ec"></div>
<div class="a" style="left:566px;top:707px;width:1px;height:18px;background:#f1f1ec"></div>
<div class="a" style="left:686px;top:707px;width:1px;height:18px;background:#f1f1ec"></div>
<div class="a" style="left:1420px;top:707px;width:1px;height:18px;background:#f1f1ec"></div>
<div class="a" style="left:1520px;top:707px;width:1px;height:18px;background:#f1f1ec"></div>
<div class="a" style="left:1660px;top:707px;width:1px;height:18px;background:#f1f1ec"></div>
<div class="t" style="left:471px;top:711px;font-size:11.3px;line-height:13px;transform:scaleX(0.9500);transform-origin:0 0;">1694</div>
<div class="t" style="left:522px;top:711px;font-size:11.3px;line-height:13px;transform:scaleX(0.9500);transform-origin:0 0;">1</div>
<div class="t" style="left:572px;top:711px;font-size:11.3px;line-height:13px;transform:scaleX(1.0074);transform-origin:0 0;">poc.exe</div>
<div class="t" style="left:692px;top:711px;font-size:11.3px;line-height:13px;color:#2b8c90;transform:scaleX(1.0266);transform-origin:0 0;">NtProtectVirtualMemory</div>
<div class="t" style="left:814.9px;top:711px;font-size:11.3px;line-height:13px;color:#484848;transform:scaleX(0.9900);transform-origin:0 0;"> ( </div>
<div class="t" style="left:824.84640625px;top:711px;font-size:11.3px;line-height:13px;color:#484848;transform:scaleX(0.9445);transform-origin:0 0;">0x0000000000000184</div>
<div class="t" style="left:931.0398437499999px;top:711px;font-size:11.3px;line-height:13px;color:#484848;transform:scaleX(0.9900);transform-origin:0 0;">, </div>
<div class="t" style="left:937.25828125px;top:711px;font-size:11.3px;line-height:13px;color:#9a9a9a;transform:scaleX(0.9516);transform-origin:0 0;">0x000000c00005f940</div>
<div class="t" style="left:1040.66609375px;top:711px;font-size:11.3px;line-height:13px;color:#484848;transform:scaleX(0.9900);transform-origin:0 0;">, </div>
<div class="t" style="left:1046.88453125px;top:711px;font-size:11.3px;line-height:13px;color:#9a9a9a;transform:scaleX(0.9568);transform-origin:0 0;">0x000000c00005f8d8</div>
<div class="t" style="left:1150.85765625px;top:711px;font-size:11.3px;line-height:13px;color:#484848;transform:scaleX(0.9900);transform-origin:0 0;">, </div>
<div class="t" style="left:1157.07609375px;top:711px;font-size:11.3px;line-height:13px;color:#484848;transform:scaleX(0.8669);transform-origin:0 0;">PAGE_READWRITE</div>
<div class="t" style="left:1247.73890625px;top:711px;font-size:11.3px;line-height:13px;color:#484848;transform:scaleX(0.9900);transform-origin:0 0;">, </div>
<div class="t" style="left:1253.9573437499998px;top:711px;font-size:11.3px;line-height:13px;color:#9a9a9a;transform:scaleX(0.9516);transform-origin:0 0;">0x000000c00005f918</div>
<div class="t" style="left:1357.36515625px;top:711px;font-size:11.3px;line-height:13px;color:#484848;transform:scaleX(0.9900);transform-origin:0 0;"> )</div>
<div class="t" style="left:1426px;top:711px;font-size:11.3px;line-height:13px;color:#3a3a3a;transform:scaleX(0.8482);transform-origin:0 0;">STATUS_SUCCESS</div>
<div class="t" style="left:1666px;top:711px;font-size:11.3px;line-height:13px;transform:scaleX(0.9524);transform-origin:0 0;">0.0000322</div>
<div class="a" style="left:468px;top:725px;width:1603px;height:1px;background:#ebebeb"></div>
<div class="a" style="left:468px;top:726px;width:1268px;height:18px;background:#f6f4c6"></div>
<div class="a" style="left:516px;top:726px;width:1px;height:18px;background:#f1f1ec"></div>
<div class="a" style="left:566px;top:726px;width:1px;height:18px;background:#f1f1ec"></div>
<div class="a" style="left:686px;top:726px;width:1px;height:18px;background:#f1f1ec"></div>
<div class="a" style="left:1420px;top:726px;width:1px;height:18px;background:#f1f1ec"></div>
<div class="a" style="left:1520px;top:726px;width:1px;height:18px;background:#f1f1ec"></div>
<div class="a" style="left:1660px;top:726px;width:1px;height:18px;background:#f1f1ec"></div>
<div class="t" style="left:471px;top:730px;font-size:11.3px;line-height:13px;transform:scaleX(0.9500);transform-origin:0 0;">1695</div>
<div class="t" style="left:522px;top:730px;font-size:11.3px;line-height:13px;transform:scaleX(0.9500);transform-origin:0 0;">2</div>
<div class="t" style="left:572px;top:730px;font-size:11.3px;line-height:13px;transform:scaleX(1.0074);transform-origin:0 0;">poc.exe</div>
<div class="t" style="left:692px;top:730px;font-size:11.3px;line-height:13px;color:#2b8c90;transform:scaleX(1.0394);transform-origin:0 0;">NtWaitForSingleObject</div>
<div class="t" style="left:810.9px;top:730px;font-size:11.3px;line-height:13px;color:#484848;transform:scaleX(0.9555);transform-origin:0 0;"> ( </div>
<div class="t" style="left:820.5px;top:730px;font-size:11.3px;line-height:13px;color:#484848;transform:scaleX(0.9561);transform-origin:0 0;">0x00000000000000f0</div>
<div class="t" style="left:924.5px;top:730px;font-size:11.3px;line-height:13px;color:#484848;transform:scaleX(1.1940);transform-origin:0 0;">, </div>
<div class="t" style="left:932px;top:730px;font-size:11.3px;line-height:13px;color:#484848;transform:scaleX(0.8107);transform-origin:0 0;">FALSE</div>
<div class="t" style="left:960.5px;top:730px;font-size:11.3px;line-height:13px;color:#484848;transform:scaleX(1.1144);transform-origin:0 0;">, </div>
<div class="t" style="left:967.5px;top:730px;font-size:11.3px;line-height:13px;color:#9a9a9a;transform:scaleX(0.8866);transform-origin:0 0;">NULL</div>
<div class="t" style="left:993.1px;top:730px;font-size:11.3px;line-height:13px;color:#484848;transform:scaleX(0.7964);transform-origin:0 0;"> )</div>
<div class="t" style="left:1426px;top:730px;font-size:11.3px;line-height:13px;color:#555;transform:scaleX(0.8482);transform-origin:0 0;">STATUS_SUCCESS</div>
<div class="t" style="left:1666px;top:730px;font-size:11.3px;line-height:13px;transform:scaleX(0.9524);transform-origin:0 0;">0.0000535</div>
<div class="a" style="left:468px;top:744px;width:1603px;height:1px;background:#ebebeb"></div>
<div class="a" style="left:468px;top:745px;width:1268px;height:18px;background:#f3fcf9"></div>
<div class="a" style="left:516px;top:745px;width:1px;height:18px;background:#f1f1ec"></div>
<div class="a" style="left:566px;top:745px;width:1px;height:18px;background:#f1f1ec"></div>
<div class="a" style="left:686px;top:745px;width:1px;height:18px;background:#f1f1ec"></div>
<div class="a" style="left:1420px;top:745px;width:1px;height:18px;background:#f1f1ec"></div>
<div class="a" style="left:1520px;top:745px;width:1px;height:18px;background:#f1f1ec"></div>
<div class="a" style="left:1660px;top:745px;width:1px;height:18px;background:#f1f1ec"></div>
<div class="t" style="left:471px;top:749px;font-size:11.3px;line-height:13px;transform:scaleX(0.9500);transform-origin:0 0;">1697</div>
<div class="t" style="left:522px;top:749px;font-size:11.3px;line-height:13px;transform:scaleX(0.9500);transform-origin:0 0;">1</div>
<div class="t" style="left:572px;top:749px;font-size:11.3px;line-height:13px;transform:scaleX(1.0074);transform-origin:0 0;">poc.exe</div>
<div class="t" style="left:692px;top:749px;font-size:11.3px;line-height:13px;color:#2b8c90;transform:scaleX(1.0483);transform-origin:0 0;">NtWriteVirtualMemory</div>
<div class="t" style="left:807.4px;top:749px;font-size:11.3px;line-height:13px;color:#484848;transform:scaleX(0.9900);transform-origin:0 0;"> ( </div>
<div class="t" style="left:817.34640625px;top:749px;font-size:11.3px;line-height:13px;color:#484848;transform:scaleX(0.9445);transform-origin:0 0;">0x0000000000000184</div>
<div class="t" style="left:923.5398437499999px;top:749px;font-size:11.3px;line-height:13px;color:#484848;transform:scaleX(0.9900);transform-origin:0 0;">, </div>
<div class="t" style="left:929.75828125px;top:749px;font-size:11.3px;line-height:13px;color:#9a9a9a;transform:scaleX(0.9596);transform-origin:0 0;">0x00007ff662f74e80</div>
<div class="t" style="left:1028.41421875px;top:749px;font-size:11.3px;line-height:13px;color:#484848;transform:scaleX(0.9900);transform-origin:0 0;">, </div>
<div class="t" style="left:1034.6326562499999px;top:749px;font-size:11.3px;line-height:13px;color:#9a9a9a;transform:scaleX(0.9568);transform-origin:0 0;">0x000000c00005fb96</div>
<div class="t" style="left:1138.6057812499998px;top:749px;font-size:11.3px;line-height:13px;color:#484848;transform:scaleX(0.9900);transform-origin:0 0;">, </div>
<div class="t" style="left:1144.8242187499998px;top:749px;font-size:11.3px;line-height:13px;color:#484848;transform:scaleX(0.9445);transform-origin:0 0;">0x0000000000000132</div>
<div class="t" style="left:1251.0176562499998px;top:749px;font-size:11.3px;line-height:13px;color:#484848;transform:scaleX(0.9900);transform-origin:0 0;">, </div>
<div class="t" style="left:1257.2360937499998px;top:749px;font-size:11.3px;line-height:13px;color:#9a9a9a;transform:scaleX(0.9516);transform-origin:0 0;">0x000000c00005f924</div>
<div class="t" style="left:1360.6439062499999px;top:749px;font-size:11.3px;line-height:13px;color:#484848;transform:scaleX(0.9900);transform-origin:0 0;"> )</div>
<div class="t" style="left:1426px;top:749px;font-size:11.3px;line-height:13px;color:#3a3a3a;transform:scaleX(0.8482);transform-origin:0 0;">STATUS_SUCCESS</div>
<div class="t" style="left:1666px;top:749px;font-size:11.3px;line-height:13px;transform:scaleX(0.9524);transform-origin:0 0;">0.0000096</div>
<div class="a" style="left:468px;top:763px;width:1603px;height:1px;background:#ebebeb"></div>
<div class="a" style="left:468px;top:764px;width:1268px;height:18px;background:#f6f4c6"></div>
<div class="a" style="left:516px;top:764px;width:1px;height:18px;background:#f1f1ec"></div>
<div class="a" style="left:566px;top:764px;width:1px;height:18px;background:#f1f1ec"></div>
<div class="a" style="left:686px;top:764px;width:1px;height:18px;background:#f1f1ec"></div>
<div class="a" style="left:1420px;top:764px;width:1px;height:18px;background:#f1f1ec"></div>
<div class="a" style="left:1520px;top:764px;width:1px;height:18px;background:#f1f1ec"></div>
<div class="a" style="left:1660px;top:764px;width:1px;height:18px;background:#f1f1ec"></div>
<div class="t" style="left:471px;top:768px;font-size:11.3px;line-height:13px;transform:scaleX(0.9500);transform-origin:0 0;">1700</div>
<div class="t" style="left:522px;top:768px;font-size:11.3px;line-height:13px;transform:scaleX(0.9500);transform-origin:0 0;">2</div>
<div class="t" style="left:572px;top:768px;font-size:11.3px;line-height:13px;transform:scaleX(1.0074);transform-origin:0 0;">poc.exe</div>
<div class="t" style="left:692px;top:768px;font-size:11.3px;line-height:13px;color:#2b8c90;transform:scaleX(1.0394);transform-origin:0 0;">NtWaitForSingleObject</div>
<div class="t" style="left:810.9px;top:768px;font-size:11.3px;line-height:13px;color:#484848;transform:scaleX(0.9555);transform-origin:0 0;"> ( </div>
<div class="t" style="left:820.5px;top:768px;font-size:11.3px;line-height:13px;color:#484848;transform:scaleX(0.9561);transform-origin:0 0;">0x00000000000000f0</div>
<div class="t" style="left:924.5px;top:768px;font-size:11.3px;line-height:13px;color:#484848;transform:scaleX(1.1940);transform-origin:0 0;">, </div>
<div class="t" style="left:932px;top:768px;font-size:11.3px;line-height:13px;color:#484848;transform:scaleX(0.8107);transform-origin:0 0;">FALSE</div>
<div class="t" style="left:960.5px;top:768px;font-size:11.3px;line-height:13px;color:#484848;transform:scaleX(1.1144);transform-origin:0 0;">, </div>
<div class="t" style="left:967.5px;top:768px;font-size:11.3px;line-height:13px;color:#9a9a9a;transform:scaleX(0.8866);transform-origin:0 0;">NULL</div>
<div class="t" style="left:993.1px;top:768px;font-size:11.3px;line-height:13px;color:#484848;transform:scaleX(0.7964);transform-origin:0 0;"> )</div>
<div class="t" style="left:1426px;top:768px;font-size:11.3px;line-height:13px;color:#555;transform:scaleX(0.8482);transform-origin:0 0;">STATUS_SUCCESS</div>
<div class="t" style="left:1666px;top:768px;font-size:11.3px;line-height:13px;transform:scaleX(0.9524);transform-origin:0 0;">0.0001586</div>
<div class="a" style="left:468px;top:782px;width:1603px;height:1px;background:#ebebeb"></div>
<div class="a" style="left:468px;top:783px;width:1268px;height:18px;background:#f6f4c6"></div>
<div class="a" style="left:516px;top:783px;width:1px;height:18px;background:#f1f1ec"></div>
<div class="a" style="left:566px;top:783px;width:1px;height:18px;background:#f1f1ec"></div>
<div class="a" style="left:686px;top:783px;width:1px;height:18px;background:#f1f1ec"></div>
<div class="a" style="left:1420px;top:783px;width:1px;height:18px;background:#f1f1ec"></div>
<div class="a" style="left:1520px;top:783px;width:1px;height:18px;background:#f1f1ec"></div>
<div class="a" style="left:1660px;top:783px;width:1px;height:18px;background:#f1f1ec"></div>
<div class="t" style="left:471px;top:787px;font-size:11.3px;line-height:13px;transform:scaleX(0.9500);transform-origin:0 0;">1703</div>
<div class="t" style="left:522px;top:787px;font-size:11.3px;line-height:13px;transform:scaleX(0.9500);transform-origin:0 0;">2</div>
<div class="t" style="left:572px;top:787px;font-size:11.3px;line-height:13px;transform:scaleX(1.0074);transform-origin:0 0;">poc.exe</div>
<div class="t" style="left:692px;top:787px;font-size:11.3px;line-height:13px;color:#2b8c90;transform:scaleX(1.0394);transform-origin:0 0;">NtWaitForSingleObject</div>
<div class="t" style="left:810.9px;top:787px;font-size:11.3px;line-height:13px;color:#484848;transform:scaleX(0.9555);transform-origin:0 0;"> ( </div>
<div class="t" style="left:820.5px;top:787px;font-size:11.3px;line-height:13px;color:#484848;transform:scaleX(0.9561);transform-origin:0 0;">0x00000000000000f0</div>
<div class="t" style="left:924.5px;top:787px;font-size:11.3px;line-height:13px;color:#484848;transform:scaleX(1.1940);transform-origin:0 0;">, </div>
<div class="t" style="left:932px;top:787px;font-size:11.3px;line-height:13px;color:#484848;transform:scaleX(0.8107);transform-origin:0 0;">FALSE</div>
<div class="t" style="left:960.5px;top:787px;font-size:11.3px;line-height:13px;color:#484848;transform:scaleX(1.1144);transform-origin:0 0;">, </div>
<div class="t" style="left:967.5px;top:787px;font-size:11.3px;line-height:13px;color:#9a9a9a;transform:scaleX(0.8866);transform-origin:0 0;">NULL</div>
<div class="t" style="left:993.1px;top:787px;font-size:11.3px;line-height:13px;color:#484848;transform:scaleX(0.7964);transform-origin:0 0;"> )</div>
<div class="t" style="left:1426px;top:787px;font-size:11.3px;line-height:13px;color:#555;transform:scaleX(0.8482);transform-origin:0 0;">STATUS_SUCCESS</div>
<div class="t" style="left:1666px;top:787px;font-size:11.3px;line-height:13px;transform:scaleX(0.9524);transform-origin:0 0;">0.0001608</div>
<div class="a" style="left:468px;top:801px;width:1603px;height:1px;background:#ebebeb"></div>
<div class="a" style="left:468px;top:802px;width:1268px;height:18px;background:#f3fcf9"></div>
<div class="a" style="left:516px;top:802px;width:1px;height:18px;background:#f1f1ec"></div>
<div class="a" style="left:566px;top:802px;width:1px;height:18px;background:#f1f1ec"></div>
<div class="a" style="left:686px;top:802px;width:1px;height:18px;background:#f1f1ec"></div>
<div class="a" style="left:1420px;top:802px;width:1px;height:18px;background:#f1f1ec"></div>
<div class="a" style="left:1520px;top:802px;width:1px;height:18px;background:#f1f1ec"></div>
<div class="a" style="left:1660px;top:802px;width:1px;height:18px;background:#f1f1ec"></div>
<div class="t" style="left:471px;top:806px;font-size:11.3px;line-height:13px;transform:scaleX(0.9500);transform-origin:0 0;">1704</div>
<div class="t" style="left:522px;top:806px;font-size:11.3px;line-height:13px;transform:scaleX(0.9500);transform-origin:0 0;">1</div>
<div class="t" style="left:572px;top:806px;font-size:11.3px;line-height:13px;transform:scaleX(1.0074);transform-origin:0 0;">poc.exe</div>
<div class="t" style="left:692px;top:806px;font-size:11.3px;line-height:13px;color:#2b8c90;transform:scaleX(1.0266);transform-origin:0 0;">NtProtectVirtualMemory</div>
<div class="t" style="left:814.9px;top:806px;font-size:11.3px;line-height:13px;color:#484848;transform:scaleX(0.9900);transform-origin:0 0;"> ( </div>
<div class="t" style="left:824.84640625px;top:806px;font-size:11.3px;line-height:13px;color:#484848;transform:scaleX(0.9445);transform-origin:0 0;">0x0000000000000184</div>
<div class="t" style="left:931.0398437499999px;top:806px;font-size:11.3px;line-height:13px;color:#484848;transform:scaleX(0.9900);transform-origin:0 0;">, </div>
<div class="t" style="left:937.25828125px;top:806px;font-size:11.3px;line-height:13px;color:#9a9a9a;transform:scaleX(0.9516);transform-origin:0 0;">0x000000c00005f940</div>
<div class="t" style="left:1040.66609375px;top:806px;font-size:11.3px;line-height:13px;color:#484848;transform:scaleX(0.9900);transform-origin:0 0;">, </div>
<div class="t" style="left:1046.88453125px;top:806px;font-size:11.3px;line-height:13px;color:#9a9a9a;transform:scaleX(0.9568);transform-origin:0 0;">0x000000c00005f8d8</div>
<div class="t" style="left:1150.85765625px;top:806px;font-size:11.3px;line-height:13px;color:#484848;transform:scaleX(0.9900);transform-origin:0 0;">, </div>
<div class="t" style="left:1157.07609375px;top:806px;font-size:11.3px;line-height:13px;color:#484848;transform:scaleX(0.8657);transform-origin:0 0;">PAGE_EXECUTE_READ</div>
<div class="t" style="left:1267.72046875px;top:806px;font-size:11.3px;line-height:13px;color:#484848;transform:scaleX(0.9900);transform-origin:0 0;">, </div>
<div class="t" style="left:1273.93890625px;top:806px;font-size:11.3px;line-height:13px;color:#9a9a9a;transform:scaleX(0.9516);transform-origin:0 0;">0x000000c00005f914</div>
<div class="t" style="left:1377.34671875px;top:806px;font-size:11.3px;line-height:13px;color:#484848;transform:scaleX(0.9900);transform-origin:0 0;"> )</div>
<div class="t" style="left:1426px;top:806px;font-size:11.3px;line-height:13px;color:#3a3a3a;transform:scaleX(0.8482);transform-origin:0 0;">STATUS_SUCCESS</div>
<div class="t" style="left:1666px;top:806px;font-size:11.3px;line-height:13px;transform:scaleX(0.9524);transform-origin:0 0;">0.0000263</div>
<div class="a" style="left:468px;top:820px;width:1603px;height:1px;background:#ebebeb"></div>
<div class="a" style="left:468px;top:821px;width:1268px;height:18px;background:#f6f4c6"></div>
<div class="a" style="left:516px;top:821px;width:1px;height:18px;background:#f1f1ec"></div>
<div class="a" style="left:566px;top:821px;width:1px;height:18px;background:#f1f1ec"></div>
<div class="a" style="left:686px;top:821px;width:1px;height:18px;background:#f1f1ec"></div>
<div class="a" style="left:1420px;top:821px;width:1px;height:18px;background:#f1f1ec"></div>
<div class="a" style="left:1520px;top:821px;width:1px;height:18px;background:#f1f1ec"></div>
<div class="a" style="left:1660px;top:821px;width:1px;height:18px;background:#f1f1ec"></div>
<div class="t" style="left:471px;top:825px;font-size:11.3px;line-height:13px;transform:scaleX(0.9500);transform-origin:0 0;">1706</div>
<div class="t" style="left:522px;top:825px;font-size:11.3px;line-height:13px;transform:scaleX(0.9500);transform-origin:0 0;">2</div>
<div class="t" style="left:572px;top:825px;font-size:11.3px;line-height:13px;transform:scaleX(1.0074);transform-origin:0 0;">poc.exe</div>
<div class="t" style="left:692px;top:825px;font-size:11.3px;line-height:13px;color:#2b8c90;transform:scaleX(1.0394);transform-origin:0 0;">NtWaitForSingleObject</div>
<div class="t" style="left:810.9px;top:825px;font-size:11.3px;line-height:13px;color:#484848;transform:scaleX(0.9555);transform-origin:0 0;"> ( </div>
<div class="t" style="left:820.5px;top:825px;font-size:11.3px;line-height:13px;color:#484848;transform:scaleX(0.9561);transform-origin:0 0;">0x00000000000000f0</div>
<div class="t" style="left:924.5px;top:825px;font-size:11.3px;line-height:13px;color:#484848;transform:scaleX(1.1940);transform-origin:0 0;">, </div>
<div class="t" style="left:932px;top:825px;font-size:11.3px;line-height:13px;color:#484848;transform:scaleX(0.8107);transform-origin:0 0;">FALSE</div>
<div class="t" style="left:960.5px;top:825px;font-size:11.3px;line-height:13px;color:#484848;transform:scaleX(1.1144);transform-origin:0 0;">, </div>
<div class="t" style="left:967.5px;top:825px;font-size:11.3px;line-height:13px;color:#9a9a9a;transform:scaleX(0.8866);transform-origin:0 0;">NULL</div>
<div class="t" style="left:993.1px;top:825px;font-size:11.3px;line-height:13px;color:#484848;transform:scaleX(0.7964);transform-origin:0 0;"> )</div>
<div class="t" style="left:1426px;top:825px;font-size:11.3px;line-height:13px;color:#555;transform:scaleX(0.8482);transform-origin:0 0;">STATUS_SUCCESS</div>
<div class="t" style="left:1666px;top:825px;font-size:11.3px;line-height:13px;transform:scaleX(0.9524);transform-origin:0 0;">0.0000559</div>
<div class="a" style="left:468px;top:839px;width:1603px;height:1px;background:#ebebeb"></div>
<div class="a" style="left:468px;top:840px;width:1268px;height:18px;background:#f6f4c6"></div>
<div class="a" style="left:516px;top:840px;width:1px;height:18px;background:#f1f1ec"></div>
<div class="a" style="left:566px;top:840px;width:1px;height:18px;background:#f1f1ec"></div>
<div class="a" style="left:686px;top:840px;width:1px;height:18px;background:#f1f1ec"></div>
<div class="a" style="left:1420px;top:840px;width:1px;height:18px;background:#f1f1ec"></div>
<div class="a" style="left:1520px;top:840px;width:1px;height:18px;background:#f1f1ec"></div>
<div class="a" style="left:1660px;top:840px;width:1px;height:18px;background:#f1f1ec"></div>
<div class="t" style="left:471px;top:844px;font-size:11.3px;line-height:13px;transform:scaleX(0.9500);transform-origin:0 0;">1710</div>
<div class="t" style="left:522px;top:844px;font-size:11.3px;line-height:13px;transform:scaleX(0.9500);transform-origin:0 0;">2</div>
<div class="t" style="left:572px;top:844px;font-size:11.3px;line-height:13px;transform:scaleX(1.0074);transform-origin:0 0;">poc.exe</div>
<div class="t" style="left:692px;top:844px;font-size:11.3px;line-height:13px;color:#2b8c90;transform:scaleX(1.0394);transform-origin:0 0;">NtWaitForSingleObject</div>
<div class="t" style="left:810.9px;top:844px;font-size:11.3px;line-height:13px;color:#484848;transform:scaleX(0.9555);transform-origin:0 0;"> ( </div>
<div class="t" style="left:820.5px;top:844px;font-size:11.3px;line-height:13px;color:#484848;transform:scaleX(0.9561);transform-origin:0 0;">0x00000000000000f0</div>
<div class="t" style="left:924.5px;top:844px;font-size:11.3px;line-height:13px;color:#484848;transform:scaleX(1.1940);transform-origin:0 0;">, </div>
<div class="t" style="left:932px;top:844px;font-size:11.3px;line-height:13px;color:#484848;transform:scaleX(0.8107);transform-origin:0 0;">FALSE</div>
<div class="t" style="left:960.5px;top:844px;font-size:11.3px;line-height:13px;color:#484848;transform:scaleX(1.1144);transform-origin:0 0;">, </div>
<div class="t" style="left:967.5px;top:844px;font-size:11.3px;line-height:13px;color:#9a9a9a;transform:scaleX(0.8866);transform-origin:0 0;">NULL</div>
<div class="t" style="left:993.1px;top:844px;font-size:11.3px;line-height:13px;color:#484848;transform:scaleX(0.7964);transform-origin:0 0;"> )</div>
<div class="t" style="left:1426px;top:844px;font-size:11.3px;line-height:13px;color:#555;transform:scaleX(0.8482);transform-origin:0 0;">STATUS_SUCCESS</div>
<div class="t" style="left:1666px;top:844px;font-size:11.3px;line-height:13px;transform:scaleX(0.9524);transform-origin:0 0;">0.0000419</div>
<div class="a" style="left:468px;top:858px;width:1603px;height:1px;background:#ebebeb"></div>
<div class="a" style="left:468px;top:859px;width:1268px;height:18px;background:#f6f4c6"></div>
<div class="a" style="left:516px;top:859px;width:1px;height:18px;background:#f1f1ec"></div>
<div class="a" style="left:566px;top:859px;width:1px;height:18px;background:#f1f1ec"></div>
<div class="a" style="left:686px;top:859px;width:1px;height:18px;background:#f1f1ec"></div>
<div class="a" style="left:1420px;top:859px;width:1px;height:18px;background:#f1f1ec"></div>
<div class="a" style="left:1520px;top:859px;width:1px;height:18px;background:#f1f1ec"></div>
<div class="a" style="left:1660px;top:859px;width:1px;height:18px;background:#f1f1ec"></div>
<div class="t" style="left:471px;top:863px;font-size:11.3px;line-height:13px;transform:scaleX(0.9500);transform-origin:0 0;">1712</div>
<div class="t" style="left:522px;top:863px;font-size:11.3px;line-height:13px;transform:scaleX(0.9500);transform-origin:0 0;">2</div>
<div class="t" style="left:572px;top:863px;font-size:11.3px;line-height:13px;transform:scaleX(1.0074);transform-origin:0 0;">poc.exe</div>
<div class="t" style="left:692px;top:863px;font-size:11.3px;line-height:13px;color:#2b8c90;transform:scaleX(1.0394);transform-origin:0 0;">NtWaitForSingleObject</div>
<div class="t" style="left:810.9px;top:863px;font-size:11.3px;line-height:13px;color:#484848;transform:scaleX(0.9555);transform-origin:0 0;"> ( </div>
<div class="t" style="left:820.5px;top:863px;font-size:11.3px;line-height:13px;color:#484848;transform:scaleX(0.9561);transform-origin:0 0;">0x00000000000000f0</div>
<div class="t" style="left:924.5px;top:863px;font-size:11.3px;line-height:13px;color:#484848;transform:scaleX(1.1940);transform-origin:0 0;">, </div>
<div class="t" style="left:932px;top:863px;font-size:11.3px;line-height:13px;color:#484848;transform:scaleX(0.8107);transform-origin:0 0;">FALSE</div>
<div class="t" style="left:960.5px;top:863px;font-size:11.3px;line-height:13px;color:#484848;transform:scaleX(1.1144);transform-origin:0 0;">, </div>
<div class="t" style="left:967.5px;top:863px;font-size:11.3px;line-height:13px;color:#9a9a9a;transform:scaleX(0.8866);transform-origin:0 0;">NULL</div>
<div class="t" style="left:993.1px;top:863px;font-size:11.3px;line-height:13px;color:#484848;transform:scaleX(0.7964);transform-origin:0 0;"> )</div>
<div class="t" style="left:1426px;top:863px;font-size:11.3px;line-height:13px;color:#555;transform:scaleX(0.8482);transform-origin:0 0;">STATUS_SUCCESS</div>
<div class="t" style="left:1666px;top:863px;font-size:11.3px;line-height:13px;transform:scaleX(0.9834);transform-origin:0 0;">0.0011194</div>
<div class="a" style="left:468px;top:877px;width:1603px;height:1px;background:#ebebeb"></div>
<div class="a" style="left:468px;top:878px;width:1268px;height:18px;background:#f6f4c6"></div>
<div class="a" style="left:516px;top:878px;width:1px;height:18px;background:#f1f1ec"></div>
<div class="a" style="left:566px;top:878px;width:1px;height:18px;background:#f1f1ec"></div>
<div class="a" style="left:686px;top:878px;width:1px;height:18px;background:#f1f1ec"></div>
<div class="a" style="left:1420px;top:878px;width:1px;height:18px;background:#f1f1ec"></div>
<div class="a" style="left:1520px;top:878px;width:1px;height:18px;background:#f1f1ec"></div>
<div class="a" style="left:1660px;top:878px;width:1px;height:18px;background:#f1f1ec"></div>
<div class="t" style="left:471px;top:882px;font-size:11.3px;line-height:13px;transform:scaleX(0.9500);transform-origin:0 0;">1716</div>
<div class="t" style="left:522px;top:882px;font-size:11.3px;line-height:13px;transform:scaleX(0.9500);transform-origin:0 0;">2</div>
<div class="t" style="left:572px;top:882px;font-size:11.3px;line-height:13px;transform:scaleX(1.0074);transform-origin:0 0;">poc.exe</div>
<div class="t" style="left:692px;top:882px;font-size:11.3px;line-height:13px;color:#2b8c90;transform:scaleX(1.0394);transform-origin:0 0;">NtWaitForSingleObject</div>
<div class="t" style="left:810.9px;top:882px;font-size:11.3px;line-height:13px;color:#484848;transform:scaleX(0.9555);transform-origin:0 0;"> ( </div>
<div class="t" style="left:820.5px;top:882px;font-size:11.3px;line-height:13px;color:#484848;transform:scaleX(0.9561);transform-origin:0 0;">0x00000000000000f0</div>
<div class="t" style="left:924.5px;top:882px;font-size:11.3px;line-height:13px;color:#484848;transform:scaleX(1.1940);transform-origin:0 0;">, </div>
<div class="t" style="left:932px;top:882px;font-size:11.3px;line-height:13px;color:#484848;transform:scaleX(0.8107);transform-origin:0 0;">FALSE</div>
<div class="t" style="left:960.5px;top:882px;font-size:11.3px;line-height:13px;color:#484848;transform:scaleX(1.1144);transform-origin:0 0;">, </div>
<div class="t" style="left:967.5px;top:882px;font-size:11.3px;line-height:13px;color:#9a9a9a;transform:scaleX(0.8866);transform-origin:0 0;">NULL</div>
<div class="t" style="left:993.1px;top:882px;font-size:11.3px;line-height:13px;color:#484848;transform:scaleX(0.7964);transform-origin:0 0;"> )</div>
<div class="t" style="left:1426px;top:882px;font-size:11.3px;line-height:13px;color:#555;transform:scaleX(0.8482);transform-origin:0 0;">STATUS_SUCCESS</div>
<div class="t" style="left:1666px;top:882px;font-size:11.3px;line-height:13px;transform:scaleX(0.9524);transform-origin:0 0;">0.0006093</div>
<div class="a" style="left:468px;top:896px;width:1603px;height:1px;background:#ebebeb"></div>
<div class="a" style="left:468px;top:897px;width:1268px;height:18px;background:#f3fcf9"></div>
<div class="a" style="left:516px;top:897px;width:1px;height:18px;background:#f1f1ec"></div>
<div class="a" style="left:566px;top:897px;width:1px;height:18px;background:#f1f1ec"></div>
<div class="a" style="left:686px;top:897px;width:1px;height:18px;background:#f1f1ec"></div>
<div class="a" style="left:1420px;top:897px;width:1px;height:18px;background:#f1f1ec"></div>
<div class="a" style="left:1520px;top:897px;width:1px;height:18px;background:#f1f1ec"></div>
<div class="a" style="left:1660px;top:897px;width:1px;height:18px;background:#f1f1ec"></div>
<div class="t" style="left:471px;top:901px;font-size:11.3px;line-height:13px;transform:scaleX(0.9500);transform-origin:0 0;">1718</div>
<div class="t" style="left:522px;top:901px;font-size:11.3px;line-height:13px;transform:scaleX(0.9500);transform-origin:0 0;">1</div>
<div class="t" style="left:572px;top:901px;font-size:11.3px;line-height:13px;transform:scaleX(1.0074);transform-origin:0 0;">poc.exe</div>
<div class="t" style="left:692px;top:901px;font-size:11.3px;line-height:13px;color:#2b8c90;transform:scaleX(0.9904);transform-origin:0 0;">NtResumeThread</div>
<div class="t" style="left:780.3px;top:901px;font-size:11.3px;line-height:13px;color:#484848;transform:scaleX(0.9900);transform-origin:0 0;"> ( </div>
<div class="t" style="left:790.24640625px;top:901px;font-size:11.3px;line-height:13px;color:#484848;transform:scaleX(0.9445);transform-origin:0 0;">0x0000000000000180</div>
<div class="t" style="left:896.4398437499999px;top:901px;font-size:11.3px;line-height:13px;color:#484848;transform:scaleX(0.9900);transform-origin:0 0;">, </div>
<div class="t" style="left:902.65828125px;top:901px;font-size:11.3px;line-height:13px;color:#9a9a9a;transform:scaleX(0.9490);transform-origin:0 0;">0x000000c000106120</div>
<div class="t" style="left:1008.76703125px;top:901px;font-size:11.3px;line-height:13px;color:#484848;transform:scaleX(0.9900);transform-origin:0 0;"> )</div>
<div class="t" style="left:1426px;top:901px;font-size:11.3px;line-height:13px;color:#3a3a3a;transform:scaleX(0.8482);transform-origin:0 0;">STATUS_SUCCESS</div>
<div class="t" style="left:1666px;top:901px;font-size:11.3px;line-height:13px;transform:scaleX(0.9524);transform-origin:0 0;">0.0000028</div>
<div class="a" style="left:468px;top:915px;width:1603px;height:1px;background:#ebebeb"></div>
<div class="a" style="left:468px;top:916px;width:1268px;height:18px;background:#f6f4c6"></div>
<div class="a" style="left:516px;top:916px;width:1px;height:18px;background:#f1f1ec"></div>
<div class="a" style="left:566px;top:916px;width:1px;height:18px;background:#f1f1ec"></div>
<div class="a" style="left:686px;top:916px;width:1px;height:18px;background:#f1f1ec"></div>
<div class="a" style="left:1420px;top:916px;width:1px;height:18px;background:#f1f1ec"></div>
<div class="a" style="left:1520px;top:916px;width:1px;height:18px;background:#f1f1ec"></div>
<div class="a" style="left:1660px;top:916px;width:1px;height:18px;background:#f1f1ec"></div>
<div class="t" style="left:471px;top:920px;font-size:11.3px;line-height:13px;transform:scaleX(0.9500);transform-origin:0 0;">1722</div>
<div class="t" style="left:522px;top:920px;font-size:11.3px;line-height:13px;transform:scaleX(0.9500);transform-origin:0 0;">2</div>
<div class="t" style="left:572px;top:920px;font-size:11.3px;line-height:13px;transform:scaleX(1.0074);transform-origin:0 0;">poc.exe</div>
<div class="t" style="left:692px;top:920px;font-size:11.3px;line-height:13px;color:#2b8c90;transform:scaleX(1.0394);transform-origin:0 0;">NtWaitForSingleObject</div>
<div class="t" style="left:810.9px;top:920px;font-size:11.3px;line-height:13px;color:#484848;transform:scaleX(0.9555);transform-origin:0 0;"> ( </div>
<div class="t" style="left:820.5px;top:920px;font-size:11.3px;line-height:13px;color:#484848;transform:scaleX(0.9561);transform-origin:0 0;">0x00000000000000f0</div>
<div class="t" style="left:924.5px;top:920px;font-size:11.3px;line-height:13px;color:#484848;transform:scaleX(1.1940);transform-origin:0 0;">, </div>
<div class="t" style="left:932px;top:920px;font-size:11.3px;line-height:13px;color:#484848;transform:scaleX(0.8107);transform-origin:0 0;">FALSE</div>
<div class="t" style="left:960.5px;top:920px;font-size:11.3px;line-height:13px;color:#484848;transform:scaleX(1.1144);transform-origin:0 0;">, </div>
<div class="t" style="left:967.5px;top:920px;font-size:11.3px;line-height:13px;color:#9a9a9a;transform:scaleX(0.8866);transform-origin:0 0;">NULL</div>
<div class="t" style="left:993.1px;top:920px;font-size:11.3px;line-height:13px;color:#484848;transform:scaleX(0.7964);transform-origin:0 0;"> )</div>
<div class="t" style="left:1426px;top:920px;font-size:11.3px;line-height:13px;color:#555;transform:scaleX(0.8482);transform-origin:0 0;">STATUS_SUCCESS</div>
<div class="t" style="left:1666px;top:920px;font-size:11.3px;line-height:13px;transform:scaleX(0.9524);transform-origin:0 0;">0.0000009</div>
<div class="a" style="left:468px;top:934px;width:1603px;height:1px;background:#ebebeb"></div>
<div class="a" style="left:468px;top:935px;width:1268px;height:18px;background:#f6f4c6"></div>
<div class="a" style="left:516px;top:935px;width:1px;height:18px;background:#f1f1ec"></div>
<div class="a" style="left:566px;top:935px;width:1px;height:18px;background:#f1f1ec"></div>
<div class="a" style="left:686px;top:935px;width:1px;height:18px;background:#f1f1ec"></div>
<div class="a" style="left:1420px;top:935px;width:1px;height:18px;background:#f1f1ec"></div>
<div class="a" style="left:1520px;top:935px;width:1px;height:18px;background:#f1f1ec"></div>
<div class="a" style="left:1660px;top:935px;width:1px;height:18px;background:#f1f1ec"></div>
<div class="t" style="left:471px;top:939px;font-size:11.3px;line-height:13px;transform:scaleX(0.9500);transform-origin:0 0;">1724</div>
<div class="t" style="left:522px;top:939px;font-size:11.3px;line-height:13px;transform:scaleX(0.9500);transform-origin:0 0;">2</div>
<div class="t" style="left:572px;top:939px;font-size:11.3px;line-height:13px;transform:scaleX(1.0074);transform-origin:0 0;">poc.exe</div>
<div class="t" style="left:692px;top:939px;font-size:11.3px;line-height:13px;color:#2b8c90;transform:scaleX(1.0394);transform-origin:0 0;">NtWaitForSingleObject</div>
<div class="t" style="left:810.9px;top:939px;font-size:11.3px;line-height:13px;color:#484848;transform:scaleX(0.9555);transform-origin:0 0;"> ( </div>
<div class="t" style="left:820.5px;top:939px;font-size:11.3px;line-height:13px;color:#484848;transform:scaleX(0.9561);transform-origin:0 0;">0x00000000000000f0</div>
<div class="t" style="left:924.5px;top:939px;font-size:11.3px;line-height:13px;color:#484848;transform:scaleX(1.1940);transform-origin:0 0;">, </div>
<div class="t" style="left:932px;top:939px;font-size:11.3px;line-height:13px;color:#484848;transform:scaleX(0.8107);transform-origin:0 0;">FALSE</div>
<div class="t" style="left:960.5px;top:939px;font-size:11.3px;line-height:13px;color:#484848;transform:scaleX(1.1144);transform-origin:0 0;">, </div>
<div class="t" style="left:967.5px;top:939px;font-size:11.3px;line-height:13px;color:#9a9a9a;transform:scaleX(0.8866);transform-origin:0 0;">NULL</div>
<div class="t" style="left:993.1px;top:939px;font-size:11.3px;line-height:13px;color:#484848;transform:scaleX(0.7964);transform-origin:0 0;"> )</div>
<div class="t" style="left:1426px;top:939px;font-size:11.3px;line-height:13px;color:#555;transform:scaleX(0.8482);transform-origin:0 0;">STATUS_SUCCESS</div>
<div class="t" style="left:1666px;top:939px;font-size:11.3px;line-height:13px;transform:scaleX(0.9524);transform-origin:0 0;">0.0008191</div>
<div class="a" style="left:468px;top:953px;width:1603px;height:1px;background:#ebebeb"></div>
<div class="a" style="left:516px;top:954px;width:1px;height:13px;background:#ececec"></div>
<div class="a" style="left:566px;top:954px;width:1px;height:13px;background:#ececec"></div>
<div class="a" style="left:686px;top:954px;width:1px;height:13px;background:#ececec"></div>
<div class="a" style="left:1420px;top:954px;width:1px;height:13px;background:#ececec"></div>
<div class="a" style="left:1520px;top:954px;width:1px;height:13px;background:#ececec"></div>
<div class="a" style="left:1660px;top:954px;width:1px;height:13px;background:#ececec"></div>
<div class="a" style="left:1736px;top:954px;width:1px;height:13px;background:#ececec"></div>
<div class="ptitle" style="left:467px;top:972px;width:1044px;"></div>
<div class="t" style="left:471px;top:976px;font-size:11.3px;line-height:13px;color:#f7f7f7;transform:scaleX(1.0051);transform-origin:0 0;">Parameters: NtQueryInformationProcess (Ntdll.dll)</div>
<svg style="left:1463px;top:980px" width="9" height="5" viewBox="0 0 9 5"><path d="M0 0h9l-4.5 5z" fill="#fff"/></svg>
<svg style="left:1481px;top:978px" width="7" height="9" viewBox="0 0 7 9"><path d="M1.5 0.5h4v5h-4z" fill="none" stroke="#fff" stroke-width="1.3"/><path d="M0 5.5h7" stroke="#fff" stroke-width="1.2"/><path d="M3.5 6v3" stroke="#fff" stroke-width="1.2"/></svg>
<svg style="left:1497px;top:978px" width="8" height="8" viewBox="0 0 8 8"><path d="M0.5 0.5l7 7M7.5 0.5l-7 7" stroke="#fff" stroke-width="1.5"/></svg>
<div class="a" style="left:467px;top:991px;width:1044px;height:181px;background:#fff"></div>
<div class="a" style="left:467px;top:992px;width:1044px;height:1px;background:#a0a0a0"></div>
<div class="a" style="left:467px;top:992px;width:1px;height:180px;background:#a0a0a0"></div>
<div class="a" style="left:467px;top:1171px;width:1044px;height:1px;background:#a0a0a0"></div>
<div class="a" style="left:953px;top:991px;width:558px;height:1px;background:#000"></div>
<div class="t" style="left:473px;top:999px;font-size:11.3px;line-height:13px;transform:scaleX(0.9900);transform-origin:0 0;">#</div>
<div class="t" style="left:498px;top:999px;font-size:11.3px;line-height:13px;transform:scaleX(1.0158);transform-origin:0 0;">Type</div>
<div class="t" style="left:707px;top:999px;font-size:11.3px;line-height:13px;transform:scaleX(0.9913);transform-origin:0 0;">Name</div>
<div class="t" style="left:908px;top:999px;font-size:11.3px;line-height:13px;transform:scaleX(0.9893);transform-origin:0 0;">Pre-Call Value</div>
<div class="t" style="left:1108px;top:999px;font-size:11.3px;line-height:13px;transform:scaleX(0.9927);transform-origin:0 0;">Post-Call Value</div>
<svg style="left:1285px;top:1000px" width="13" height="13" viewBox="0 0 13 13"><rect x="0.5" y="0.5" width="12" height="12" fill="url(#winb)" stroke="#9aaac8"/><path d="M12.5 0.5v12h-12" fill="none" stroke="#2a3a60"/><path d="M3 3.5h1M5 3.5h4M6 5.5h1M8 5.5h3M6 7.5h1M8 7.5h3M3 9.5h1M5 9.5h4" stroke="#6a7aa8"/></svg>
<div class="a" style="left:492px;top:993px;width:1px;height:23px;background:#e8e8e8"></div>
<div class="a" style="left:702px;top:993px;width:1px;height:23px;background:#e8e8e8"></div>
<div class="a" style="left:902px;top:993px;width:1px;height:23px;background:#e8e8e8"></div>
<div class="a" style="left:1102px;top:993px;width:1px;height:23px;background:#e8e8e8"></div>
<div class="a" style="left:1301px;top:993px;width:1px;height:23px;background:#e8e8e8"></div>
<div class="t" style="left:473px;top:1022px;font-size:11.3px;line-height:13px;transform:scaleX(0.9500);transform-origin:0 0;">1</div>
<div class="t" style="left:499px;top:1022px;font-size:11.3px;line-height:13px;transform:scaleX(0.8600);transform-origin:0 0;">HANDLE</div>
<svg style="left:727px;top:1021px" width="10" height="13" viewBox="0 0 10 13"><path d="M5.3 1.1L9 4.2 4 8 0.9 5.8z" fill="#90c4f6"/><path d="M0.9 5.8L4 8 4.3 11.8 0.9 8z" fill="#4a8ee0"/><path d="M9 4.2L9 7.7 4.3 11.8 4 8z" fill="#0c3aa8"/></svg>
<div class="t" style="left:742px;top:1021px;font-size:11.3px;line-height:13px;">ProcessHandle</div>
<div class="t" style="left:908px;top:1022px;font-size:11.3px;line-height:13px;transform:scaleX(0.9445);transform-origin:0 0;">0x0000000000000184</div>
<div class="t" style="left:1108px;top:1022px;font-size:11.3px;line-height:13px;transform:scaleX(0.9445);transform-origin:0 0;">0x0000000000000184</div>
<div class="a" style="left:468px;top:1037px;width:1043px;height:1px;background:#ebebeb"></div>
<div class="a" style="left:493px;top:1016px;width:1px;height:21px;background:#ececec"></div>
<div class="a" style="left:703px;top:1016px;width:1px;height:21px;background:#ececec"></div>
<div class="a" style="left:903px;top:1016px;width:1px;height:21px;background:#ececec"></div>
<div class="a" style="left:1103px;top:1016px;width:1px;height:21px;background:#ececec"></div>
<div class="a" style="left:1303px;top:1016px;width:1px;height:21px;background:#ececec"></div>
<div class="t" style="left:473px;top:1043px;font-size:11.3px;line-height:13px;transform:scaleX(0.9500);transform-origin:0 0;">2</div>
<div class="t" style="left:499px;top:1043px;font-size:11.3px;line-height:13px;transform:scaleX(0.8600);transform-origin:0 0;">PROCESSINFOCLASS</div>
<svg style="left:727px;top:1042px" width="10" height="13" viewBox="0 0 10 13"><path d="M5.3 1.1L9 4.2 4 8 0.9 5.8z" fill="#90c4f6"/><path d="M0.9 5.8L4 8 4.3 11.8 0.9 8z" fill="#4a8ee0"/><path d="M9 4.2L9 7.7 4.3 11.8 4 8z" fill="#0c3aa8"/></svg>
<div class="t" style="left:742px;top:1042px;font-size:11.3px;line-height:13px;transform:scaleX(1.0130);transform-origin:0 0;">ProcessInformationClass</div>
<div class="t" style="left:908px;top:1043px;font-size:11.3px;line-height:13px;transform:scaleX(1.0138);transform-origin:0 0;">ProcessBasicInformation</div>
<div class="t" style="left:1108px;top:1043px;font-size:11.3px;line-height:13px;transform:scaleX(1.0138);transform-origin:0 0;">ProcessBasicInformation</div>
<div class="a" style="left:468px;top:1058px;width:1043px;height:1px;background:#ebebeb"></div>
<div class="a" style="left:493px;top:1037px;width:1px;height:21px;background:#ececec"></div>
<div class="a" style="left:703px;top:1037px;width:1px;height:21px;background:#ececec"></div>
<div class="a" style="left:903px;top:1037px;width:1px;height:21px;background:#ececec"></div>
<div class="a" style="left:1103px;top:1037px;width:1px;height:21px;background:#ececec"></div>
<div class="a" style="left:1303px;top:1037px;width:1px;height:21px;background:#ececec"></div>
<div class="t" style="left:473px;top:1064px;font-size:11.3px;line-height:13px;transform:scaleX(0.9500);transform-origin:0 0;">3</div>
<div class="t" style="left:499px;top:1064px;font-size:11.3px;line-height:13px;transform:scaleX(0.8600);transform-origin:0 0;">PVOID</div>
<svg style="left:709px;top:1064px" width="9" height="9" viewBox="0 0 9 9"><rect x="0.5" y="0.5" width="8" height="8" fill="url(#winb)" stroke="#9aaac8"/><path d="M8.5 0.5v8h-8" fill="none" stroke="#2a3a58"/><path d="M2 4.5h5M4.5 2v5" stroke="#2a3a58"/></svg>
<svg style="left:727px;top:1063px" width="10" height="13" viewBox="0 0 10 13"><path d="M5.3 1.1L9 4.2 4 8 0.9 5.8z" fill="#90c4f6"/><path d="M0.9 5.8L4 8 4.3 11.8 0.9 8z" fill="#4a8ee0"/><path d="M9 4.2L9 7.7 4.3 11.8 4 8z" fill="#0c3aa8"/></svg>
<div class="t" style="left:742px;top:1063px;font-size:11.3px;line-height:13px;transform:scaleX(1.0203);transform-origin:0 0;">ProcessInformation</div>
<div class="t" style="left:908px;top:1064px;font-size:11.3px;line-height:13px;transform:scaleX(0.9516);transform-origin:0 0;">0x000000c00005f988</div>
<div class="t" style="left:1108px;top:1064px;font-size:11.3px;line-height:13px;transform:scaleX(0.9516);transform-origin:0 0;">0x000000c00005f988</div>
<div class="a" style="left:468px;top:1079px;width:1043px;height:1px;background:#ebebeb"></div>
<div class="a" style="left:493px;top:1058px;width:1px;height:21px;background:#ececec"></div>
<div class="a" style="left:703px;top:1058px;width:1px;height:21px;background:#ececec"></div>
<div class="a" style="left:903px;top:1058px;width:1px;height:21px;background:#ececec"></div>
<div class="a" style="left:1103px;top:1058px;width:1px;height:21px;background:#ececec"></div>
<div class="a" style="left:1303px;top:1058px;width:1px;height:21px;background:#ececec"></div>
<div class="t" style="left:473px;top:1085px;font-size:11.3px;line-height:13px;transform:scaleX(0.9500);transform-origin:0 0;">4</div>
<div class="t" style="left:499px;top:1085px;font-size:11.3px;line-height:13px;transform:scaleX(0.8600);transform-origin:0 0;">ULONG</div>
<svg style="left:727px;top:1084px" width="10" height="13" viewBox="0 0 10 13"><path d="M5.3 1.1L9 4.2 4 8 0.9 5.8z" fill="#90c4f6"/><path d="M0.9 5.8L4 8 4.3 11.8 0.9 8z" fill="#4a8ee0"/><path d="M9 4.2L9 7.7 4.3 11.8 4 8z" fill="#0c3aa8"/></svg>
<div class="t" style="left:742px;top:1084px;font-size:11.3px;line-height:13px;transform:scaleX(1.0169);transform-origin:0 0;">ProcessInformationLength</div>
<div class="t" style="left:908px;top:1085px;font-size:11.3px;line-height:13px;transform:scaleX(0.9500);transform-origin:0 0;">48</div>
<div class="t" style="left:1108px;top:1085px;font-size:11.3px;line-height:13px;transform:scaleX(0.9500);transform-origin:0 0;">48</div>
<div class="a" style="left:468px;top:1100px;width:1043px;height:1px;background:#ebebeb"></div>
<div class="a" style="left:493px;top:1079px;width:1px;height:21px;background:#ececec"></div>
<div class="a" style="left:703px;top:1079px;width:1px;height:21px;background:#ececec"></div>
<div class="a" style="left:903px;top:1079px;width:1px;height:21px;background:#ececec"></div>
<div class="a" style="left:1103px;top:1079px;width:1px;height:21px;background:#ececec"></div>
<div class="a" style="left:1303px;top:1079px;width:1px;height:21px;background:#ececec"></div>
<div class="t" style="left:473px;top:1106px;font-size:11.3px;line-height:13px;transform:scaleX(0.9500);transform-origin:0 0;">5</div>
<div class="t" style="left:499px;top:1106px;font-size:11.3px;line-height:13px;transform:scaleX(0.8600);transform-origin:0 0;">PULONG</div>
<svg style="left:709px;top:1106px" width="9" height="9" viewBox="0 0 9 9"><rect x="0.5" y="0.5" width="8" height="8" fill="url(#winb)" stroke="#9aaac8"/><path d="M8.5 0.5v8h-8" fill="none" stroke="#2a3a58"/><path d="M2 4.5h5M4.5 2v5" stroke="#2a3a58"/></svg>
<svg style="left:727px;top:1105px" width="10" height="13" viewBox="0 0 10 13"><path d="M5.3 1.1L9 4.2 4 8 0.9 5.8z" fill="#90c4f6"/><path d="M0.9 5.8L4 8 4.3 11.8 0.9 8z" fill="#4a8ee0"/><path d="M9 4.2L9 7.7 4.3 11.8 4 8z" fill="#0c3aa8"/></svg>
<div class="t" style="left:742px;top:1105px;font-size:11.3px;line-height:13px;">ReturnLength</div>
<div class="t" style="left:908px;top:1106px;font-size:11.3px;line-height:13px;transform:scaleX(0.8600);transform-origin:0 0;">NULL</div>
<div class="t" style="left:1108px;top:1106px;font-size:11.3px;line-height:13px;transform:scaleX(0.8600);transform-origin:0 0;">NULL</div>
<div class="a" style="left:468px;top:1121px;width:1043px;height:1px;background:#ebebeb"></div>
<div class="a" style="left:493px;top:1100px;width:1px;height:21px;background:#ececec"></div>
<div class="a" style="left:703px;top:1100px;width:1px;height:21px;background:#ececec"></div>
<div class="a" style="left:903px;top:1100px;width:1px;height:21px;background:#ececec"></div>
<div class="a" style="left:1103px;top:1100px;width:1px;height:21px;background:#ececec"></div>
<div class="a" style="left:1303px;top:1100px;width:1px;height:21px;background:#ececec"></div>
<div class="a" style="left:469px;top:1130px;width:833px;height:3px;background:#b8b8b8"></div>
<div class="a" style="left:468px;top:1142px;width:1043px;height:1px;background:#ebebeb"></div>
<div class="a" style="left:493px;top:1143px;width:1px;height:28px;background:#ececec"></div>
<div class="a" style="left:703px;top:1143px;width:1px;height:28px;background:#ececec"></div>
<div class="a" style="left:903px;top:1143px;width:1px;height:28px;background:#ececec"></div>
<div class="a" style="left:1103px;top:1143px;width:1px;height:28px;background:#ececec"></div>
<div class="a" style="left:1303px;top:1143px;width:1px;height:28px;background:#ececec"></div>
<div class="t" style="left:499px;top:1148px;font-size:11.3px;line-height:13px;transform:scaleX(0.8850);transform-origin:0 0;">NTSTATUS</div>
<svg style="left:726px;top:1146px" width="13" height="14" viewBox="0 0 13 14"><path d="M1 6.5L6 1.2V4.4h4.8v4.3H6v3.6z" fill="url(#grn)"/><path d="M10.8 4.4v4.3H6v3.6L1 6.5" fill="none" stroke="#1e3a1a" stroke-width="1"/></svg>
<div class="t" style="left:742px;top:1147px;font-size:11.3px;line-height:13px;">Return</div>
<div class="t" style="left:1108px;top:1148px;font-size:11.3px;line-height:13px;transform:scaleX(0.8740);transform-origin:0 0;">STATUS_SUCCESS</div>
<div class="a" style="left:468px;top:1163px;width:1043px;height:1px;background:#ebebeb"></div>
<div class="a" style="left:1511px;top:972px;width:4px;height:200px;background:#000"></div>
<div class="ptitle" style="left:1515px;top:972px;width:556px;border-right:none;"></div>
<div class="t" style="left:1519px;top:976px;font-size:11.3px;line-height:13px;color:#f7f7f7;transform:scaleX(0.9830);transform-origin:0 0;">Hex Buffer: 48 bytes (Post-Call)</div>
<div class="tb" style="left:1515px;top:991px;width:556px;height:26px"></div>
<div class="a" style="left:2001px;top:991px;width:70px;height:1px;background:#000"></div>
<div class="a" style="left:2001px;top:1016px;width:70px;height:1px;background:#000"></div>
<div class="a" style="left:1515px;top:1017px;width:556px;height:154px;background:#fff"></div>
<div class="a" style="left:1515px;top:1171px;width:486px;height:1px;background:#a0a0a0"></div>
<div class="a" style="left:2001px;top:1171px;width:70px;height:1px;background:#000"></div>
<div class="a" style="left:1565px;top:995px;width:1px;height:18px;background:#c4c4c4"></div>
<div class="a" style="left:1595px;top:995px;width:1px;height:18px;background:#c4c4c4"></div>
<div class="a" style="left:1691px;top:995px;width:1px;height:18px;background:#c4c4c4"></div>
<div class="chk" style="left:1599px;top:993px;width:22px;height:22px;"></div>
<div class="chk" style="left:1695px;top:993px;width:22px;height:22px;"></div>
<svg style="left:1521px;top:996px" width="16" height="16" viewBox="0 0 16 16"><rect x="0.5" y="0.5" width="14" height="14" fill="url(#flop)" stroke="#3a3aa0"/><rect x="3" y="1" width="9" height="7" fill="#f4f6ff"/><rect x="4" y="10" width="6" height="4.5" fill="#e8e8f0"/><rect x="4.5" y="10.5" width="2.5" height="3" fill="#111"/><rect x="13" y="1" width="1" height="1" fill="#222"/></svg>
<div style="opacity:0.35"><svg style="left:1542px;top:996px" width="16" height="16" viewBox="0 0 16 16"><path d="M0.5 0.5h5.5l2 2v8.5H0.5z" fill="#fafcff" stroke="#6a86b8"/><path d="M2 4h4.5M2 6h4.5M2 8h3.5" stroke="#5f9ae0"/><path d="M6.5 4.5h5l3 3v7.5h-8z" fill="#fafcff" stroke="#4a68a8"/><path d="M8 8.5h5M8 10.5h5M8 12.5h5" stroke="#4f8ae0"/><path d="M11.5 4.5v3h3" fill="none" stroke="#4a68a8"/></svg></div>
<svg style="left:1572px;top:996px" width="16" height="14" viewBox="0 0 16 14"><rect x="0.5" y="0.5" width="15" height="13" fill="#fff" stroke="#3a5aa8"/><rect x="0.5" y="0.5" width="15" height="2" fill="#3a5aa8"/><path d="M4 8a4 3 0 0 1 7-2M12 6a4 3 0 0 1-7 3" stroke="#30a030" stroke-width="1.5" fill="none"/></svg>
<svg style="left:1601px;top:995px" width="18" height="17" viewBox="0 0 18 17"><rect x="1.5" y="0.5" width="6" height="8" fill="#eef2fa" stroke="#3a4a6a"/><path d="M3 2.5h3M3 4h3M3 5.5h3M3 7h3" stroke="#3a4a6a" stroke-width="0.8"/><text x="8.5" y="15.5" font-size="11.5" fill="#a81818" font-family="Liberation Sans">1</text></svg>
<svg style="left:1623px;top:995px" width="18" height="17" viewBox="0 0 18 17"><rect x="1.5" y="0.5" width="6" height="8" fill="#eef2fa" stroke="#3a4a6a"/><path d="M3 2.5h3M3 4h3M3 5.5h3M3 7h3" stroke="#3a4a6a" stroke-width="0.8"/><text x="8.5" y="15.5" font-size="11.5" fill="#a81818" font-family="Liberation Sans">2</text></svg>
<svg style="left:1645px;top:995px" width="18" height="17" viewBox="0 0 18 17"><rect x="1.5" y="0.5" width="6" height="8" fill="#eef2fa" stroke="#3a4a6a"/><path d="M3 2.5h3M3 4h3M3 5.5h3M3 7h3" stroke="#3a4a6a" stroke-width="0.8"/><text x="8.5" y="15.5" font-size="11.5" fill="#a81818" font-family="Liberation Sans">4</text></svg>
<svg style="left:1667px;top:995px" width="18" height="17" viewBox="0 0 18 17"><rect x="1.5" y="0.5" width="6" height="8" fill="#eef2fa" stroke="#3a4a6a"/><path d="M3 2.5h3M3 4h3M3 5.5h3M3 7h3" stroke="#3a4a6a" stroke-width="0.8"/><text x="8.5" y="15.5" font-size="11.5" fill="#a81818" font-family="Liberation Sans">8</text></svg>
<svg style="left:1698px;top:995px" width="17" height="16" viewBox="0 0 17 16"><text x="1" y="8" font-size="9" font-weight="bold" fill="#2a4a9a" font-family="Liberation Sans">L</text><path d="M7 11l4-4v2h5v4h-5v2z" fill="#3a7ae0"/></svg>
<svg style="left:1720px;top:995px" width="17" height="16" viewBox="0 0 17 16"><text x="1" y="8" font-size="9" font-weight="bold" fill="#2a4a9a" font-family="Liberation Sans">B</text><path d="M16 11l-4-4v2H7v4h5v2z" fill="#3a7ae0"/></svg>
<div class="t" style="left:1519px;top:1022px;font-family:Liberation Mono;font-size:11.67px;line-height:13px;color:#3a6ef0">0000</div>
<div class="t" style="left:1519px;top:1036px;font-family:Liberation Mono;font-size:11.67px;line-height:13px;color:#3a6ef0">0022</div>
<div class="t" style="left:1563px;top:1022px;font-family:Liberation Mono;font-size:11.67px;line-height:13px;color:#303030">03 01 00 00 00 00 00 00 00 20 30 00 01 00 00 00 0f 00 00 00 00 00 00 00 00</div>
<div class="t" style="left:1563px;top:1036px;font-family:Liberation Mono;font-size:11.67px;line-height:13px;color:#303030">00 00 00 00 00 00 5c 14 00 00 00 00 00 00</div>
<div class="a" style="left:0px;top:1172px;width:2071px;height:4px;background:linear-gradient(90deg,#e6e6e6 0,#e6e6e6 270px,#f2f2f2 270px)"></div>
<div class="ptitle" style="left:0px;top:1176px;width:2071px;border-right:none;border-left:none;"></div>
<div class="t" style="left:1px;top:1180px;font-size:11.3px;line-height:13px;color:#f7f7f7;">Call Stack: NtQueryInformationProcess (Ntdll.dll)</div>
<div class="a" style="left:482px;top:1195px;width:1589px;height:1px;background:#000"></div>
<div class="a" style="left:0px;top:1196px;width:482px;height:1px;background:#a8a8a8"></div>
<div class="t" style="left:2px;top:1203px;font-size:11.3px;line-height:13px;transform:scaleX(0.9900);transform-origin:0 0;">#</div>
<div class="t" style="left:27px;top:1203px;font-size:11.3px;line-height:13px;transform:scaleX(0.9943);transform-origin:0 0;">Module</div>
<div class="t" style="left:127px;top:1203px;font-size:11.3px;line-height:13px;transform:scaleX(1.0073);transform-origin:0 0;">Address</div>
<div class="t" style="left:431px;top:1203px;font-size:11.3px;line-height:13px;transform:scaleX(0.9943);transform-origin:0 0;">Offset</div>
<div class="t" style="left:717px;top:1203px;font-size:11.3px;line-height:13px;transform:scaleX(1.0135);transform-origin:0 0;">Location</div>
<div class="a" style="left:21px;top:1196px;width:1px;height:24px;background:#e8e8e8"></div>
<div class="a" style="left:121px;top:1196px;width:1px;height:24px;background:#e8e8e8"></div>
<div class="a" style="left:425px;top:1196px;width:1px;height:24px;background:#e8e8e8"></div>
<div class="a" style="left:711px;top:1196px;width:1px;height:24px;background:#e8e8e8"></div>
<div class="a" style="left:1011px;top:1196px;width:1px;height:24px;background:#e8e8e8"></div>
<div class="t" style="left:3px;top:1225px;font-size:11.3px;line-height:13px;transform:scaleX(0.9500);transform-origin:0 0;">1</div>
<div class="t" style="left:28px;top:1225px;font-size:11.3px;line-height:13px;transform:scaleX(1.0074);transform-origin:0 0;">poc.exe</div>
<div class="t" style="left:128px;top:1225px;font-size:11.3px;line-height:13px;transform:scaleX(0.9595);transform-origin:0 0;">0x0000000000b81db5</div>
<div class="t" style="left:432px;top:1225px;font-size:11.3px;line-height:13px;transform:scaleX(0.9617);transform-origin:0 0;">0x61db5</div>
<div class="t" style="left:3px;top:1244px;font-size:11.3px;line-height:13px;transform:scaleX(0.9500);transform-origin:0 0;">2</div>
<div class="t" style="left:28px;top:1244px;font-size:11.3px;line-height:13px;transform:scaleX(1.0074);transform-origin:0 0;">poc.exe</div>
<div class="t" style="left:128px;top:1244px;font-size:11.3px;line-height:13px;transform:scaleX(0.9495);transform-origin:0 0;">0x0000000000b80267</div>
<div class="t" style="left:432px;top:1244px;font-size:11.3px;line-height:13px;transform:scaleX(0.9356);transform-origin:0 0;">0x60267</div>
<div class="t" style="left:3px;top:1263px;font-size:11.3px;line-height:13px;transform:scaleX(0.9500);transform-origin:0 0;">3</div>
<div class="t" style="left:28px;top:1263px;font-size:11.3px;line-height:13px;transform:scaleX(1.0074);transform-origin:0 0;">poc.exe</div>
<div class="t" style="left:128px;top:1263px;font-size:11.3px;line-height:13px;transform:scaleX(0.9540);transform-origin:0 0;">0x0000000000b241c9</div>
<div class="t" style="left:432px;top:1263px;font-size:11.3px;line-height:13px;transform:scaleX(0.9469);transform-origin:0 0;">0x41c9</div>
<div class="t" style="left:3px;top:1282px;font-size:11.3px;line-height:13px;transform:scaleX(0.9500);transform-origin:0 0;">4</div>
<div class="t" style="left:28px;top:1282px;font-size:11.3px;line-height:13px;transform:scaleX(1.0074);transform-origin:0 0;">poc.exe</div>
<div class="t" style="left:128px;top:1282px;font-size:11.3px;line-height:13px;transform:scaleX(0.9591);transform-origin:0 0;">0x0000000000b7d5c7</div>
<div class="t" style="left:432px;top:1282px;font-size:11.3px;line-height:13px;transform:scaleX(0.9606);transform-origin:0 0;">0x5d5c7</div>
<div class="a" style="left:0px;top:1239px;width:2071px;height:1px;background:#ebebeb"></div>
<div class="a" style="left:0px;top:1258px;width:2071px;height:1px;background:#ebebeb"></div>
<div class="a" style="left:0px;top:1277px;width:2071px;height:1px;background:#ebebeb"></div>
<div class="a" style="left:0px;top:1296px;width:2071px;height:1px;background:#ebebeb"></div>
<div class="a" style="left:0px;top:1315px;width:2071px;height:1px;background:#ebebeb"></div>
<div class="a" style="left:22px;top:1220px;width:1px;height:94px;background:#ececec"></div>
<div class="a" style="left:122px;top:1220px;width:1px;height:94px;background:#ececec"></div>
<div class="a" style="left:426px;top:1220px;width:1px;height:94px;background:#ececec"></div>
<div class="a" style="left:712px;top:1220px;width:1px;height:94px;background:#ececec"></div>
<div class="a" style="left:1012px;top:1220px;width:1px;height:94px;background:#ececec"></div>
</body></html>
